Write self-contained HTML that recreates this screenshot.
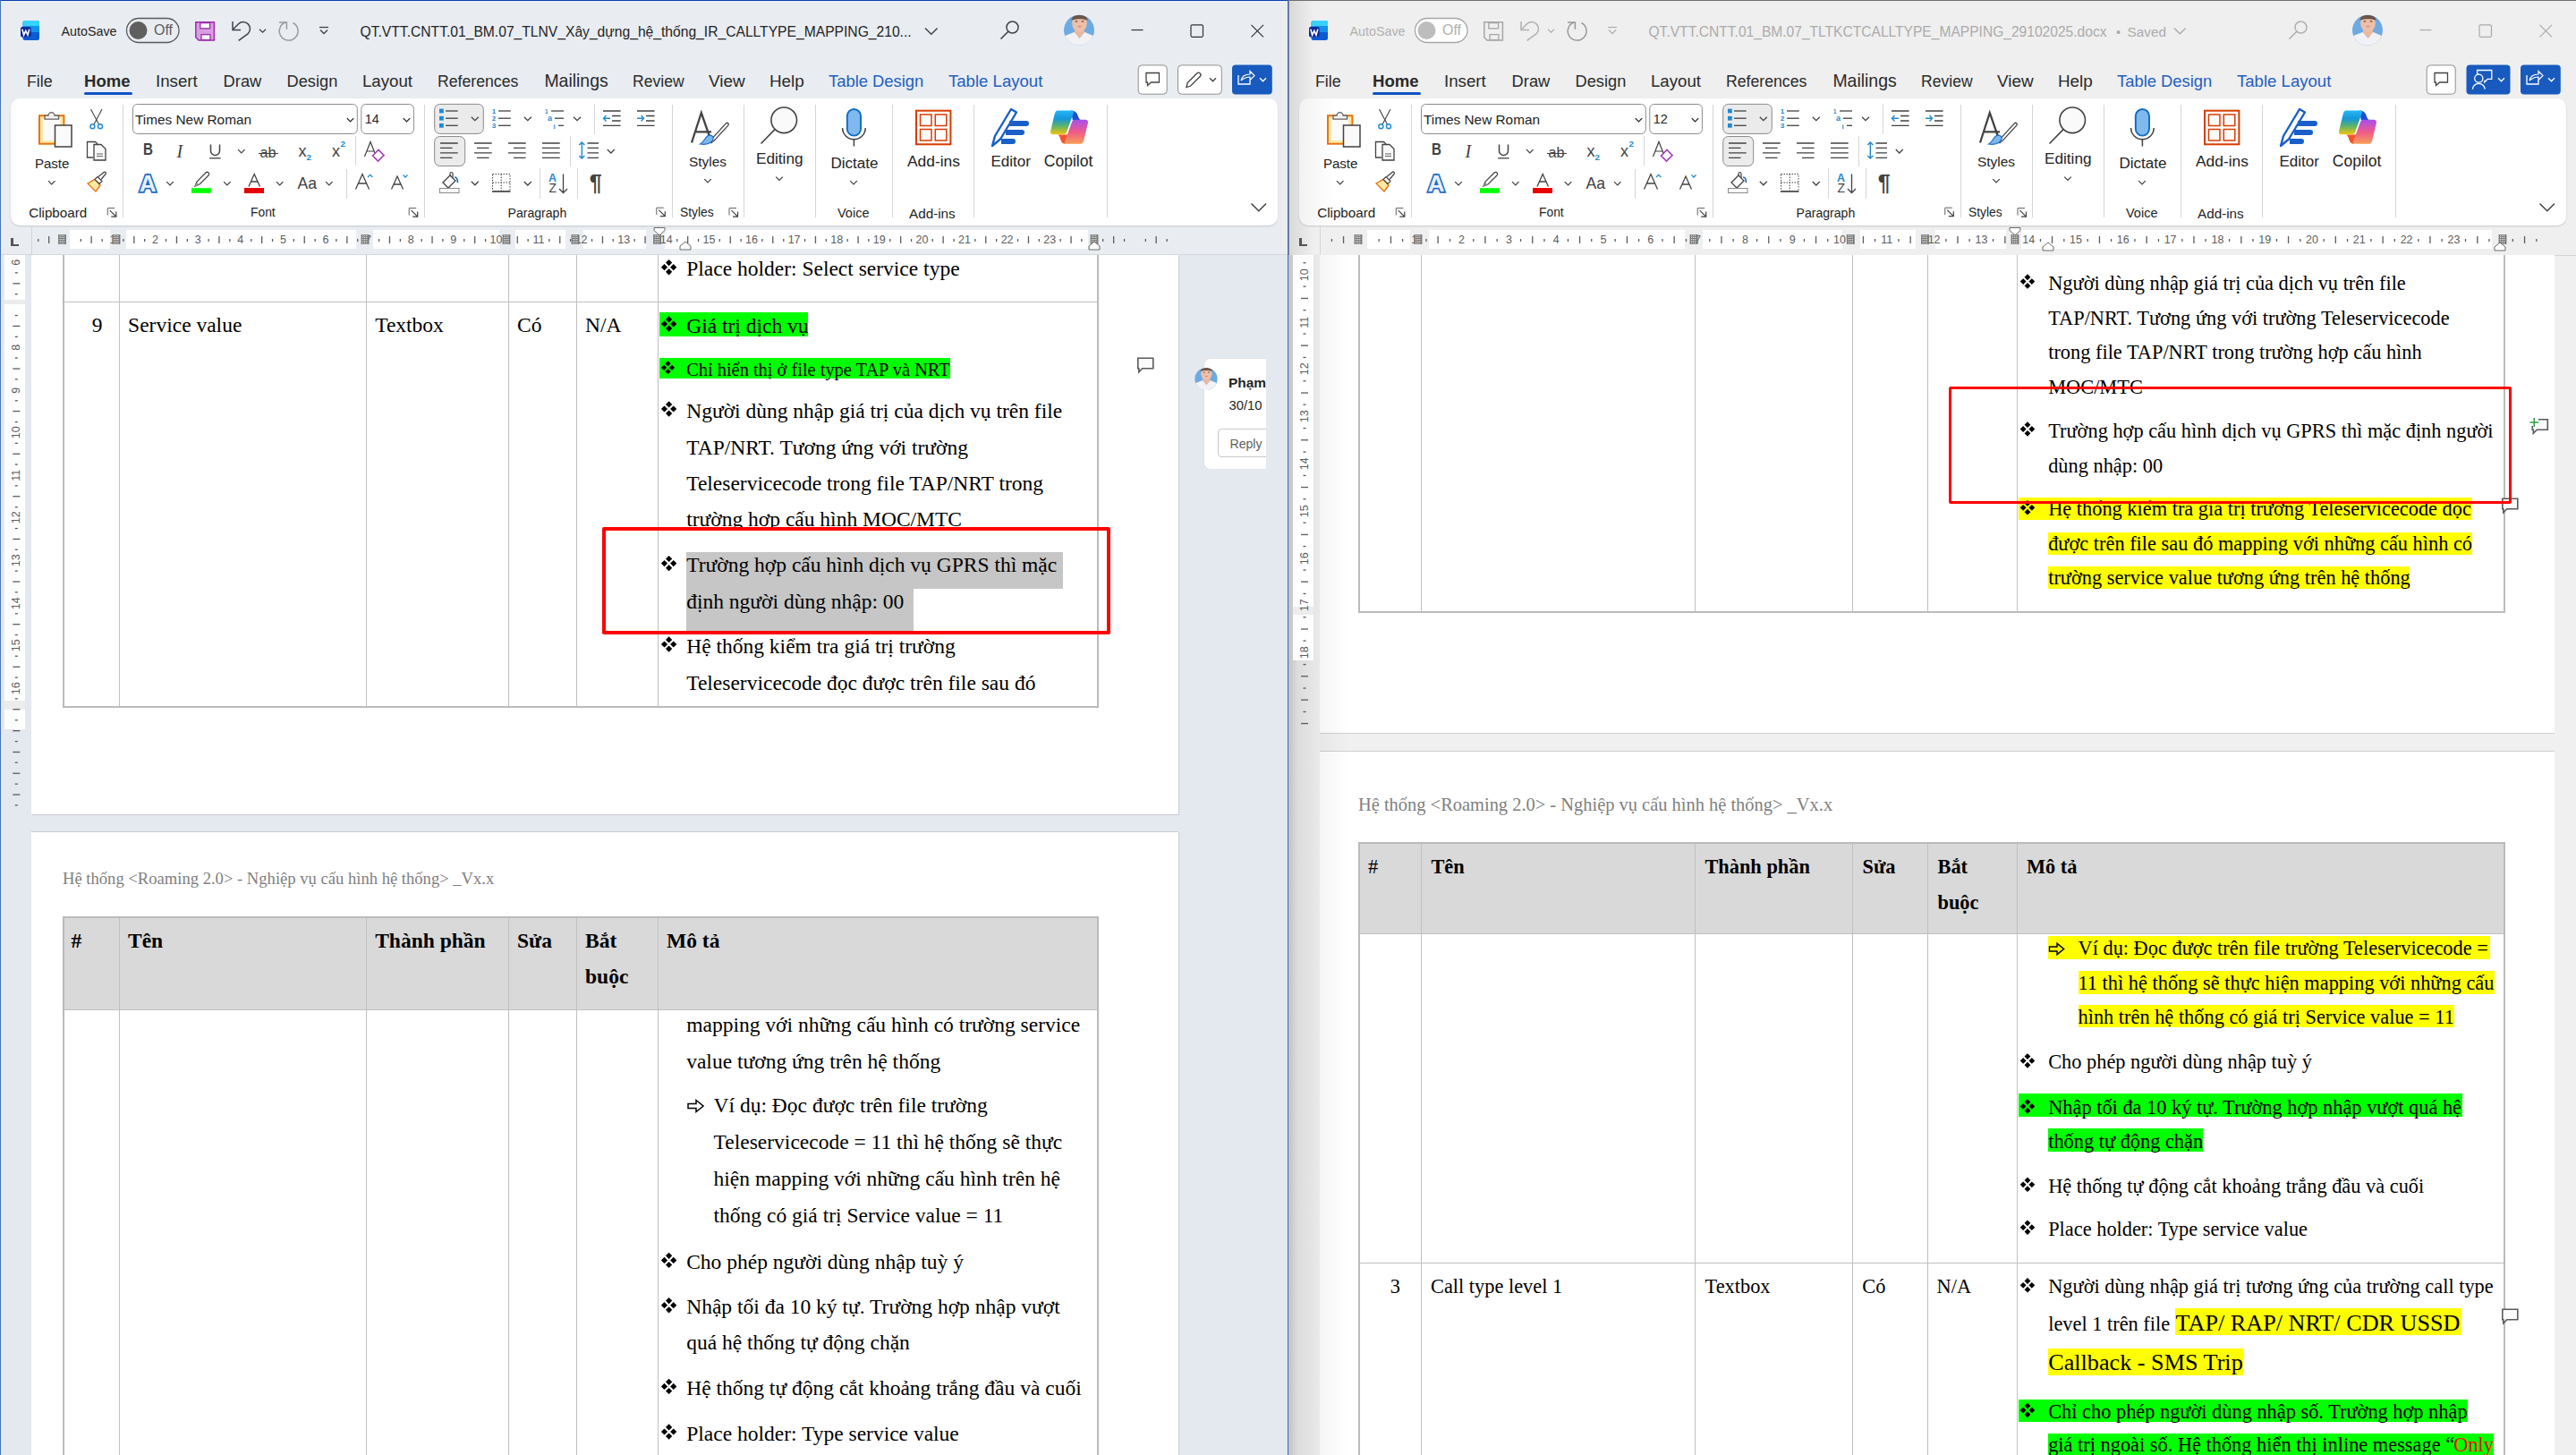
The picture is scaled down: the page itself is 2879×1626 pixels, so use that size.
<!DOCTYPE html><html><head><meta charset="utf-8"><style>html,body{margin:0;padding:0;}body{width:2879px;height:1626px;overflow:hidden;position:relative;background:#e9edf2;font-family:"Liberation Sans",sans-serif;}</style></head><body>
<div style="position:absolute;left:0.0px;top:0.0px;width:1440.0px;height:1626.0px;background:#e9edf2;"></div>
<div style="position:absolute;left:1440.0px;top:0.0px;width:1439.0px;height:1626.0px;background:#efefef;"></div>
<div style="position:absolute;left:1440.0px;top:0.0px;width:28.0px;height:1626.0px;background:linear-gradient(90deg,#d8d8d8,rgba(239,239,239,0));"></div>
<div style="position:absolute;left:1440.0px;top:0.0px;width:1.2px;height:1626.0px;background:#8a8a8a;"></div>
<div style="position:absolute;left:0.0px;top:0.0px;width:1440.0px;height:1.0px;background:#0b3fae;"></div>
<div style="position:absolute;left:0.0px;top:0.0px;width:1.0px;height:1626.0px;background:#4776b4;"></div>
<div style="position:absolute;left:1439.0px;top:0.0px;width:1.0px;height:1626.0px;background:#3a6cc0;"></div>
<div style="position:absolute;left:1440.0px;top:0.0px;width:1439.0px;height:1.0px;background:#6f6f6f;"></div>
<div style="position:absolute;left:1.0px;top:285.0px;width:1438.0px;height:1341.0px;background:#e4e8ef;"></div>
<div style="position:absolute;left:1.0px;top:284.0px;width:1438.0px;height:1.0px;background:#d3d8de;"></div>
<div style="position:absolute;left:5.0px;top:285.0px;width:23.0px;height:620.0px;background:#ffffff;"></div>
<div style="position:absolute;left:35.0px;top:285.0px;width:1282.2px;height:625.0px;background:#ffffff;box-shadow:1px 1px 0 #c9ccd0;"></div>
<div style="position:absolute;left:35.0px;top:929.5px;width:1282.2px;height:700.0px;background:#ffffff;box-shadow:0 -1px 0 #c9ccd0,1px 0 0 #c9ccd0;"></div>
<div style="position:absolute;left:34.0px;top:285.0px;width:1.0px;height:1341.0px;background:#d0d4d9;"></div>
<div style="position:absolute;left:1440.0px;top:285.4px;width:1439.0px;height:1341.0px;background:#f0f0f0;"></div>
<div style="position:absolute;left:1440.0px;top:284.8px;width:1439.0px;height:1.0px;background:#d4d4d4;"></div>
<div style="position:absolute;left:1440.0px;top:285.0px;width:34.0px;height:1341.0px;background:linear-gradient(90deg,#c9c9c9 0px,#e6e6e6 6px,#f0f0f0 30px);"></div>
<div style="position:absolute;left:1445.0px;top:285.4px;width:23.0px;height:526.0px;background:#ffffff;"></div>
<div style="position:absolute;left:1474.6px;top:285.4px;width:1380.4px;height:534.0px;background:#ffffff;box-shadow:0 1px 0 #cfcfcf;"></div>
<div style="position:absolute;left:1474.6px;top:840.2px;width:1380.4px;height:800.0px;background:#ffffff;box-shadow:0 -1px 0 #cfcfcf;"></div>
<div style="position:absolute;left:1474.0px;top:285.0px;width:1.0px;height:1341.0px;background:#d6d6d6;"></div>
<div style="position:absolute;left:70.0px;top:285.0px;width:2.0px;height:506.0px;background:#bbbbbb;"></div>
<div style="position:absolute;left:133.0px;top:285.0px;width:1.0px;height:505.0px;background:#c0c0c0;"></div>
<div style="position:absolute;left:409.0px;top:285.0px;width:1.0px;height:505.0px;background:#c0c0c0;"></div>
<div style="position:absolute;left:568.0px;top:285.0px;width:1.0px;height:505.0px;background:#c0c0c0;"></div>
<div style="position:absolute;left:644.0px;top:285.0px;width:1.0px;height:505.0px;background:#c0c0c0;"></div>
<div style="position:absolute;left:735.0px;top:285.0px;width:1.0px;height:505.0px;background:#c0c0c0;"></div>
<div style="position:absolute;left:1225.6px;top:285.0px;width:2.0px;height:506.0px;background:#bbbbbb;"></div>
<div style="position:absolute;left:71.0px;top:337.0px;width:1156.0px;height:1.0px;background:#c0c0c0;"></div>
<div style="position:absolute;left:70.0px;top:788.6px;width:1157.6px;height:2.0px;background:#bbbbbb;"></div>
<div style="position:absolute;left:767.2px;top:289.22px;font-family:'Liberation Serif', serif;font-size:23.50px;line-height:23.50px;font-weight:400;font-style:normal;color:#000;white-space:pre;">Place holder: Select service type</div>
<svg style="position:absolute;left:0;top:0;overflow:visible" width="1" height="1"><path d="M744.00 293.60 L747.60 290.00 L751.20 293.60 L747.60 297.20 Z" fill="#000"/><path d="M738.90 298.70 L742.50 295.10 L746.10 298.70 L742.50 302.30 Z" fill="#000"/><path d="M749.10 298.70 L752.70 295.10 L756.30 298.70 L752.70 302.30 Z" fill="#000"/><path d="M744.00 303.80 L747.60 300.20 L751.20 303.80 L747.60 307.40 Z" fill="#000"/></svg>
<div style="position:absolute;left:114.6px;top:351.52px;font-family:'Liberation Serif', serif;font-size:23.50px;line-height:23.50px;font-weight:400;font-style:normal;color:#000;white-space:pre;transform:translateX(-100%);">9</div>
<div style="position:absolute;left:143.1px;top:351.52px;font-family:'Liberation Serif', serif;font-size:23.50px;line-height:23.50px;font-weight:400;font-style:normal;color:#000;white-space:pre;">Service value</div>
<div style="position:absolute;left:419.2px;top:351.52px;font-family:'Liberation Serif', serif;font-size:23.50px;line-height:23.50px;font-weight:400;font-style:normal;color:#000;white-space:pre;">Textbox</div>
<div style="position:absolute;left:578.0px;top:351.52px;font-family:'Liberation Serif', serif;font-size:23.50px;line-height:23.50px;font-weight:400;font-style:normal;color:#000;white-space:pre;">Có</div>
<div style="position:absolute;left:654.0px;top:351.52px;font-family:'Liberation Serif', serif;font-size:23.50px;line-height:23.50px;font-weight:400;font-style:normal;color:#000;white-space:pre;">N/A</div>
<div style="position:absolute;left:737.0px;top:349.0px;width:166.0px;height:26.6px;background:#00ff00;"></div>
<div style="position:absolute;left:767.2px;top:352.52px;font-family:'Liberation Serif', serif;font-size:23.50px;line-height:23.50px;font-weight:400;font-style:normal;color:#000;white-space:pre;">Giá trị dịch vụ</div>
<svg style="position:absolute;left:0;top:0;overflow:visible" width="1" height="1"><path d="M744.00 356.90 L747.60 353.30 L751.20 356.90 L747.60 360.50 Z" fill="#000"/><path d="M738.90 362.00 L742.50 358.40 L746.10 362.00 L742.50 365.60 Z" fill="#000"/><path d="M749.10 362.00 L752.70 358.40 L756.30 362.00 L752.70 365.60 Z" fill="#000"/><path d="M744.00 367.10 L747.60 363.50 L751.20 367.10 L747.60 370.70 Z" fill="#000"/></svg>
<div style="position:absolute;left:737.0px;top:400.0px;width:325.0px;height:23.0px;background:#00ff00;"></div>
<div style="position:absolute;left:767.2px;top:402.72px;font-family:'Liberation Serif', serif;font-size:20.40px;line-height:20.40px;font-weight:400;font-style:normal;color:#000;white-space:pre;">Chỉ hiển thị ở file type TAP và NRT</div>
<svg style="position:absolute;left:0;top:0;overflow:visible" width="1" height="1"><path d="M743.37 406.36 L746.50 403.23 L749.63 406.36 L746.50 409.50 Z" fill="#000"/><path d="M738.93 410.80 L742.06 407.67 L745.19 410.80 L742.06 413.93 Z" fill="#000"/><path d="M747.81 410.80 L750.94 407.67 L754.07 410.80 L750.94 413.93 Z" fill="#000"/><path d="M743.37 415.24 L746.50 412.11 L749.63 415.24 L746.50 418.37 Z" fill="#000"/></svg>
<div style="position:absolute;left:767.2px;top:447.52px;font-family:'Liberation Serif', serif;font-size:23.50px;line-height:23.50px;font-weight:400;font-style:normal;color:#000;white-space:pre;">Người dùng nhập giá trị của dịch vụ trên file</div>
<svg style="position:absolute;left:0;top:0;overflow:visible" width="1" height="1"><path d="M744.00 451.90 L747.60 448.30 L751.20 451.90 L747.60 455.50 Z" fill="#000"/><path d="M738.90 457.00 L742.50 453.40 L746.10 457.00 L742.50 460.60 Z" fill="#000"/><path d="M749.10 457.00 L752.70 453.40 L756.30 457.00 L752.70 460.60 Z" fill="#000"/><path d="M744.00 462.10 L747.60 458.50 L751.20 462.10 L747.60 465.70 Z" fill="#000"/></svg>
<div style="position:absolute;left:767.2px;top:488.52px;font-family:'Liberation Serif', serif;font-size:23.50px;line-height:23.50px;font-weight:400;font-style:normal;color:#000;white-space:pre;">TAP/NRT. Tương ứng với trường</div>
<div style="position:absolute;left:767.2px;top:528.52px;font-family:'Liberation Serif', serif;font-size:23.50px;line-height:23.50px;font-weight:400;font-style:normal;color:#000;white-space:pre;">Teleservicecode trong file TAP/NRT trong</div>
<div style="position:absolute;left:767.2px;top:569.02px;font-family:'Liberation Serif', serif;font-size:23.50px;line-height:23.50px;font-weight:400;font-style:normal;color:#000;white-space:pre;">trường hợp cấu hình MOC/MTC</div>
<div style="position:absolute;left:767.2px;top:617.0px;width:420.6px;height:41.0px;background:#c6c6c6;"></div>
<div style="position:absolute;left:767.2px;top:658.0px;width:253.5px;height:46.6px;background:#c6c6c6;"></div>
<div style="position:absolute;left:767.2px;top:620.12px;font-family:'Liberation Serif', serif;font-size:23.50px;line-height:23.50px;font-weight:400;font-style:normal;color:#000;white-space:pre;">Trường hợp cấu hình dịch vụ GPRS thì mặc</div>
<svg style="position:absolute;left:0;top:0;overflow:visible" width="1" height="1"><path d="M744.00 624.50 L747.60 620.90 L751.20 624.50 L747.60 628.10 Z" fill="#000"/><path d="M738.90 629.60 L742.50 626.00 L746.10 629.60 L742.50 633.20 Z" fill="#000"/><path d="M749.10 629.60 L752.70 626.00 L756.30 629.60 L752.70 633.20 Z" fill="#000"/><path d="M744.00 634.70 L747.60 631.10 L751.20 634.70 L747.60 638.30 Z" fill="#000"/></svg>
<div style="position:absolute;left:767.2px;top:661.32px;font-family:'Liberation Serif', serif;font-size:23.50px;line-height:23.50px;font-weight:400;font-style:normal;color:#000;white-space:pre;">định người dùng nhập: 00</div>
<div style="position:absolute;left:767.2px;top:710.52px;font-family:'Liberation Serif', serif;font-size:23.50px;line-height:23.50px;font-weight:400;font-style:normal;color:#000;white-space:pre;">Hệ thống kiểm tra giá trị trường</div>
<svg style="position:absolute;left:0;top:0;overflow:visible" width="1" height="1"><path d="M744.00 714.90 L747.60 711.30 L751.20 714.90 L747.60 718.50 Z" fill="#000"/><path d="M738.90 720.00 L742.50 716.40 L746.10 720.00 L742.50 723.60 Z" fill="#000"/><path d="M749.10 720.00 L752.70 716.40 L756.30 720.00 L752.70 723.60 Z" fill="#000"/><path d="M744.00 725.10 L747.60 721.50 L751.20 725.10 L747.60 728.70 Z" fill="#000"/></svg>
<div style="position:absolute;left:767.2px;top:751.52px;font-family:'Liberation Serif', serif;font-size:23.50px;line-height:23.50px;font-weight:400;font-style:normal;color:#000;white-space:pre;">Teleservicecode đọc được trên file sau đó</div>
<div style="position:absolute;left:70.0px;top:972.82px;font-family:'Liberation Serif', serif;font-size:18.60px;line-height:18.60px;font-weight:400;font-style:normal;color:#808080;white-space:pre;">Hệ thống &lt;Roaming 2.0&gt; - Nghiệp vụ cấu hình hệ thống&gt; _Vx.x</div>
<div style="position:absolute;left:71.0px;top:1025.0px;width:1156.0px;height:103.0px;background:#d9d9d9;"></div>
<div style="position:absolute;left:70.0px;top:1024.0px;width:2.0px;height:602.0px;background:#bbbbbb;"></div>
<div style="position:absolute;left:133.0px;top:1025.0px;width:1.0px;height:601.0px;background:#c0c0c0;"></div>
<div style="position:absolute;left:409.0px;top:1025.0px;width:1.0px;height:601.0px;background:#c0c0c0;"></div>
<div style="position:absolute;left:568.0px;top:1025.0px;width:1.0px;height:601.0px;background:#c0c0c0;"></div>
<div style="position:absolute;left:644.0px;top:1025.0px;width:1.0px;height:601.0px;background:#c0c0c0;"></div>
<div style="position:absolute;left:735.0px;top:1025.0px;width:1.0px;height:601.0px;background:#c0c0c0;"></div>
<div style="position:absolute;left:1225.6px;top:1024.0px;width:2.0px;height:602.0px;background:#bbbbbb;"></div>
<div style="position:absolute;left:70.0px;top:1024.0px;width:1157.6px;height:2.0px;background:#bbbbbb;"></div>
<div style="position:absolute;left:71.0px;top:1128.0px;width:1156.0px;height:1.0px;background:#c0c0c0;"></div>
<div style="position:absolute;left:79.6px;top:1039.52px;font-family:'Liberation Serif', serif;font-size:23.50px;line-height:23.50px;font-weight:700;font-style:normal;color:#000;white-space:pre;">#</div>
<div style="position:absolute;left:143.0px;top:1039.52px;font-family:'Liberation Serif', serif;font-size:23.50px;line-height:23.50px;font-weight:700;font-style:normal;color:#000;white-space:pre;">Tên</div>
<div style="position:absolute;left:419.2px;top:1039.52px;font-family:'Liberation Serif', serif;font-size:23.50px;line-height:23.50px;font-weight:700;font-style:normal;color:#000;white-space:pre;">Thành phần</div>
<div style="position:absolute;left:578.0px;top:1039.52px;font-family:'Liberation Serif', serif;font-size:23.50px;line-height:23.50px;font-weight:700;font-style:normal;color:#000;white-space:pre;">Sửa</div>
<div style="position:absolute;left:654.0px;top:1039.52px;font-family:'Liberation Serif', serif;font-size:23.50px;line-height:23.50px;font-weight:700;font-style:normal;color:#000;white-space:pre;">Bắt</div>
<div style="position:absolute;left:654.0px;top:1079.92px;font-family:'Liberation Serif', serif;font-size:23.50px;line-height:23.50px;font-weight:700;font-style:normal;color:#000;white-space:pre;">buộc</div>
<div style="position:absolute;left:745.0px;top:1039.52px;font-family:'Liberation Serif', serif;font-size:23.50px;line-height:23.50px;font-weight:700;font-style:normal;color:#000;white-space:pre;">Mô tả</div>
<div style="position:absolute;left:767.2px;top:1134.12px;font-family:'Liberation Serif', serif;font-size:23.50px;line-height:23.50px;font-weight:400;font-style:normal;color:#000;white-space:pre;">mapping với những cấu hình có trường service</div>
<div style="position:absolute;left:767.2px;top:1175.02px;font-family:'Liberation Serif', serif;font-size:23.50px;line-height:23.50px;font-weight:400;font-style:normal;color:#000;white-space:pre;">value tương ứng trên hệ thống</div>
<svg style="position:absolute;left:0;top:0;overflow:visible" width="1" height="1"><path d="M769.00 1233.40 L778.00 1233.40 L778.00 1229.50 L786.00 1236.00 L778.00 1242.50 L778.00 1238.60 L769.00 1238.60 Z" fill="none" stroke="#000" stroke-width="1.50" stroke-linejoin="miter"/></svg>
<div style="position:absolute;left:797.6px;top:1224.42px;font-family:'Liberation Serif', serif;font-size:23.50px;line-height:23.50px;font-weight:400;font-style:normal;color:#000;white-space:pre;">Ví dụ: Đọc được trên file trường</div>
<div style="position:absolute;left:797.6px;top:1265.32px;font-family:'Liberation Serif', serif;font-size:23.50px;line-height:23.50px;font-weight:400;font-style:normal;color:#000;white-space:pre;">Teleservicecode = 11 thì hệ thống sẽ thực</div>
<div style="position:absolute;left:797.6px;top:1305.72px;font-family:'Liberation Serif', serif;font-size:23.50px;line-height:23.50px;font-weight:400;font-style:normal;color:#000;white-space:pre;">hiện mapping với những cấu hình trên hệ</div>
<div style="position:absolute;left:797.6px;top:1346.72px;font-family:'Liberation Serif', serif;font-size:23.50px;line-height:23.50px;font-weight:400;font-style:normal;color:#000;white-space:pre;">thống có giá trị Service value = 11</div>
<div style="position:absolute;left:767.2px;top:1398.92px;font-family:'Liberation Serif', serif;font-size:23.50px;line-height:23.50px;font-weight:400;font-style:normal;color:#000;white-space:pre;">Cho phép người dùng nhập tuỳ ý</div>
<svg style="position:absolute;left:0;top:0;overflow:visible" width="1" height="1"><path d="M744.00 1403.30 L747.60 1399.70 L751.20 1403.30 L747.60 1406.90 Z" fill="#000"/><path d="M738.90 1408.40 L742.50 1404.80 L746.10 1408.40 L742.50 1412.00 Z" fill="#000"/><path d="M749.10 1408.40 L752.70 1404.80 L756.30 1408.40 L752.70 1412.00 Z" fill="#000"/><path d="M744.00 1413.50 L747.60 1409.90 L751.20 1413.50 L747.60 1417.10 Z" fill="#000"/></svg>
<div style="position:absolute;left:767.2px;top:1449.22px;font-family:'Liberation Serif', serif;font-size:23.50px;line-height:23.50px;font-weight:400;font-style:normal;color:#000;white-space:pre;">Nhập tối đa 10 ký tự. Trường hợp nhập vượt</div>
<svg style="position:absolute;left:0;top:0;overflow:visible" width="1" height="1"><path d="M744.00 1453.60 L747.60 1450.00 L751.20 1453.60 L747.60 1457.20 Z" fill="#000"/><path d="M738.90 1458.70 L742.50 1455.10 L746.10 1458.70 L742.50 1462.30 Z" fill="#000"/><path d="M749.10 1458.70 L752.70 1455.10 L756.30 1458.70 L752.70 1462.30 Z" fill="#000"/><path d="M744.00 1463.80 L747.60 1460.20 L751.20 1463.80 L747.60 1467.40 Z" fill="#000"/></svg>
<div style="position:absolute;left:767.2px;top:1489.02px;font-family:'Liberation Serif', serif;font-size:23.50px;line-height:23.50px;font-weight:400;font-style:normal;color:#000;white-space:pre;">quá hệ thống tự động chặn</div>
<div style="position:absolute;left:767.2px;top:1539.92px;font-family:'Liberation Serif', serif;font-size:23.50px;line-height:23.50px;font-weight:400;font-style:normal;color:#000;white-space:pre;">Hệ thống tự động cắt khoảng trắng đầu và cuối</div>
<svg style="position:absolute;left:0;top:0;overflow:visible" width="1" height="1"><path d="M744.00 1544.30 L747.60 1540.70 L751.20 1544.30 L747.60 1547.90 Z" fill="#000"/><path d="M738.90 1549.40 L742.50 1545.80 L746.10 1549.40 L742.50 1553.00 Z" fill="#000"/><path d="M749.10 1549.40 L752.70 1545.80 L756.30 1549.40 L752.70 1553.00 Z" fill="#000"/><path d="M744.00 1554.50 L747.60 1550.90 L751.20 1554.50 L747.60 1558.10 Z" fill="#000"/></svg>
<div style="position:absolute;left:767.2px;top:1590.52px;font-family:'Liberation Serif', serif;font-size:23.50px;line-height:23.50px;font-weight:400;font-style:normal;color:#000;white-space:pre;">Place holder: Type service value</div>
<svg style="position:absolute;left:0;top:0;overflow:visible" width="1" height="1"><path d="M744.00 1594.90 L747.60 1591.30 L751.20 1594.90 L747.60 1598.50 Z" fill="#000"/><path d="M738.90 1600.00 L742.50 1596.40 L746.10 1600.00 L742.50 1603.60 Z" fill="#000"/><path d="M749.10 1600.00 L752.70 1596.40 L756.30 1600.00 L752.70 1603.60 Z" fill="#000"/><path d="M744.00 1605.10 L747.60 1601.50 L751.20 1605.10 L747.60 1608.70 Z" fill="#000"/></svg>
<div style="position:absolute;left:1518.0px;top:285.4px;width:2.0px;height:399.4px;background:#bbbbbb;"></div>
<div style="position:absolute;left:1588.0px;top:285.4px;width:1.0px;height:398.6px;background:#c0c0c0;"></div>
<div style="position:absolute;left:1894.0px;top:285.4px;width:1.0px;height:398.6px;background:#c0c0c0;"></div>
<div style="position:absolute;left:2070.0px;top:285.4px;width:1.0px;height:398.6px;background:#c0c0c0;"></div>
<div style="position:absolute;left:2154.0px;top:285.4px;width:1.0px;height:398.6px;background:#c0c0c0;"></div>
<div style="position:absolute;left:2254.0px;top:285.4px;width:1.0px;height:398.6px;background:#c0c0c0;"></div>
<div style="position:absolute;left:2798.0px;top:285.4px;width:2.0px;height:399.4px;background:#bbbbbb;"></div>
<div style="position:absolute;left:1518.0px;top:683.0px;width:1282.0px;height:2.0px;background:#bbbbbb;"></div>
<div style="position:absolute;left:2289.2px;top:305.68px;font-family:'Liberation Serif', serif;font-size:22.36px;line-height:22.36px;font-weight:400;font-style:normal;color:#000;white-space:pre;">Người dùng nhập giá trị của dịch vụ trên file</div>
<svg style="position:absolute;left:0;top:0;overflow:visible" width="1" height="1"><path d="M2262.58 309.75 L2266.00 306.33 L2269.42 309.75 L2266.00 313.17 Z" fill="#000"/><path d="M2257.74 314.60 L2261.16 311.18 L2264.58 314.60 L2261.16 318.02 Z" fill="#000"/><path d="M2267.42 314.60 L2270.84 311.18 L2274.26 314.60 L2270.84 318.02 Z" fill="#000"/><path d="M2262.58 319.44 L2266.00 316.02 L2269.42 319.44 L2266.00 322.87 Z" fill="#000"/></svg>
<div style="position:absolute;left:2289.2px;top:344.68px;font-family:'Liberation Serif', serif;font-size:22.36px;line-height:22.36px;font-weight:400;font-style:normal;color:#000;white-space:pre;">TAP/NRT. Tương ứng với trường Teleservicecode</div>
<div style="position:absolute;left:2289.2px;top:383.08px;font-family:'Liberation Serif', serif;font-size:22.36px;line-height:22.36px;font-weight:400;font-style:normal;color:#000;white-space:pre;">trong file TAP/NRT trong trường hợp cấu hình</div>
<div style="position:absolute;left:2289.2px;top:421.68px;font-family:'Liberation Serif', serif;font-size:22.36px;line-height:22.36px;font-weight:400;font-style:normal;color:#000;white-space:pre;">MOC/MTC</div>
<div style="position:absolute;left:2289.2px;top:470.58px;font-family:'Liberation Serif', serif;font-size:22.36px;line-height:22.36px;font-weight:400;font-style:normal;color:#000;white-space:pre;">Trường hợp cấu hình dịch vụ GPRS thì mặc định người</div>
<svg style="position:absolute;left:0;top:0;overflow:visible" width="1" height="1"><path d="M2262.58 474.65 L2266.00 471.23 L2269.42 474.65 L2266.00 478.07 Z" fill="#000"/><path d="M2257.74 479.50 L2261.16 476.08 L2264.58 479.50 L2261.16 482.92 Z" fill="#000"/><path d="M2267.42 479.50 L2270.84 476.08 L2274.26 479.50 L2270.84 482.92 Z" fill="#000"/><path d="M2262.58 484.35 L2266.00 480.93 L2269.42 484.35 L2266.00 487.77 Z" fill="#000"/></svg>
<div style="position:absolute;left:2289.2px;top:509.58px;font-family:'Liberation Serif', serif;font-size:22.36px;line-height:22.36px;font-weight:400;font-style:normal;color:#000;white-space:pre;">dùng nhập: 00</div>
<div style="position:absolute;left:2256.0px;top:556.0px;width:507.0px;height:25.0px;background:#ffff00;"></div>
<div style="position:absolute;left:2289.0px;top:595.0px;width:474.0px;height:25.0px;background:#ffff00;"></div>
<div style="position:absolute;left:2289.0px;top:633.0px;width:403.6px;height:25.0px;background:#ffff00;"></div>
<div style="position:absolute;left:2289.2px;top:558.38px;font-family:'Liberation Serif', serif;font-size:22.36px;line-height:22.36px;font-weight:400;font-style:normal;color:#000;white-space:pre;">Hệ thống kiểm tra giá trị trường Teleservicecode đọc</div>
<svg style="position:absolute;left:0;top:0;overflow:visible" width="1" height="1"><path d="M2262.58 562.45 L2266.00 559.03 L2269.42 562.45 L2266.00 565.87 Z" fill="#000"/><path d="M2257.74 567.30 L2261.16 563.88 L2264.58 567.30 L2261.16 570.72 Z" fill="#000"/><path d="M2267.42 567.30 L2270.84 563.88 L2274.26 567.30 L2270.84 570.72 Z" fill="#000"/><path d="M2262.58 572.14 L2266.00 568.73 L2269.42 572.14 L2266.00 575.56 Z" fill="#000"/></svg>
<div style="position:absolute;left:2289.2px;top:596.78px;font-family:'Liberation Serif', serif;font-size:22.36px;line-height:22.36px;font-weight:400;font-style:normal;color:#000;white-space:pre;">được trên file sau đó mapping với những cấu hình có</div>
<div style="position:absolute;left:2289.2px;top:635.18px;font-family:'Liberation Serif', serif;font-size:22.36px;line-height:22.36px;font-weight:400;font-style:normal;color:#000;white-space:pre;">trường service value tương ứng trên hệ thống</div>
<div style="position:absolute;left:1518.0px;top:889.08px;font-family:'Liberation Serif', serif;font-size:20.45px;line-height:20.45px;font-weight:400;font-style:normal;color:#808080;white-space:pre;">Hệ thống &lt;Roaming 2.0&gt; - Nghiệp vụ cấu hình hệ thống&gt; _Vx.x</div>
<div style="position:absolute;left:1519.0px;top:942.5px;width:1280.0px;height:101.0px;background:#d9d9d9;"></div>
<div style="position:absolute;left:1518.0px;top:941.5px;width:2.0px;height:684.5px;background:#bbbbbb;"></div>
<div style="position:absolute;left:1588.0px;top:942.0px;width:1.0px;height:684.0px;background:#c0c0c0;"></div>
<div style="position:absolute;left:1894.0px;top:942.0px;width:1.0px;height:684.0px;background:#c0c0c0;"></div>
<div style="position:absolute;left:2070.0px;top:942.0px;width:1.0px;height:684.0px;background:#c0c0c0;"></div>
<div style="position:absolute;left:2154.0px;top:942.0px;width:1.0px;height:684.0px;background:#c0c0c0;"></div>
<div style="position:absolute;left:2254.0px;top:942.0px;width:1.0px;height:684.0px;background:#c0c0c0;"></div>
<div style="position:absolute;left:2798.0px;top:941.5px;width:2.0px;height:684.5px;background:#bbbbbb;"></div>
<div style="position:absolute;left:1518.0px;top:940.8px;width:1282.0px;height:2.0px;background:#bbbbbb;"></div>
<div style="position:absolute;left:1519.0px;top:1043.0px;width:1280.0px;height:1.0px;background:#c0c0c0;"></div>
<div style="position:absolute;left:1519.0px;top:1410.5px;width:1280.0px;height:1.0px;background:#c0c0c0;"></div>
<div style="position:absolute;left:1529.0px;top:958.38px;font-family:'Liberation Serif', serif;font-size:22.36px;line-height:22.36px;font-weight:400;font-style:normal;color:#000;white-space:pre;">#</div>
<div style="position:absolute;left:1599.4px;top:958.38px;font-family:'Liberation Serif', serif;font-size:22.36px;line-height:22.36px;font-weight:700;font-style:normal;color:#000;white-space:pre;">Tên</div>
<div style="position:absolute;left:1905.4px;top:958.38px;font-family:'Liberation Serif', serif;font-size:22.36px;line-height:22.36px;font-weight:700;font-style:normal;color:#000;white-space:pre;">Thành phần</div>
<div style="position:absolute;left:2081.5px;top:958.38px;font-family:'Liberation Serif', serif;font-size:22.36px;line-height:22.36px;font-weight:700;font-style:normal;color:#000;white-space:pre;">Sửa</div>
<div style="position:absolute;left:2165.5px;top:958.38px;font-family:'Liberation Serif', serif;font-size:22.36px;line-height:22.36px;font-weight:700;font-style:normal;color:#000;white-space:pre;">Bắt</div>
<div style="position:absolute;left:2165.5px;top:997.68px;font-family:'Liberation Serif', serif;font-size:22.36px;line-height:22.36px;font-weight:700;font-style:normal;color:#000;white-space:pre;">buộc</div>
<div style="position:absolute;left:2265.0px;top:958.38px;font-family:'Liberation Serif', serif;font-size:22.36px;line-height:22.36px;font-weight:700;font-style:normal;color:#000;white-space:pre;">Mô tả</div>
<div style="position:absolute;left:2289.0px;top:1046.0px;width:494.0px;height:26.0px;background:#ffff00;"></div>
<div style="position:absolute;left:2322.5px;top:1084.6px;width:465.5px;height:26.4px;background:#ffff00;"></div>
<div style="position:absolute;left:2322.5px;top:1123.0px;width:420.5px;height:25.0px;background:#ffff00;"></div>
<svg style="position:absolute;left:0;top:0;overflow:visible" width="1" height="1"><path d="M2290.50 1058.03 L2299.05 1058.03 L2299.05 1054.33 L2306.65 1060.50 L2299.05 1066.67 L2299.05 1062.97 L2290.50 1062.97 Z" fill="none" stroke="#000" stroke-width="1.42" stroke-linejoin="miter"/></svg>
<div style="position:absolute;left:2322.5px;top:1049.18px;font-family:'Liberation Serif', serif;font-size:22.36px;line-height:22.36px;font-weight:400;font-style:normal;color:#000;white-space:pre;">Ví dụ: Đọc được trên file trường Teleservicecode =</div>
<div style="position:absolute;left:2322.5px;top:1087.88px;font-family:'Liberation Serif', serif;font-size:22.36px;line-height:22.36px;font-weight:400;font-style:normal;color:#000;white-space:pre;">11 thì hệ thống sẽ thực hiện mapping với những cấu</div>
<div style="position:absolute;left:2322.5px;top:1126.18px;font-family:'Liberation Serif', serif;font-size:22.36px;line-height:22.36px;font-weight:400;font-style:normal;color:#000;white-space:pre;">hình trên hệ thống có giá trị Service value = 11</div>
<div style="position:absolute;left:2289.2px;top:1176.48px;font-family:'Liberation Serif', serif;font-size:22.36px;line-height:22.36px;font-weight:400;font-style:normal;color:#000;white-space:pre;">Cho phép người dùng nhập tuỳ ý</div>
<svg style="position:absolute;left:0;top:0;overflow:visible" width="1" height="1"><path d="M2262.58 1180.56 L2266.00 1177.13 L2269.42 1180.56 L2266.00 1183.98 Z" fill="#000"/><path d="M2257.74 1185.40 L2261.16 1181.98 L2264.58 1185.40 L2261.16 1188.82 Z" fill="#000"/><path d="M2267.42 1185.40 L2270.84 1181.98 L2274.26 1185.40 L2270.84 1188.82 Z" fill="#000"/><path d="M2262.58 1190.25 L2266.00 1186.83 L2269.42 1190.25 L2266.00 1193.67 Z" fill="#000"/></svg>
<div style="position:absolute;left:2256.0px;top:1222.0px;width:495.5px;height:26.0px;background:#00ff00;"></div>
<div style="position:absolute;left:2289.0px;top:1261.0px;width:172.6px;height:25.6px;background:#00ff00;"></div>
<div style="position:absolute;left:2289.2px;top:1227.48px;font-family:'Liberation Serif', serif;font-size:22.36px;line-height:22.36px;font-weight:400;font-style:normal;color:#000;white-space:pre;">Nhập tối đa 10 ký tự. Trường hợp nhập vượt quá hệ</div>
<svg style="position:absolute;left:0;top:0;overflow:visible" width="1" height="1"><path d="M2262.58 1231.56 L2266.00 1228.13 L2269.42 1231.56 L2266.00 1234.98 Z" fill="#000"/><path d="M2257.74 1236.40 L2261.16 1232.98 L2264.58 1236.40 L2261.16 1239.82 Z" fill="#000"/><path d="M2267.42 1236.40 L2270.84 1232.98 L2274.26 1236.40 L2270.84 1239.82 Z" fill="#000"/><path d="M2262.58 1241.25 L2266.00 1237.83 L2269.42 1241.25 L2266.00 1244.67 Z" fill="#000"/></svg>
<div style="position:absolute;left:2289.2px;top:1264.88px;font-family:'Liberation Serif', serif;font-size:22.36px;line-height:22.36px;font-weight:400;font-style:normal;color:#000;white-space:pre;">thống tự động chặn</div>
<div style="position:absolute;left:2289.2px;top:1314.88px;font-family:'Liberation Serif', serif;font-size:22.36px;line-height:22.36px;font-weight:400;font-style:normal;color:#000;white-space:pre;">Hệ thống tự động cắt khoảng trắng đầu và cuối</div>
<svg style="position:absolute;left:0;top:0;overflow:visible" width="1" height="1"><path d="M2262.58 1318.96 L2266.00 1315.54 L2269.42 1318.96 L2266.00 1322.38 Z" fill="#000"/><path d="M2257.74 1323.80 L2261.16 1320.38 L2264.58 1323.80 L2261.16 1327.22 Z" fill="#000"/><path d="M2267.42 1323.80 L2270.84 1320.38 L2274.26 1323.80 L2270.84 1327.22 Z" fill="#000"/><path d="M2262.58 1328.65 L2266.00 1325.23 L2269.42 1328.65 L2266.00 1332.07 Z" fill="#000"/></svg>
<div style="position:absolute;left:2289.2px;top:1362.78px;font-family:'Liberation Serif', serif;font-size:22.36px;line-height:22.36px;font-weight:400;font-style:normal;color:#000;white-space:pre;">Place holder: Type service value</div>
<svg style="position:absolute;left:0;top:0;overflow:visible" width="1" height="1"><path d="M2262.58 1366.86 L2266.00 1363.43 L2269.42 1366.86 L2266.00 1370.28 Z" fill="#000"/><path d="M2257.74 1371.70 L2261.16 1368.28 L2264.58 1371.70 L2261.16 1375.12 Z" fill="#000"/><path d="M2267.42 1371.70 L2270.84 1368.28 L2274.26 1371.70 L2270.84 1375.12 Z" fill="#000"/><path d="M2262.58 1376.55 L2266.00 1373.12 L2269.42 1376.55 L2266.00 1379.97 Z" fill="#000"/></svg>
<div style="position:absolute;left:1565.0px;top:1426.98px;font-family:'Liberation Serif', serif;font-size:22.36px;line-height:22.36px;font-weight:400;font-style:normal;color:#000;white-space:pre;transform:translateX(-100%);">3</div>
<div style="position:absolute;left:1599.0px;top:1426.98px;font-family:'Liberation Serif', serif;font-size:22.36px;line-height:22.36px;font-weight:400;font-style:normal;color:#000;white-space:pre;">Call type level 1</div>
<div style="position:absolute;left:1905.6px;top:1426.98px;font-family:'Liberation Serif', serif;font-size:22.36px;line-height:22.36px;font-weight:400;font-style:normal;color:#000;white-space:pre;">Textbox</div>
<div style="position:absolute;left:2081.3px;top:1426.98px;font-family:'Liberation Serif', serif;font-size:22.36px;line-height:22.36px;font-weight:400;font-style:normal;color:#000;white-space:pre;">Có</div>
<div style="position:absolute;left:2164.6px;top:1426.98px;font-family:'Liberation Serif', serif;font-size:22.36px;line-height:22.36px;font-weight:400;font-style:normal;color:#000;white-space:pre;">N/A</div>
<div style="position:absolute;left:2289.2px;top:1427.38px;font-family:'Liberation Serif', serif;font-size:22.36px;line-height:22.36px;font-weight:400;font-style:normal;color:#000;white-space:pre;">Người dùng nhập giá trị tương ứng của trường call type</div>
<svg style="position:absolute;left:0;top:0;overflow:visible" width="1" height="1"><path d="M2262.58 1431.46 L2266.00 1428.04 L2269.42 1431.46 L2266.00 1434.88 Z" fill="#000"/><path d="M2257.74 1436.30 L2261.16 1432.88 L2264.58 1436.30 L2261.16 1439.72 Z" fill="#000"/><path d="M2267.42 1436.30 L2270.84 1432.88 L2274.26 1436.30 L2270.84 1439.72 Z" fill="#000"/><path d="M2262.58 1441.15 L2266.00 1437.73 L2269.42 1441.15 L2266.00 1444.57 Z" fill="#000"/></svg>
<div style="position:absolute;left:2289.2px;top:1469.08px;font-family:'Liberation Serif', serif;font-size:22.36px;line-height:22.36px;font-weight:400;font-style:normal;color:#000;white-space:pre;">level 1 trên file </div>
<div style="position:absolute;left:2430.8px;top:1462.0px;width:320.0px;height:30.0px;background:#ffff00;"></div>
<div style="position:absolute;left:2431.6px;top:1465.86px;font-family:'Liberation Serif', serif;font-size:26.20px;line-height:26.20px;font-weight:400;font-style:normal;color:#000;white-space:pre;">TAP/ RAP/ NRT/ CDR USSD</div>
<div style="position:absolute;left:2289.0px;top:1507.0px;width:217.6px;height:29.6px;background:#ffff00;"></div>
<div style="position:absolute;left:2289.2px;top:1509.56px;font-family:'Liberation Serif', serif;font-size:26.20px;line-height:26.20px;font-weight:400;font-style:normal;color:#000;white-space:pre;">Callback - SMS Trip</div>
<div style="position:absolute;left:2256.0px;top:1563.6px;width:501.8px;height:25.0px;background:#00ff00;"></div>
<div style="position:absolute;left:2289.0px;top:1602.0px;width:498.0px;height:24.0px;background:#00ff00;"></div>
<div style="position:absolute;left:2289.2px;top:1566.98px;font-family:'Liberation Serif', serif;font-size:22.36px;line-height:22.36px;font-weight:400;font-style:normal;color:#000;white-space:pre;">Chỉ cho phép người dùng nhập số. Trường hợp nhập</div>
<svg style="position:absolute;left:0;top:0;overflow:visible" width="1" height="1"><path d="M2262.58 1571.06 L2266.00 1567.63 L2269.42 1571.06 L2266.00 1574.48 Z" fill="#000"/><path d="M2257.74 1575.90 L2261.16 1572.48 L2264.58 1575.90 L2261.16 1579.32 Z" fill="#000"/><path d="M2267.42 1575.90 L2270.84 1572.48 L2274.26 1575.90 L2270.84 1579.32 Z" fill="#000"/><path d="M2262.58 1580.75 L2266.00 1577.33 L2269.42 1580.75 L2266.00 1584.17 Z" fill="#000"/></svg>
<div style="position:absolute;left:2289.2px;top:1604.48px;font-family:'Liberation Serif', serif;font-size:22.36px;line-height:22.36px;font-weight:400;font-style:normal;color:#000;white-space:pre;">giá trị ngoài số. Hệ thống hiển thị inline message “</div>
<div style="position:absolute;left:2787.0px;top:1604.48px;font-family:'Liberation Serif', serif;font-size:22.36px;line-height:22.36px;font-weight:400;font-style:normal;color:#ff0000;white-space:pre;transform:translateX(-100%);">Only</div>
<svg style="position:absolute;left:0;top:0;overflow:visible" width="1" height="1"><rect x="25.5" y="23" width="18.5" height="22" rx="2.5" fill="#0b5bd3"/><rect x="25.5" y="23" width="18.5" height="8" rx="2.5" fill="#38d3fb"/><rect x="25.5" y="29" width="18.5" height="7" fill="#1591ea"/><rect x="23" y="30" width="11.6" height="11.6" rx="2" fill="#0b2a9c"/><path d="M24.8 32.6 L26.6 39.2 L28.8 34.4 L31 39.2 L32.8 32.6" fill="none" stroke="#fff" stroke-width="1.6"/></svg>
<div style="position:absolute;left:68.5px;top:27.69px;font-family:'Liberation Sans', sans-serif;font-size:14.30px;line-height:14.30px;font-weight:400;font-style:normal;color:#242424;white-space:pre;">AutoSave</div>
<svg style="position:absolute;left:0;top:0;overflow:visible" width="1" height="1"><rect x="141.5" y="20.5" width="58.5" height="27" rx="13.5" fill="none" stroke="#5a5a5a" stroke-width="1.3"/><circle cx="154.5" cy="34" r="10" fill="#5f5f5f"/></svg>
<div style="position:absolute;left:172.0px;top:26.08px;font-family:'Liberation Sans', sans-serif;font-size:15.96px;line-height:15.96px;font-weight:400;font-style:normal;color:#5a5a5a;white-space:pre;">Off</div>
<svg style="position:absolute;left:0;top:0;overflow:visible" width="1" height="1"><path d="M218.8 24.8 h20.6 v20.2 h-17.4 l-3.2 -3.2 z" fill="#d99de2" stroke="#9b2fa9" stroke-width="1.5"/><rect x="223.8" y="25.6" width="10.8" height="6.2" fill="#fafafa" stroke="#9b2fa9" stroke-width="1.3"/><rect x="225" y="38.6" width="10" height="6" fill="#fafafa" stroke="#9b2fa9" stroke-width="1.3"/></svg>
<svg style="position:absolute;left:0;top:0;overflow:visible" width="1" height="1"><path d="M260 24 v9.4 h9" fill="none" stroke="#424242" stroke-width="1.5"/><path d="M260.5 32.8 L266.5 26.8 A7.6 7.6 0 0 1 277.2 37.6 L266.6 45.3" fill="none" stroke="#424242" stroke-width="1.5"/></svg>
<svg style="position:absolute;left:0;top:0;overflow:visible" width="1" height="1"><path d="M290.0 32.8 L293.5 36.2 L297.0 32.8" fill="none" stroke="#424242" stroke-width="1.3"/></svg>
<svg style="position:absolute;left:0;top:0;overflow:visible" width="1" height="1"><path d="M327.5 25.5 A10.4 10.4 0 1 1 319.5 24.8" fill="none" stroke="#9a9a9a" stroke-width="1.5"/><path d="M312 24.9 h8.4 v7.8" fill="none" stroke="#9a9a9a" stroke-width="1.5"/></svg>
<svg style="position:absolute;left:0;top:0;overflow:visible" width="1" height="1"><path d="M357 30.5 h10" stroke="#424242" stroke-width="1.3"/></svg>
<svg style="position:absolute;left:0;top:0;overflow:visible" width="1" height="1"><path d="M358.0 33.5 L362.0 37.5 L366.0 33.5" fill="none" stroke="#424242" stroke-width="1.3"/></svg>
<div style="position:absolute;left:402.5px;top:28.15px;font-family:'Liberation Sans', sans-serif;font-size:15.65px;line-height:15.65px;font-weight:400;font-style:normal;color:#242424;white-space:pre;">QT.VTT.CNTT.01_BM.07_TLNV_Xây_dựng_hệ_thống_IR_CALLTYPE_MAPPING_210...</div>
<svg style="position:absolute;left:0;top:0;overflow:visible" width="1" height="1"><circle cx="1131.5" cy="30.5" r="6.5" fill="none" stroke="#424242" stroke-width="1.5"/><path d="M1126.8 35.2 L1118.5 43.5" stroke="#424242" stroke-width="1.6"/></svg>
<svg style="position:absolute;left:0;top:0;overflow:visible" width="1" height="1"><defs><clipPath id="avc1"><circle cx="1206" cy="33.8" r="17"/></clipPath></defs><g clip-path="url(#avc1)"><rect x="1188.0" y="15.799999999999997" width="36.0" height="36.0" fill="#6eaae2"/><path d="M1188.0 40.8 L1201.0 35.8 L1206.5 42.8 L1212.0 35.8 L1224.0 40.8 L1224.0 51.8 L1188.0 51.8 Z" fill="#f2f2f6"/><path d="M1200.8 30.799999999999997 L1211.8 30.799999999999997 L1212.0 36.3 L1206.5 42.8 L1201.0 36.3 Z" fill="#e9b8a0"/><ellipse cx="1206.5" cy="25.799999999999997" rx="8.4" ry="9.8" fill="#ecc0a9"/><path d="M1197.4 22.799999999999997 C1197.4 14.799999999999997, 1215.6 14.799999999999997, 1215.6 22.799999999999997 C1212.0 20.599999999999998, 1201.0 20.599999999999998, 1197.4 22.799999999999997 Z" fill="#6b554a"/><ellipse cx="1203.0" cy="23.799999999999997" rx="1.5" ry="0.9" fill="#7d5a4e"/><ellipse cx="1210.0" cy="23.799999999999997" rx="1.5" ry="0.9" fill="#7d5a4e"/><ellipse cx="1206.5" cy="29.599999999999998" rx="2.2" ry="0.9" fill="#d98b86"/></g></svg>
<svg style="position:absolute;left:0;top:0;overflow:visible" width="1" height="1"><path d="M1264.5 33.5 h13" stroke="#333" stroke-width="1.2"/><rect x="1331" y="27.8" width="13.5" height="13.5" rx="1.5" fill="none" stroke="#333" stroke-width="1.2"/><path d="M1398.5 27.8 L1412 41.3 M1412 27.8 L1398.5 41.3" stroke="#333" stroke-width="1.2"/></svg>
<div style="position:absolute;left:30.0px;top:82.72px;font-family:'Liberation Sans', sans-serif;font-size:17.81px;line-height:17.81px;font-weight:400;font-style:normal;color:#2a2a2a;white-space:pre;">File</div>
<div style="position:absolute;left:94.0px;top:82.08px;font-family:'Liberation Sans', sans-serif;font-size:18.57px;line-height:18.57px;font-weight:700;font-style:normal;color:#2a2a2a;white-space:pre;">Home</div>
<div style="position:absolute;left:174.0px;top:81.96px;font-family:'Liberation Sans', sans-serif;font-size:18.71px;line-height:18.71px;font-weight:400;font-style:normal;color:#2a2a2a;white-space:pre;">Insert</div>
<div style="position:absolute;left:249.6px;top:82.31px;font-family:'Liberation Sans', sans-serif;font-size:18.30px;line-height:18.30px;font-weight:400;font-style:normal;color:#2a2a2a;white-space:pre;">Draw</div>
<div style="position:absolute;left:320.6px;top:82.38px;font-family:'Liberation Sans', sans-serif;font-size:18.22px;line-height:18.22px;font-weight:400;font-style:normal;color:#2a2a2a;white-space:pre;">Design</div>
<div style="position:absolute;left:405.0px;top:82.01px;font-family:'Liberation Sans', sans-serif;font-size:18.65px;line-height:18.65px;font-weight:400;font-style:normal;color:#2a2a2a;white-space:pre;">Layout</div>
<div style="position:absolute;left:489.0px;top:82.83px;font-family:'Liberation Sans', sans-serif;font-size:17.68px;line-height:17.68px;font-weight:400;font-style:normal;color:#2a2a2a;white-space:pre;">References</div>
<div style="position:absolute;left:608.4px;top:81.34px;font-family:'Liberation Sans', sans-serif;font-size:19.44px;line-height:19.44px;font-weight:400;font-style:normal;color:#2a2a2a;white-space:pre;">Mailings</div>
<div style="position:absolute;left:707.0px;top:82.93px;font-family:'Liberation Sans', sans-serif;font-size:17.57px;line-height:17.57px;font-weight:400;font-style:normal;color:#2a2a2a;white-space:pre;">Review</div>
<div style="position:absolute;left:792.0px;top:81.77px;font-family:'Liberation Sans', sans-serif;font-size:18.93px;line-height:18.93px;font-weight:400;font-style:normal;color:#2a2a2a;white-space:pre;">View</div>
<div style="position:absolute;left:860.0px;top:81.83px;font-family:'Liberation Sans', sans-serif;font-size:18.87px;line-height:18.87px;font-weight:400;font-style:normal;color:#2a2a2a;white-space:pre;">Help</div>
<div style="position:absolute;left:926.0px;top:82.22px;font-family:'Liberation Sans', sans-serif;font-size:18.40px;line-height:18.40px;font-weight:400;font-style:normal;color:#1f5fbf;white-space:pre;">Table Design</div>
<div style="position:absolute;left:1060.0px;top:82.06px;font-family:'Liberation Sans', sans-serif;font-size:18.59px;line-height:18.59px;font-weight:400;font-style:normal;color:#1f5fbf;white-space:pre;">Table Layout</div>
<div style="position:absolute;left:94.0px;top:103.0px;width:53.6px;height:2.8px;background:#0f54c4;border-radius:1.5px;"></div>
<svg style="position:absolute;left:0;top:0;overflow:visible" width="1" height="1"><rect x="1272.2" y="72.9" width="32" height="32.3" rx="4" fill="#fff" stroke="#8f8f8f" stroke-width="1"/><path d="M1281 81.5 h14.5 v10.5 h-9 l-4 3.5 v-3.5 h-1.5 z" fill="none" stroke="#424242" stroke-width="1.3"/></svg>
<svg style="position:absolute;left:0;top:0;overflow:visible" width="1" height="1"><rect x="1316.5" y="72.9" width="48.8" height="32.3" rx="4" fill="#fff" stroke="#8f8f8f" stroke-width="1"/><path d="M1326 97.5 l1.2 -5 l10.5 -10.5 a2.3 2.3 0 0 1 3.5 3.5 l-10.5 10.5 z" fill="none" stroke="#424242" stroke-width="1.3"/></svg>
<svg style="position:absolute;left:0;top:0;overflow:visible" width="1" height="1"><path d="M1352.0 87.2 L1355.5 90.8 L1359.0 87.2" fill="none" stroke="#424242" stroke-width="1.3"/></svg>
<svg style="position:absolute;left:0;top:0;overflow:visible" width="1" height="1"><rect x="1377" y="72.5" width="44.8" height="33" rx="4" fill="#185abd"/><path d="M1384 84 v10 h13 v-4" fill="none" stroke="#fff" stroke-width="1.3"/><path d="M1387 90 c1 -5 5 -7 10 -7 v-3.5 l5 5 l-5 5 v-3.5 c-4 0 -7 1.5 -10 4" fill="none" stroke="#fff" stroke-width="1.2"/></svg>
<svg style="position:absolute;left:0;top:0;overflow:visible" width="1" height="1"><path d="M1408.0 87.2 L1411.5 90.8 L1415.0 87.2" fill="none" stroke="#fff" stroke-width="1.3"/></svg>
<div style="position:absolute;left:11.5px;top:109.8px;width:1416.7px;height:142.2px;background:#ffffff;border-radius:10px;box-shadow:0 1px 2px rgba(0,0,0,0.16);"></div>
<div style="position:absolute;left:136.6px;top:117.4px;width:1.0px;height:125.2px;background:#d6d6d6;"></div>
<div style="position:absolute;left:473.5px;top:117.4px;width:1.0px;height:125.2px;background:#d6d6d6;"></div>
<div style="position:absolute;left:750.6px;top:117.4px;width:1.0px;height:125.2px;background:#d6d6d6;"></div>
<div style="position:absolute;left:831.3px;top:117.4px;width:1.0px;height:125.2px;background:#d6d6d6;"></div>
<div style="position:absolute;left:911.0px;top:117.4px;width:1.0px;height:125.2px;background:#d6d6d6;"></div>
<div style="position:absolute;left:997.3px;top:117.4px;width:1.0px;height:125.2px;background:#d6d6d6;"></div>
<div style="position:absolute;left:1088.4px;top:117.4px;width:1.0px;height:125.2px;background:#d6d6d6;"></div>
<div style="position:absolute;left:1237.2px;top:117.4px;width:1.0px;height:125.2px;background:#d6d6d6;"></div>
<div style="position:absolute;left:32.2px;top:230.34px;font-family:'Liberation Sans', sans-serif;font-size:15.19px;line-height:15.19px;font-weight:400;font-style:normal;color:#242424;white-space:pre;">Clipboard</div>
<div style="position:absolute;left:280.0px;top:231.48px;font-family:'Liberation Sans', sans-serif;font-size:13.84px;line-height:13.84px;font-weight:400;font-style:normal;color:#242424;white-space:pre;">Font</div>
<div style="position:absolute;left:567.5px;top:231.27px;font-family:'Liberation Sans', sans-serif;font-size:14.09px;line-height:14.09px;font-weight:400;font-style:normal;color:#242424;white-space:pre;">Paragraph</div>
<div style="position:absolute;left:760.0px;top:231.48px;font-family:'Liberation Sans', sans-serif;font-size:13.84px;line-height:13.84px;font-weight:400;font-style:normal;color:#242424;white-space:pre;">Styles</div>
<div style="position:absolute;left:936.0px;top:231.31px;font-family:'Liberation Sans', sans-serif;font-size:14.51px;line-height:14.51px;font-weight:400;font-style:normal;color:#242424;white-space:pre;">Voice</div>
<div style="position:absolute;left:1016.0px;top:230.69px;font-family:'Liberation Sans', sans-serif;font-size:15.25px;line-height:15.25px;font-weight:400;font-style:normal;color:#242424;white-space:pre;">Add-ins</div>
<svg style="position:absolute;left:0;top:0;overflow:visible" width="1" height="1"><path d="M120.3 240.6 v-8 h8" fill="none" stroke="#616161" stroke-width="1"/><path d="M122.8 235.1 L129.8 242.1 M124.3 242.1 h5.5 v-5.5" fill="none" stroke="#424242" stroke-width="1.2"/></svg>
<svg style="position:absolute;left:0;top:0;overflow:visible" width="1" height="1"><path d="M457.2 240.6 v-8 h8" fill="none" stroke="#616161" stroke-width="1"/><path d="M459.7 235.1 L466.7 242.1 M461.2 242.1 h5.5 v-5.5" fill="none" stroke="#424242" stroke-width="1.2"/></svg>
<svg style="position:absolute;left:0;top:0;overflow:visible" width="1" height="1"><path d="M733.8 240.2 v-8 h8" fill="none" stroke="#616161" stroke-width="1"/><path d="M736.3 234.7 L743.3 241.7 M737.8 241.7 h5.5 v-5.5" fill="none" stroke="#424242" stroke-width="1.2"/></svg>
<svg style="position:absolute;left:0;top:0;overflow:visible" width="1" height="1"><path d="M815 240.6 v-8 h8" fill="none" stroke="#616161" stroke-width="1"/><path d="M817.5 235.1 L824.5 242.1 M819 242.1 h5.5 v-5.5" fill="none" stroke="#424242" stroke-width="1.2"/></svg>
<svg style="position:absolute;left:0;top:0;overflow:visible" width="1" height="1"><path d="M1398.5 227.5 L1406.8 235.8 L1415 227.5" fill="none" stroke="#424242" stroke-width="1.5"/></svg>
<svg style="position:absolute;left:0;top:0;overflow:visible" width="1" height="1"><rect x="44" y="129.2" width="27.4" height="31.5" fill="#fde9a6" stroke="#e8730e" stroke-width="2"/><rect x="48" y="133" width="19" height="24" fill="#fafafa"/><path d="M50 133.2 v-4 h4 a3.5 3.5 0 0 1 7 0 h4.5 v4 z" fill="#f2f2f2" stroke="#616161" stroke-width="1.3"/><rect x="61.5" y="140" width="18.5" height="24" fill="#fafafa" stroke="#424242" stroke-width="1.5"/></svg>
<div style="position:absolute;left:38.9px;top:175.42px;font-family:'Liberation Sans', sans-serif;font-size:15.09px;line-height:15.09px;font-weight:400;font-style:normal;color:#242424;white-space:pre;">Paste</div>
<svg style="position:absolute;left:0;top:0;overflow:visible" width="1" height="1"><path d="M54.0 202.1 L57.7 205.9 L61.5 202.1" fill="none" stroke="#424242" stroke-width="1.3"/></svg>
<svg style="position:absolute;left:0;top:0;overflow:visible" width="1" height="1"><path d="M101.5 122 L111 140 M114 122 L104.5 140" stroke="#424242" stroke-width="1.1"/><circle cx="103.4" cy="141.3" r="2.5" fill="#fff" stroke="#1f8ad2" stroke-width="1.4"/><circle cx="112" cy="141.3" r="2.5" fill="#fff" stroke="#1f8ad2" stroke-width="1.4"/></svg>
<svg style="position:absolute;left:0;top:0;overflow:visible" width="1" height="1"><path d="M104 176 h-6.5 v-17.5 h9 l2.5 2.5" fill="none" stroke="#424242" stroke-width="1.3"/><path d="M105 161.5 h8 l5 5 v12.5 h-13 z" fill="#fafafa" stroke="#424242" stroke-width="1.3"/><path d="M108 172 h7 M108 174.5 h7" stroke="#616161" stroke-width="1"/></svg>
<svg style="position:absolute;left:0;top:0;overflow:visible" width="1" height="1"><path d="M98 205 L106 200.5 L112 207 L107 214 Z" fill="#fde9a6" stroke="#e8730e" stroke-width="1.4"/><path d="M106 200.5 l3 -3 l5 5 l-3 3 z M110 197.5 l6 -5 a1.2 1.2 0 0 1 2 2 l-5 6" fill="#fff" stroke="#424242" stroke-width="1.2"/></svg>
<svg style="position:absolute;left:0;top:0;overflow:visible" width="1" height="1"><rect x="148.5" y="116.5" width="250.8" height="33" rx="5" fill="#fff" stroke="#8c8c8c" stroke-width="1"/><rect x="403.8" y="116.5" width="58.6" height="33" rx="5" fill="#fff" stroke="#8c8c8c" stroke-width="1"/></svg>
<div style="position:absolute;left:151.0px;top:125.60px;font-family:'Liberation Sans', sans-serif;font-size:15.36px;line-height:15.36px;font-weight:400;font-style:normal;color:#242424;white-space:pre;">Times New Roman</div>
<svg style="position:absolute;left:0;top:0;overflow:visible" width="1" height="1"><path d="M387.8 132.1 L391.5 135.9 L395.2 132.1" fill="none" stroke="#242424" stroke-width="1.3"/></svg>
<div style="position:absolute;left:407.7px;top:126.42px;font-family:'Liberation Sans', sans-serif;font-size:14.38px;line-height:14.38px;font-weight:400;font-style:normal;color:#242424;white-space:pre;">14</div>
<svg style="position:absolute;left:0;top:0;overflow:visible" width="1" height="1"><path d="M450.8 132.1 L454.5 135.9 L458.2 132.1" fill="none" stroke="#242424" stroke-width="1.3"/></svg>
<div style="position:absolute;left:159.6px;top:159.10px;font-family:'Liberation Sans', sans-serif;font-size:17.60px;line-height:17.60px;font-weight:700;font-style:normal;color:#424242;white-space:pre;transform:scaleX(0.86);transform-origin:0 0;">B</div>
<div style="position:absolute;left:197.5px;top:159.45px;font-family:'Liberation Serif', serif;font-size:20.00px;line-height:20.00px;font-weight:400;font-style:italic;color:#424242;white-space:pre;">I</div>
<svg style="position:absolute;left:0;top:0;overflow:visible" width="1" height="1"><path d="M235.5 161.5 v7 a5 5 0 0 0 10 0 v-7" fill="none" stroke="#424242" stroke-width="1.5"/><path d="M234.2 176.8 h12.4" stroke="#424242" stroke-width="1.3"/></svg>
<svg style="position:absolute;left:0;top:0;overflow:visible" width="1" height="1"><path d="M266.1 167.1 L269.8 170.9 L273.6 167.1" fill="none" stroke="#424242" stroke-width="1.3"/></svg>
<div style="position:absolute;left:290.5px;top:161.80px;font-family:'Liberation Sans', sans-serif;font-size:16.18px;line-height:16.18px;font-weight:400;font-style:normal;color:#424242;white-space:pre;">ab</div>
<div style="position:absolute;left:289.0px;top:170.5px;width:21.8px;height:1.2px;background:#424242;"></div>
<div style="position:absolute;left:333.5px;top:160.26px;font-family:'Liberation Sans', sans-serif;font-size:18.00px;line-height:18.00px;font-weight:400;font-style:normal;color:#424242;white-space:pre;">x</div>
<div style="position:absolute;left:342.5px;top:171.33px;font-family:'Liberation Sans', sans-serif;font-size:9.89px;line-height:9.89px;font-weight:700;font-style:normal;color:#1f8ad2;white-space:pre;">2</div>
<div style="position:absolute;left:371.0px;top:160.26px;font-family:'Liberation Sans', sans-serif;font-size:18.00px;line-height:18.00px;font-weight:400;font-style:normal;color:#424242;white-space:pre;">x</div>
<div style="position:absolute;left:380.5px;top:155.63px;font-family:'Liberation Sans', sans-serif;font-size:9.89px;line-height:9.89px;font-weight:700;font-style:normal;color:#1f8ad2;white-space:pre;">2</div>
<div style="position:absolute;left:397.4px;top:152.4px;width:1.0px;height:33.0px;background:#d6d6d6;"></div>
<svg style="position:absolute;left:0;top:0;overflow:visible" width="1" height="1"><path d="M407.5 175 L414 158.5 L420.5 175 M410 169 h8" fill="none" stroke="#424242" stroke-width="1.2"/><path d="M416.5 174 L423 167.5 L429 173.5 L422.5 180 Z" fill="#fff" stroke="#a23bbd" stroke-width="1.6"/></svg>
<div style="position:absolute;left:165.2px;top:191.59px;font-family:'Liberation Sans', sans-serif;font-size:26.00px;line-height:26.00px;font-weight:700;font-style:normal;color:#e6f1fc;white-space:pre;transform:translateX(-50%);-webkit-text-stroke:3.4px #1f6cc6;paint-order:stroke fill;">A</div>
<svg style="position:absolute;left:0;top:0;overflow:visible" width="1" height="1"><path d="M186.2 203.1 L190.0 206.9 L193.8 203.1" fill="none" stroke="#424242" stroke-width="1.3"/></svg>
<svg style="position:absolute;left:0;top:0;overflow:visible" width="1" height="1"><rect x="214" y="210.2" width="21.8" height="5.6" fill="#00ff00"/><path d="M218 208 l2 -5 l10 -10 a1.8 1.8 0 0 1 3 3 l-10 10 z" fill="#fff" stroke="#424242" stroke-width="1.2"/><path d="M216.5 209 l3.5 -5 l3 3 z" fill="#8a8a8a"/></svg>
<svg style="position:absolute;left:0;top:0;overflow:visible" width="1" height="1"><path d="M250.1 203.1 L253.8 206.9 L257.6 203.1" fill="none" stroke="#424242" stroke-width="1.3"/></svg>
<div style="position:absolute;left:272.9px;top:210.2px;width:22.1px;height:5.6px;background:#e60000;"></div>
<svg style="position:absolute;left:0;top:0;overflow:visible" width="1" height="1"><path d="M278 208.5 L284.2 194.5 L290.5 208.5 M280.5 203 h7.5" fill="none" stroke="#424242" stroke-width="1.3"/></svg>
<svg style="position:absolute;left:0;top:0;overflow:visible" width="1" height="1"><path d="M308.9 203.1 L312.6 206.9 L316.4 203.1" fill="none" stroke="#424242" stroke-width="1.3"/></svg>
<div style="position:absolute;left:332.5px;top:196.82px;font-family:'Liberation Sans', sans-serif;font-size:17.58px;line-height:17.58px;font-weight:400;font-style:normal;color:#424242;white-space:pre;">Aa</div>
<svg style="position:absolute;left:0;top:0;overflow:visible" width="1" height="1"><path d="M364.1 203.1 L367.8 206.9 L371.6 203.1" fill="none" stroke="#424242" stroke-width="1.3"/></svg>
<div style="position:absolute;left:386.6px;top:188.5px;width:1.0px;height:33.0px;background:#d6d6d6;"></div>
<svg style="position:absolute;left:0;top:0;overflow:visible" width="1" height="1"><path d="M397.5 211.5 L405 194.5 L412.5 211.5 M400.3 205 h9.5" fill="none" stroke="#424242" stroke-width="1.3"/><path d="M411 198 l2.7 -2.7 l2.7 2.7" fill="none" stroke="#1f8ad2" stroke-width="1.3"/></svg>
<svg style="position:absolute;left:0;top:0;overflow:visible" width="1" height="1"><path d="M437.5 211.5 L444 197 L450.5 211.5 M440 206 h8" fill="none" stroke="#424242" stroke-width="1.3"/><path d="M450.5 195.5 l2.5 2.5 l2.5 -2.5" fill="none" stroke="#1f8ad2" stroke-width="1.3"/></svg>
<svg style="position:absolute;left:0;top:0;overflow:visible" width="1" height="1"><rect x="485.7" y="116.4" width="54.6" height="33" rx="6" fill="#ebebeb" stroke="#8a8a8a" stroke-width="1"/><rect x="485.7" y="152.5" width="34" height="33" rx="6" fill="#ebebeb" stroke="#8a8a8a" stroke-width="1"/></svg>
<svg style="position:absolute;left:0;top:0;overflow:visible" width="1" height="1"><rect x="491" y="121.6" width="4.8" height="4.8" fill="#1f8ad2"/><path d="M498 124 h13.7" stroke="#424242" stroke-width="1.3"/></svg>
<svg style="position:absolute;left:0;top:0;overflow:visible" width="1" height="1"><rect x="491" y="129.79999999999998" width="4.8" height="4.8" fill="#1f8ad2"/><path d="M498 132.2 h13.7" stroke="#424242" stroke-width="1.3"/></svg>
<svg style="position:absolute;left:0;top:0;overflow:visible" width="1" height="1"><rect x="491" y="137.9" width="4.8" height="4.8" fill="#1f8ad2"/><path d="M498 140.3 h13.7" stroke="#424242" stroke-width="1.3"/></svg>
<svg style="position:absolute;left:0;top:0;overflow:visible" width="1" height="1"><path d="M526.8 130.7 L530.8 134.7 L534.8 130.7" fill="none" stroke="#424242" stroke-width="1.3"/></svg>
<div style="position:absolute;left:549.8px;top:120.95px;font-family:'Liberation Sans', sans-serif;font-size:8.09px;line-height:8.09px;font-weight:700;font-style:normal;color:#1f8ad2;white-space:pre;">1</div>
<svg style="position:absolute;left:0;top:0;overflow:visible" width="1" height="1"><path d="M557 124 h13.8" stroke="#424242" stroke-width="1.3"/></svg>
<div style="position:absolute;left:549.8px;top:129.15px;font-family:'Liberation Sans', sans-serif;font-size:8.09px;line-height:8.09px;font-weight:700;font-style:normal;color:#1f8ad2;white-space:pre;">2</div>
<svg style="position:absolute;left:0;top:0;overflow:visible" width="1" height="1"><path d="M557 132.2 h13.8" stroke="#424242" stroke-width="1.3"/></svg>
<div style="position:absolute;left:549.8px;top:137.25px;font-family:'Liberation Sans', sans-serif;font-size:8.09px;line-height:8.09px;font-weight:700;font-style:normal;color:#1f8ad2;white-space:pre;">3</div>
<svg style="position:absolute;left:0;top:0;overflow:visible" width="1" height="1"><path d="M557 140.3 h13.8" stroke="#424242" stroke-width="1.3"/></svg>
<svg style="position:absolute;left:0;top:0;overflow:visible" width="1" height="1"><path d="M585.8 130.7 L589.8 134.7 L593.8 130.7" fill="none" stroke="#424242" stroke-width="1.3"/></svg>
<div style="position:absolute;left:609.0px;top:122.47px;font-family:'Liberation Sans', sans-serif;font-size:6.29px;line-height:6.29px;font-weight:700;font-style:normal;color:#1f8ad2;white-space:pre;">1</div>
<svg style="position:absolute;left:0;top:0;overflow:visible" width="1" height="1"><path d="M616 124 h14" stroke="#424242" stroke-width="1.3"/></svg>
<div style="position:absolute;left:612.0px;top:128.39px;font-family:'Liberation Sans', sans-serif;font-size:8.99px;line-height:8.99px;font-weight:700;font-style:normal;color:#1f8ad2;white-space:pre;">a</div>
<svg style="position:absolute;left:0;top:0;overflow:visible" width="1" height="1"><path d="M620 132.2 h10" stroke="#424242" stroke-width="1.3"/></svg>
<div style="position:absolute;left:618.5px;top:137.50px;font-family:'Liberation Sans', sans-serif;font-size:7.91px;line-height:7.91px;font-weight:700;font-style:normal;color:#1f8ad2;white-space:pre;">i</div>
<svg style="position:absolute;left:0;top:0;overflow:visible" width="1" height="1"><path d="M624 140.3 h6" stroke="#424242" stroke-width="1.3"/></svg>
<svg style="position:absolute;left:0;top:0;overflow:visible" width="1" height="1"><path d="M641.0 130.7 L645.0 134.7 L649.0 130.7" fill="none" stroke="#424242" stroke-width="1.3"/></svg>
<div style="position:absolute;left:663.5px;top:116.0px;width:1.0px;height:33.6px;background:#d6d6d6;"></div>
<svg style="position:absolute;left:0;top:0;overflow:visible" width="1" height="1"><path d="M674 124 h19.6 M684 129.5 h9.6 M684 135 h9.6 M674 140.3 h19.6" stroke="#424242" stroke-width="1.3"/><path d="M682 132.2 h-7.5 M677.5 129 l-3 3.2 l3 3.2" fill="none" stroke="#1f8ad2" stroke-width="1.4"/></svg>
<svg style="position:absolute;left:0;top:0;overflow:visible" width="1" height="1"><path d="M712 124 h19.6 M722 129.5 h9.6 M722 135 h9.6 M712 140.3 h19.6" stroke="#424242" stroke-width="1.3"/><path d="M712 132.2 h7.5 M716.5 129 l3 3.2 l-3 3.2" fill="none" stroke="#1f8ad2" stroke-width="1.4"/></svg>
<svg style="position:absolute;left:0;top:0;overflow:visible" width="1" height="1"><path d="M492 160 h19.7 M492 165.4 h13.5 M492 170.8 h19.7 M492 176.4 h13.5" stroke="#424242" stroke-width="1.3"/></svg>
<svg style="position:absolute;left:0;top:0;overflow:visible" width="1" height="1"><path d="M530 160 h19.7 M533 165.4 h13.5 M530 170.8 h19.7 M533 176.4 h13.5" stroke="#424242" stroke-width="1.3"/></svg>
<svg style="position:absolute;left:0;top:0;overflow:visible" width="1" height="1"><path d="M568 160 h19.7 M574 165.4 h13.5 M568 170.8 h19.7 M574 176.4 h13.5" stroke="#424242" stroke-width="1.3"/></svg>
<svg style="position:absolute;left:0;top:0;overflow:visible" width="1" height="1"><path d="M606 160 h19.7 M606 165.4 h19.7 M606 170.8 h19.7 M606 176.4 h19.7" stroke="#424242" stroke-width="1.3"/></svg>
<div style="position:absolute;left:637.4px;top:152.3px;width:1.0px;height:33.4px;background:#d6d6d6;"></div>
<svg style="position:absolute;left:0;top:0;overflow:visible" width="1" height="1"><path d="M656.5 160 h12.5 M656.5 165.4 h12.5 M656.5 170.8 h12.5 M656.5 176.4 h12.5" stroke="#424242" stroke-width="1.3"/><path d="M650.3 159 v18 M647.3 162 l3 -3 l3 3 M647.3 174 l3 3 l3 -3" fill="none" stroke="#1f8ad2" stroke-width="1.4"/></svg>
<svg style="position:absolute;left:0;top:0;overflow:visible" width="1" height="1"><path d="M678.8 167.0 L682.8 171.0 L686.8 167.0" fill="none" stroke="#424242" stroke-width="1.3"/></svg>
<svg style="position:absolute;left:0;top:0;overflow:visible" width="1" height="1"><path d="M495 204 l8 -8 l6 6 l-8 8 z" fill="none" stroke="#424242" stroke-width="1.3"/><path d="M503 196 v-2 a1.5 1.5 0 0 1 3 0 v5" fill="none" stroke="#424242" stroke-width="1.2"/><path d="M508 198 c3 0 3.5 3 3.5 6" fill="none" stroke="#1565c0" stroke-width="1.6"/><rect x="491.5" y="210.5" width="21.5" height="5" fill="#fff" stroke="#8a8a8a" stroke-width="1"/></svg>
<svg style="position:absolute;left:0;top:0;overflow:visible" width="1" height="1"><path d="M526.8 202.8 L530.8 206.8 L534.8 202.8" fill="none" stroke="#424242" stroke-width="1.3"/></svg>
<svg style="position:absolute;left:0;top:0;overflow:visible" width="1" height="1"><rect x="550.5" y="194.5" width="19.5" height="19" fill="none" stroke="#424242" stroke-width="1" stroke-dasharray="1.5 1.5"/><path d="M560.2 194.5 v19 M550.5 204 h19.5" stroke="#424242" stroke-width="1" stroke-dasharray="1.5 1.5"/><path d="M550 214 h20.5" stroke="#424242" stroke-width="1.6"/></svg>
<svg style="position:absolute;left:0;top:0;overflow:visible" width="1" height="1"><path d="M585.8 203.0 L589.8 207.0 L593.8 203.0" fill="none" stroke="#424242" stroke-width="1.3"/></svg>
<div style="position:absolute;left:603.4px;top:188.0px;width:1.0px;height:33.8px;background:#d6d6d6;"></div>
<div style="position:absolute;left:613.0px;top:193.05px;font-family:'Liberation Sans', sans-serif;font-size:12.46px;line-height:12.46px;font-weight:700;font-style:normal;color:#1f8ad2;white-space:pre;">A</div>
<div style="position:absolute;left:613.5px;top:203.72px;font-family:'Liberation Sans', sans-serif;font-size:13.91px;line-height:13.91px;font-weight:400;font-style:normal;color:#424242;white-space:pre;">Z</div>
<svg style="position:absolute;left:0;top:0;overflow:visible" width="1" height="1"><path d="M629.5 194.5 v21 M625 211 l4.5 4.5 l4.5 -4.5" fill="none" stroke="#424242" stroke-width="1.3"/></svg>
<div style="position:absolute;left:645.4px;top:188.0px;width:1.0px;height:33.8px;background:#d6d6d6;"></div>
<div style="position:absolute;left:658.8px;top:191.89px;font-family:'Liberation Sans', sans-serif;font-size:25.17px;line-height:25.17px;font-weight:700;font-style:normal;color:#424242;white-space:pre;">¶</div>
<svg style="position:absolute;left:0;top:0;overflow:visible" width="1" height="1"><path d="M773 159.5 L783.8 126 L795.6 160 M778 147.4 h17" fill="none" stroke="#424242" stroke-width="2.3"/><path d="M797 156 L812.6 139" stroke="#424242" stroke-width="4.6" stroke-linecap="round"/><path d="M797 156 L812.6 139" stroke="#fafafa" stroke-width="2" stroke-linecap="round"/><path d="M782.5 161 c3 0.5 8 1 12 -2 c3 -2.5 3.5 -5.5 1.5 -7 c-2 -1.5 -5 -0.8 -7 1.6 c-2 2.4 -3 5.8 -6.5 7.4 z" fill="#7cb7ec" stroke="#1f6cc6" stroke-width="1.2"/></svg>
<div style="position:absolute;left:770.0px;top:173.34px;font-family:'Liberation Sans', sans-serif;font-size:15.42px;line-height:15.42px;font-weight:400;font-style:normal;color:#242424;white-space:pre;">Styles</div>
<svg style="position:absolute;left:0;top:0;overflow:visible" width="1" height="1"><path d="M787.2 200.1 L791.0 203.9 L794.8 200.1" fill="none" stroke="#424242" stroke-width="1.3"/></svg>
<svg style="position:absolute;left:0;top:0;overflow:visible" width="1" height="1"><circle cx="876.2" cy="134.3" r="14.3" fill="#fafafa" stroke="#424242" stroke-width="1.6"/><path d="M866 144.6 L850.5 160.5" stroke="#424242" stroke-width="1.6"/></svg>
<div style="position:absolute;left:845.0px;top:168.93px;font-family:'Liberation Sans', sans-serif;font-size:17.20px;line-height:17.20px;font-weight:400;font-style:normal;color:#242424;white-space:pre;">Editing</div>
<svg style="position:absolute;left:0;top:0;overflow:visible" width="1" height="1"><path d="M867.2 197.6 L871.0 201.4 L874.8 197.6" fill="none" stroke="#424242" stroke-width="1.3"/></svg>
<svg style="position:absolute;left:0;top:0;overflow:visible" width="1" height="1"><rect x="946.8" y="122" width="15.2" height="29.6" rx="7.6" fill="#80b9ee" stroke="#0f6cbd" stroke-width="1.9"/><path d="M941.6 143 a12.8 12.8 0 0 0 25.6 0 M954.4 155.8 v7.8" fill="none" stroke="#424242" stroke-width="1.5"/></svg>
<div style="position:absolute;left:928.4px;top:173.95px;font-family:'Liberation Sans', sans-serif;font-size:17.06px;line-height:17.06px;font-weight:400;font-style:normal;color:#242424;white-space:pre;">Dictate</div>
<svg style="position:absolute;left:0;top:0;overflow:visible" width="1" height="1"><path d="M950.2 202.1 L954.0 205.9 L957.8 202.1" fill="none" stroke="#424242" stroke-width="1.3"/></svg>
<svg style="position:absolute;left:0;top:0;overflow:visible" width="1" height="1"><rect x="1024" y="123.7" width="38.4" height="37.6" fill="none" stroke="#d83b01" stroke-width="2"/><rect x="1028.5" y="128" width="12.5" height="12.5" fill="none" stroke="#d83b01" stroke-width="1.5"/><rect x="1045.3" y="128" width="12.5" height="12.5" fill="none" stroke="#d83b01" stroke-width="1.5"/><rect x="1028.5" y="144.5" width="12.5" height="12.5" fill="none" stroke="#d83b01" stroke-width="1.5"/><rect x="1045.3" y="144.5" width="12.5" height="12.5" fill="none" stroke="#d83b01" stroke-width="1.5"/></svg>
<div style="position:absolute;left:1014.0px;top:171.67px;font-family:'Liberation Sans', sans-serif;font-size:17.40px;line-height:17.40px;font-weight:400;font-style:normal;color:#242424;white-space:pre;">Add-ins</div>
<svg style="position:absolute;left:0;top:0;overflow:visible" width="1" height="1"><path d="M1109 163 l3 -11 l18 -30 l6 3.5 l-18 30 z" fill="#fff" stroke="#1a5fc8" stroke-width="2.4" stroke-linejoin="round"/><path d="M1128 135 h19 a3 3 0 0 1 0 6 h-19 z M1124 145 h18 a3 3 0 0 1 0 6 h-18 z M1119 155 h13 a3 3 0 0 1 0 6 h-13 z" fill="#1a5fc8"/></svg>
<div style="position:absolute;left:1107.4px;top:171.94px;font-family:'Liberation Sans', sans-serif;font-size:17.07px;line-height:17.07px;font-weight:400;font-style:normal;color:#242424;white-space:pre;">Editor</div>
<svg style="position:absolute;left:0;top:0;overflow:visible" width="1" height="1"><defs><linearGradient id="cpa0" x1="0" y1="0" x2="0" y2="1"><stop offset="0" stop-color="#22b8f8"/><stop offset="0.35" stop-color="#1696d8"/><stop offset="0.65" stop-color="#5cb46a"/><stop offset="1" stop-color="#f2c60a"/></linearGradient><linearGradient id="cpb0" x1="0" y1="0" x2="0" y2="1"><stop offset="0" stop-color="#a650ec"/><stop offset="0.5" stop-color="#ee5a8c"/><stop offset="1" stop-color="#f99c55"/></linearGradient></defs><path d="M1197 123.4 c3.2 0 5.6 1 7 4.2 c1.1 2.6 1.6 5.3 3.8 6.6 h-9 z" fill="#1c4fd6"/><path d="M1194 150.4 h-11.8 c2 1 2.4 3.4 3.2 5.8 c1 3 2.6 4.6 5.6 4.6 z" fill="#f1552c"/><path d="M1182 123.4 h16 c1.6 0 2.3 1.2 1.9 2.7 l-7.8 21.6 c-0.7 1.9 -1.9 2.6 -3.6 2.6 h-11.5 c-2.4 0 -3.4 -1.7 -2.9 -3.9 l4.4 -18.2 c0.7 -3 1.8 -4.8 3.5 -4.8 z" fill="url(#cpa0)"/><path d="M1203.2 133.8 h9.8 c2.4 0 3.4 1.7 2.9 3.9 l-4.4 18.2 c-0.7 3 -1.8 4.8 -3.5 4.8 h-16 c-1.6 0 -2.3 -1.2 -1.9 -2.7 l7.8 -21.6 c0.7 -1.9 1.9 -2.6 3.6 -2.6 z" fill="url(#cpb0)"/></svg>
<div style="position:absolute;left:1166.8px;top:171.55px;font-family:'Liberation Sans', sans-serif;font-size:17.54px;line-height:17.54px;font-weight:400;font-style:normal;color:#242424;white-space:pre;">Copilot</div>
<svg style="position:absolute;left:0;top:0;overflow:visible" width="1" height="1"><path d="M1034 31.5 L1040.8 38.3 L1047.6 31.5" fill="none" stroke="#424242" stroke-width="1.5"/></svg>
<svg style="position:absolute;left:0;top:0;overflow:visible" width="1" height="1"><rect x="1465.5" y="23" width="18.5" height="22" rx="2.5" fill="#0b5bd3"/><rect x="1465.5" y="23" width="18.5" height="8" rx="2.5" fill="#38d3fb"/><rect x="1465.5" y="29" width="18.5" height="7" fill="#1591ea"/><rect x="1463" y="30" width="11.6" height="11.6" rx="2" fill="#0b2a9c"/><path d="M1464.8 32.6 L1466.6 39.2 L1468.8 34.4 L1471 39.2 L1472.8 32.6" fill="none" stroke="#fff" stroke-width="1.6"/></svg>
<div style="position:absolute;left:1508.5px;top:27.69px;font-family:'Liberation Sans', sans-serif;font-size:14.30px;line-height:14.30px;font-weight:400;font-style:normal;color:#b0b0b0;white-space:pre;">AutoSave</div>
<svg style="position:absolute;left:0;top:0;overflow:visible" width="1" height="1"><rect x="1581.5" y="20.5" width="58.5" height="27" rx="13.5" fill="#ffffff" stroke="#a6a6a6" stroke-width="1.3"/><circle cx="1594.5" cy="34" r="10" fill="#bdbdbd"/></svg>
<div style="position:absolute;left:1612.0px;top:26.08px;font-family:'Liberation Sans', sans-serif;font-size:15.96px;line-height:15.96px;font-weight:400;font-style:normal;color:#b0b0b0;white-space:pre;">Off</div>
<svg style="position:absolute;left:0;top:0;overflow:visible" width="1" height="1"><path d="M1658.8 24.8 h20.6 v20.2 h-17.4 l-3.2 -3.2 z" fill="none" stroke="#a6a6a6" stroke-width="1.5"/><rect x="1663.8" y="25.6" width="10.8" height="6.2" fill="none" stroke="#a6a6a6" stroke-width="1.3"/><rect x="1665" y="38.6" width="10" height="6" fill="none" stroke="#a6a6a6" stroke-width="1.3"/></svg>
<svg style="position:absolute;left:0;top:0;overflow:visible" width="1" height="1"><path d="M1700 24 v9.4 h9" fill="none" stroke="#b0b0b0" stroke-width="1.5"/><path d="M1700.5 32.8 L1706.5 26.8 A7.6 7.6 0 0 1 1717.2 37.6 L1706.6 45.3" fill="none" stroke="#b0b0b0" stroke-width="1.5"/></svg>
<svg style="position:absolute;left:0;top:0;overflow:visible" width="1" height="1"><path d="M1730.0 32.8 L1733.5 36.2 L1737.0 32.8" fill="none" stroke="#b0b0b0" stroke-width="1.3"/></svg>
<svg style="position:absolute;left:0;top:0;overflow:visible" width="1" height="1"><path d="M1767.5 25.5 A10.4 10.4 0 1 1 1759.5 24.8" fill="none" stroke="#9a9a9a" stroke-width="1.5"/><path d="M1752 24.9 h8.4 v7.8" fill="none" stroke="#9a9a9a" stroke-width="1.5"/></svg>
<svg style="position:absolute;left:0;top:0;overflow:visible" width="1" height="1"><path d="M1797 30.5 h10" stroke="#b0b0b0" stroke-width="1.3"/></svg>
<svg style="position:absolute;left:0;top:0;overflow:visible" width="1" height="1"><path d="M1798.0 33.5 L1802.0 37.5 L1806.0 33.5" fill="none" stroke="#b0b0b0" stroke-width="1.3"/></svg>
<div style="position:absolute;left:1842.5px;top:28.21px;font-family:'Liberation Sans', sans-serif;font-size:15.58px;line-height:15.58px;font-weight:400;font-style:normal;color:#ababab;white-space:pre;">QT.VTT.CNTT.01_BM.07_TLTKCTCALLTYPE_MAPPING_29102025.docx</div>
<div style="position:absolute;left:2365.0px;top:29.31px;font-family:'Liberation Sans', sans-serif;font-size:14.28px;line-height:14.28px;font-weight:400;font-style:normal;color:#ababab;white-space:pre;">•</div>
<div style="position:absolute;left:2377.5px;top:28.41px;font-family:'Liberation Sans', sans-serif;font-size:15.34px;line-height:15.34px;font-weight:400;font-style:normal;color:#ababab;white-space:pre;">Saved</div>
<svg style="position:absolute;left:0;top:0;overflow:visible" width="1" height="1"><circle cx="2571.5" cy="30.5" r="6.5" fill="none" stroke="#b0b0b0" stroke-width="1.5"/><path d="M2566.8 35.2 L2558.5 43.5" stroke="#b0b0b0" stroke-width="1.6"/></svg>
<svg style="position:absolute;left:0;top:0;overflow:visible" width="1" height="1"><defs><clipPath id="avc2"><circle cx="2646" cy="33.8" r="17"/></clipPath></defs><g clip-path="url(#avc2)"><rect x="2628.0" y="15.799999999999997" width="36.0" height="36.0" fill="#6eaae2"/><path d="M2628.0 40.8 L2641.0 35.8 L2646.5 42.8 L2652.0 35.8 L2664.0 40.8 L2664.0 51.8 L2628.0 51.8 Z" fill="#f2f2f6"/><path d="M2640.8 30.799999999999997 L2651.8 30.799999999999997 L2652.0 36.3 L2646.5 42.8 L2641.0 36.3 Z" fill="#e9b8a0"/><ellipse cx="2646.5" cy="25.799999999999997" rx="8.4" ry="9.8" fill="#ecc0a9"/><path d="M2637.4 22.799999999999997 C2637.4 14.799999999999997, 2655.6 14.799999999999997, 2655.6 22.799999999999997 C2652.0 20.599999999999998, 2641.0 20.599999999999998, 2637.4 22.799999999999997 Z" fill="#6b554a"/><ellipse cx="2643.0" cy="23.799999999999997" rx="1.5" ry="0.9" fill="#7d5a4e"/><ellipse cx="2650.0" cy="23.799999999999997" rx="1.5" ry="0.9" fill="#7d5a4e"/><ellipse cx="2646.5" cy="29.599999999999998" rx="2.2" ry="0.9" fill="#d98b86"/></g></svg>
<svg style="position:absolute;left:0;top:0;overflow:visible" width="1" height="1"><path d="M2704.5 33.5 h13" stroke="#aaa" stroke-width="1.2"/><rect x="2771" y="27.8" width="13.5" height="13.5" rx="1.5" fill="none" stroke="#aaa" stroke-width="1.2"/><path d="M2838.5 27.8 L2852 41.3 M2852 27.8 L2838.5 41.3" stroke="#aaa" stroke-width="1.2"/></svg>
<div style="position:absolute;left:1470.0px;top:82.72px;font-family:'Liberation Sans', sans-serif;font-size:17.81px;line-height:17.81px;font-weight:400;font-style:normal;color:#2a2a2a;white-space:pre;">File</div>
<div style="position:absolute;left:1534.0px;top:82.08px;font-family:'Liberation Sans', sans-serif;font-size:18.57px;line-height:18.57px;font-weight:700;font-style:normal;color:#2a2a2a;white-space:pre;">Home</div>
<div style="position:absolute;left:1614.0px;top:81.96px;font-family:'Liberation Sans', sans-serif;font-size:18.71px;line-height:18.71px;font-weight:400;font-style:normal;color:#2a2a2a;white-space:pre;">Insert</div>
<div style="position:absolute;left:1689.6px;top:82.31px;font-family:'Liberation Sans', sans-serif;font-size:18.30px;line-height:18.30px;font-weight:400;font-style:normal;color:#2a2a2a;white-space:pre;">Draw</div>
<div style="position:absolute;left:1760.6px;top:82.38px;font-family:'Liberation Sans', sans-serif;font-size:18.22px;line-height:18.22px;font-weight:400;font-style:normal;color:#2a2a2a;white-space:pre;">Design</div>
<div style="position:absolute;left:1845.0px;top:82.01px;font-family:'Liberation Sans', sans-serif;font-size:18.65px;line-height:18.65px;font-weight:400;font-style:normal;color:#2a2a2a;white-space:pre;">Layout</div>
<div style="position:absolute;left:1929.0px;top:82.83px;font-family:'Liberation Sans', sans-serif;font-size:17.68px;line-height:17.68px;font-weight:400;font-style:normal;color:#2a2a2a;white-space:pre;">References</div>
<div style="position:absolute;left:2048.4px;top:81.34px;font-family:'Liberation Sans', sans-serif;font-size:19.44px;line-height:19.44px;font-weight:400;font-style:normal;color:#2a2a2a;white-space:pre;">Mailings</div>
<div style="position:absolute;left:2147.0px;top:82.93px;font-family:'Liberation Sans', sans-serif;font-size:17.57px;line-height:17.57px;font-weight:400;font-style:normal;color:#2a2a2a;white-space:pre;">Review</div>
<div style="position:absolute;left:2232.0px;top:81.77px;font-family:'Liberation Sans', sans-serif;font-size:18.93px;line-height:18.93px;font-weight:400;font-style:normal;color:#2a2a2a;white-space:pre;">View</div>
<div style="position:absolute;left:2300.0px;top:81.83px;font-family:'Liberation Sans', sans-serif;font-size:18.87px;line-height:18.87px;font-weight:400;font-style:normal;color:#2a2a2a;white-space:pre;">Help</div>
<div style="position:absolute;left:2366.0px;top:82.22px;font-family:'Liberation Sans', sans-serif;font-size:18.40px;line-height:18.40px;font-weight:400;font-style:normal;color:#1f5fbf;white-space:pre;">Table Design</div>
<div style="position:absolute;left:2500.0px;top:82.06px;font-family:'Liberation Sans', sans-serif;font-size:18.59px;line-height:18.59px;font-weight:400;font-style:normal;color:#1f5fbf;white-space:pre;">Table Layout</div>
<div style="position:absolute;left:1534.0px;top:103.0px;width:53.6px;height:2.8px;background:#0f54c4;border-radius:1.5px;"></div>
<svg style="position:absolute;left:0;top:0;overflow:visible" width="1" height="1"><rect x="2712.2" y="72.9" width="32" height="32.3" rx="4" fill="#fff" stroke="#8f8f8f" stroke-width="1"/><path d="M2721 81.5 h14.5 v10.5 h-9 l-4 3.5 v-3.5 h-1.5 z" fill="none" stroke="#424242" stroke-width="1.3"/></svg>
<svg style="position:absolute;left:0;top:0;overflow:visible" width="1" height="1"><rect x="2756.5" y="72.5" width="49" height="33" rx="4" fill="#185abd"/><circle cx="2770.3" cy="87.6" r="4.6" fill="none" stroke="#fff" stroke-width="1.3"/><path d="M2763.4 99.8 a6.9 6.5 0 0 1 13.8 0" fill="none" stroke="#fff" stroke-width="1.3"/><path d="M2768.6 83.5 v-5 h16.2 v9.8 h-4.6 l-3.4 3.6 v-2.2" fill="none" stroke="#fff" stroke-width="1.3"/></svg>
<svg style="position:absolute;left:0;top:0;overflow:visible" width="1" height="1"><path d="M2792.0 87.2 L2795.5 90.8 L2799.0 87.2" fill="none" stroke="#fff" stroke-width="1.3"/></svg>
<svg style="position:absolute;left:0;top:0;overflow:visible" width="1" height="1"><rect x="2817" y="72.5" width="44.8" height="33" rx="4" fill="#185abd"/><path d="M2824 84 v10 h13 v-4" fill="none" stroke="#fff" stroke-width="1.3"/><path d="M2827 90 c1 -5 5 -7 10 -7 v-3.5 l5 5 l-5 5 v-3.5 c-4 0 -7 1.5 -10 4" fill="none" stroke="#fff" stroke-width="1.2"/></svg>
<svg style="position:absolute;left:0;top:0;overflow:visible" width="1" height="1"><path d="M2848.0 87.2 L2851.5 90.8 L2855.0 87.2" fill="none" stroke="#fff" stroke-width="1.3"/></svg>
<div style="position:absolute;left:1451.5px;top:109.8px;width:1416.7px;height:142.2px;background:#ffffff;border-radius:10px;box-shadow:0 1px 2px rgba(0,0,0,0.16);"></div>
<div style="position:absolute;left:1451.5px;top:109.8px;width:40.0px;height:142.2px;background:linear-gradient(90deg,rgba(0,0,0,0.05),rgba(0,0,0,0));border-radius:10px 0 0 10px;"></div>
<div style="position:absolute;left:1576.6px;top:117.4px;width:1.0px;height:125.2px;background:#d6d6d6;"></div>
<div style="position:absolute;left:1913.5px;top:117.4px;width:1.0px;height:125.2px;background:#d6d6d6;"></div>
<div style="position:absolute;left:2190.6px;top:117.4px;width:1.0px;height:125.2px;background:#d6d6d6;"></div>
<div style="position:absolute;left:2271.3px;top:117.4px;width:1.0px;height:125.2px;background:#d6d6d6;"></div>
<div style="position:absolute;left:2351.0px;top:117.4px;width:1.0px;height:125.2px;background:#d6d6d6;"></div>
<div style="position:absolute;left:2437.3px;top:117.4px;width:1.0px;height:125.2px;background:#d6d6d6;"></div>
<div style="position:absolute;left:2528.4px;top:117.4px;width:1.0px;height:125.2px;background:#d6d6d6;"></div>
<div style="position:absolute;left:2677.2px;top:117.4px;width:1.0px;height:125.2px;background:#d6d6d6;"></div>
<div style="position:absolute;left:1472.2px;top:230.34px;font-family:'Liberation Sans', sans-serif;font-size:15.19px;line-height:15.19px;font-weight:400;font-style:normal;color:#242424;white-space:pre;">Clipboard</div>
<div style="position:absolute;left:1720.0px;top:231.48px;font-family:'Liberation Sans', sans-serif;font-size:13.84px;line-height:13.84px;font-weight:400;font-style:normal;color:#242424;white-space:pre;">Font</div>
<div style="position:absolute;left:2007.5px;top:231.27px;font-family:'Liberation Sans', sans-serif;font-size:14.09px;line-height:14.09px;font-weight:400;font-style:normal;color:#242424;white-space:pre;">Paragraph</div>
<div style="position:absolute;left:2200.0px;top:231.48px;font-family:'Liberation Sans', sans-serif;font-size:13.84px;line-height:13.84px;font-weight:400;font-style:normal;color:#242424;white-space:pre;">Styles</div>
<div style="position:absolute;left:2376.0px;top:231.31px;font-family:'Liberation Sans', sans-serif;font-size:14.51px;line-height:14.51px;font-weight:400;font-style:normal;color:#242424;white-space:pre;">Voice</div>
<div style="position:absolute;left:2456.0px;top:230.69px;font-family:'Liberation Sans', sans-serif;font-size:15.25px;line-height:15.25px;font-weight:400;font-style:normal;color:#242424;white-space:pre;">Add-ins</div>
<svg style="position:absolute;left:0;top:0;overflow:visible" width="1" height="1"><path d="M1560.3 240.6 v-8 h8" fill="none" stroke="#616161" stroke-width="1"/><path d="M1562.8 235.1 L1569.8 242.1 M1564.3 242.1 h5.5 v-5.5" fill="none" stroke="#424242" stroke-width="1.2"/></svg>
<svg style="position:absolute;left:0;top:0;overflow:visible" width="1" height="1"><path d="M1897.2 240.6 v-8 h8" fill="none" stroke="#616161" stroke-width="1"/><path d="M1899.7 235.1 L1906.7 242.1 M1901.2 242.1 h5.5 v-5.5" fill="none" stroke="#424242" stroke-width="1.2"/></svg>
<svg style="position:absolute;left:0;top:0;overflow:visible" width="1" height="1"><path d="M2173.8 240.2 v-8 h8" fill="none" stroke="#616161" stroke-width="1"/><path d="M2176.3 234.7 L2183.3 241.7 M2177.8 241.7 h5.5 v-5.5" fill="none" stroke="#424242" stroke-width="1.2"/></svg>
<svg style="position:absolute;left:0;top:0;overflow:visible" width="1" height="1"><path d="M2255 240.6 v-8 h8" fill="none" stroke="#616161" stroke-width="1"/><path d="M2257.5 235.1 L2264.5 242.1 M2259 242.1 h5.5 v-5.5" fill="none" stroke="#424242" stroke-width="1.2"/></svg>
<svg style="position:absolute;left:0;top:0;overflow:visible" width="1" height="1"><path d="M2838.5 227.5 L2846.8 235.8 L2855 227.5" fill="none" stroke="#424242" stroke-width="1.5"/></svg>
<svg style="position:absolute;left:0;top:0;overflow:visible" width="1" height="1"><rect x="1484" y="129.2" width="27.4" height="31.5" fill="#fde9a6" stroke="#e8730e" stroke-width="2"/><rect x="1488" y="133" width="19" height="24" fill="#fafafa"/><path d="M1490 133.2 v-4 h4 a3.5 3.5 0 0 1 7 0 h4.5 v4 z" fill="#f2f2f2" stroke="#616161" stroke-width="1.3"/><rect x="1501.5" y="140" width="18.5" height="24" fill="#fafafa" stroke="#424242" stroke-width="1.5"/></svg>
<div style="position:absolute;left:1478.9px;top:175.42px;font-family:'Liberation Sans', sans-serif;font-size:15.09px;line-height:15.09px;font-weight:400;font-style:normal;color:#242424;white-space:pre;">Paste</div>
<svg style="position:absolute;left:0;top:0;overflow:visible" width="1" height="1"><path d="M1494.0 202.1 L1497.7 205.9 L1501.5 202.1" fill="none" stroke="#424242" stroke-width="1.3"/></svg>
<svg style="position:absolute;left:0;top:0;overflow:visible" width="1" height="1"><path d="M1541.5 122 L1551 140 M1554 122 L1544.5 140" stroke="#424242" stroke-width="1.1"/><circle cx="1543.4" cy="141.3" r="2.5" fill="#fff" stroke="#1f8ad2" stroke-width="1.4"/><circle cx="1552" cy="141.3" r="2.5" fill="#fff" stroke="#1f8ad2" stroke-width="1.4"/></svg>
<svg style="position:absolute;left:0;top:0;overflow:visible" width="1" height="1"><path d="M1544 176 h-6.5 v-17.5 h9 l2.5 2.5" fill="none" stroke="#424242" stroke-width="1.3"/><path d="M1545 161.5 h8 l5 5 v12.5 h-13 z" fill="#fafafa" stroke="#424242" stroke-width="1.3"/><path d="M1548 172 h7 M1548 174.5 h7" stroke="#616161" stroke-width="1"/></svg>
<svg style="position:absolute;left:0;top:0;overflow:visible" width="1" height="1"><path d="M1538 205 L1546 200.5 L1552 207 L1547 214 Z" fill="#fde9a6" stroke="#e8730e" stroke-width="1.4"/><path d="M1546 200.5 l3 -3 l5 5 l-3 3 z M1550 197.5 l6 -5 a1.2 1.2 0 0 1 2 2 l-5 6" fill="#fff" stroke="#424242" stroke-width="1.2"/></svg>
<svg style="position:absolute;left:0;top:0;overflow:visible" width="1" height="1"><rect x="1588.5" y="116.5" width="250.8" height="33" rx="5" fill="#fff" stroke="#8c8c8c" stroke-width="1"/><rect x="1843.8" y="116.5" width="58.6" height="33" rx="5" fill="#fff" stroke="#8c8c8c" stroke-width="1"/></svg>
<div style="position:absolute;left:1591.0px;top:125.60px;font-family:'Liberation Sans', sans-serif;font-size:15.36px;line-height:15.36px;font-weight:400;font-style:normal;color:#242424;white-space:pre;">Times New Roman</div>
<svg style="position:absolute;left:0;top:0;overflow:visible" width="1" height="1"><path d="M1827.8 132.1 L1831.5 135.9 L1835.2 132.1" fill="none" stroke="#242424" stroke-width="1.3"/></svg>
<div style="position:absolute;left:1847.7px;top:126.42px;font-family:'Liberation Sans', sans-serif;font-size:14.38px;line-height:14.38px;font-weight:400;font-style:normal;color:#242424;white-space:pre;">12</div>
<svg style="position:absolute;left:0;top:0;overflow:visible" width="1" height="1"><path d="M1890.8 132.1 L1894.5 135.9 L1898.2 132.1" fill="none" stroke="#242424" stroke-width="1.3"/></svg>
<div style="position:absolute;left:1599.6px;top:159.10px;font-family:'Liberation Sans', sans-serif;font-size:17.60px;line-height:17.60px;font-weight:700;font-style:normal;color:#424242;white-space:pre;transform:scaleX(0.86);transform-origin:0 0;">B</div>
<div style="position:absolute;left:1637.5px;top:159.45px;font-family:'Liberation Serif', serif;font-size:20.00px;line-height:20.00px;font-weight:400;font-style:italic;color:#424242;white-space:pre;">I</div>
<svg style="position:absolute;left:0;top:0;overflow:visible" width="1" height="1"><path d="M1675.5 161.5 v7 a5 5 0 0 0 10 0 v-7" fill="none" stroke="#424242" stroke-width="1.5"/><path d="M1674.2 176.8 h12.4" stroke="#424242" stroke-width="1.3"/></svg>
<svg style="position:absolute;left:0;top:0;overflow:visible" width="1" height="1"><path d="M1706.0 167.1 L1709.8 170.9 L1713.5 167.1" fill="none" stroke="#424242" stroke-width="1.3"/></svg>
<div style="position:absolute;left:1730.5px;top:161.80px;font-family:'Liberation Sans', sans-serif;font-size:16.18px;line-height:16.18px;font-weight:400;font-style:normal;color:#424242;white-space:pre;">ab</div>
<div style="position:absolute;left:1729.0px;top:170.5px;width:21.8px;height:1.2px;background:#424242;"></div>
<div style="position:absolute;left:1773.5px;top:160.26px;font-family:'Liberation Sans', sans-serif;font-size:18.00px;line-height:18.00px;font-weight:400;font-style:normal;color:#424242;white-space:pre;">x</div>
<div style="position:absolute;left:1782.5px;top:171.33px;font-family:'Liberation Sans', sans-serif;font-size:9.89px;line-height:9.89px;font-weight:700;font-style:normal;color:#1f8ad2;white-space:pre;">2</div>
<div style="position:absolute;left:1811.0px;top:160.26px;font-family:'Liberation Sans', sans-serif;font-size:18.00px;line-height:18.00px;font-weight:400;font-style:normal;color:#424242;white-space:pre;">x</div>
<div style="position:absolute;left:1820.5px;top:155.63px;font-family:'Liberation Sans', sans-serif;font-size:9.89px;line-height:9.89px;font-weight:700;font-style:normal;color:#1f8ad2;white-space:pre;">2</div>
<div style="position:absolute;left:1837.4px;top:152.4px;width:1.0px;height:33.0px;background:#d6d6d6;"></div>
<svg style="position:absolute;left:0;top:0;overflow:visible" width="1" height="1"><path d="M1847.5 175 L1854 158.5 L1860.5 175 M1850 169 h8" fill="none" stroke="#424242" stroke-width="1.2"/><path d="M1856.5 174 L1863 167.5 L1869 173.5 L1862.5 180 Z" fill="#fff" stroke="#a23bbd" stroke-width="1.6"/></svg>
<div style="position:absolute;left:1605.2px;top:191.59px;font-family:'Liberation Sans', sans-serif;font-size:26.00px;line-height:26.00px;font-weight:700;font-style:normal;color:#e6f1fc;white-space:pre;transform:translateX(-50%);-webkit-text-stroke:3.4px #1f6cc6;paint-order:stroke fill;">A</div>
<svg style="position:absolute;left:0;top:0;overflow:visible" width="1" height="1"><path d="M1626.2 203.1 L1630.0 206.9 L1633.8 203.1" fill="none" stroke="#424242" stroke-width="1.3"/></svg>
<svg style="position:absolute;left:0;top:0;overflow:visible" width="1" height="1"><rect x="1654" y="210.2" width="21.8" height="5.6" fill="#00ff00"/><path d="M1658 208 l2 -5 l10 -10 a1.8 1.8 0 0 1 3 3 l-10 10 z" fill="#fff" stroke="#424242" stroke-width="1.2"/><path d="M1656.5 209 l3.5 -5 l3 3 z" fill="#8a8a8a"/></svg>
<svg style="position:absolute;left:0;top:0;overflow:visible" width="1" height="1"><path d="M1690.0 203.1 L1693.8 206.9 L1697.5 203.1" fill="none" stroke="#424242" stroke-width="1.3"/></svg>
<div style="position:absolute;left:1712.9px;top:210.2px;width:22.1px;height:5.6px;background:#e60000;"></div>
<svg style="position:absolute;left:0;top:0;overflow:visible" width="1" height="1"><path d="M1718 208.5 L1724.2 194.5 L1730.5 208.5 M1720.5 203 h7.5" fill="none" stroke="#424242" stroke-width="1.3"/></svg>
<svg style="position:absolute;left:0;top:0;overflow:visible" width="1" height="1"><path d="M1748.8 203.1 L1752.6 206.9 L1756.3 203.1" fill="none" stroke="#424242" stroke-width="1.3"/></svg>
<div style="position:absolute;left:1772.5px;top:196.82px;font-family:'Liberation Sans', sans-serif;font-size:17.58px;line-height:17.58px;font-weight:400;font-style:normal;color:#424242;white-space:pre;">Aa</div>
<svg style="position:absolute;left:0;top:0;overflow:visible" width="1" height="1"><path d="M1804.0 203.1 L1807.8 206.9 L1811.5 203.1" fill="none" stroke="#424242" stroke-width="1.3"/></svg>
<div style="position:absolute;left:1826.6px;top:188.5px;width:1.0px;height:33.0px;background:#d6d6d6;"></div>
<svg style="position:absolute;left:0;top:0;overflow:visible" width="1" height="1"><path d="M1837.5 211.5 L1845 194.5 L1852.5 211.5 M1840.3 205 h9.5" fill="none" stroke="#424242" stroke-width="1.3"/><path d="M1851 198 l2.7 -2.7 l2.7 2.7" fill="none" stroke="#1f8ad2" stroke-width="1.3"/></svg>
<svg style="position:absolute;left:0;top:0;overflow:visible" width="1" height="1"><path d="M1877.5 211.5 L1884 197 L1890.5 211.5 M1880 206 h8" fill="none" stroke="#424242" stroke-width="1.3"/><path d="M1890.5 195.5 l2.5 2.5 l2.5 -2.5" fill="none" stroke="#1f8ad2" stroke-width="1.3"/></svg>
<svg style="position:absolute;left:0;top:0;overflow:visible" width="1" height="1"><rect x="1925.7" y="116.4" width="54.6" height="33" rx="6" fill="#ebebeb" stroke="#8a8a8a" stroke-width="1"/><rect x="1925.7" y="152.5" width="34" height="33" rx="6" fill="#ebebeb" stroke="#8a8a8a" stroke-width="1"/></svg>
<svg style="position:absolute;left:0;top:0;overflow:visible" width="1" height="1"><rect x="1931" y="121.6" width="4.8" height="4.8" fill="#1f8ad2"/><path d="M1938 124 h13.7" stroke="#424242" stroke-width="1.3"/></svg>
<svg style="position:absolute;left:0;top:0;overflow:visible" width="1" height="1"><rect x="1931" y="129.79999999999998" width="4.8" height="4.8" fill="#1f8ad2"/><path d="M1938 132.2 h13.7" stroke="#424242" stroke-width="1.3"/></svg>
<svg style="position:absolute;left:0;top:0;overflow:visible" width="1" height="1"><rect x="1931" y="137.9" width="4.8" height="4.8" fill="#1f8ad2"/><path d="M1938 140.3 h13.7" stroke="#424242" stroke-width="1.3"/></svg>
<svg style="position:absolute;left:0;top:0;overflow:visible" width="1" height="1"><path d="M1966.8 130.7 L1970.8 134.7 L1974.8 130.7" fill="none" stroke="#424242" stroke-width="1.3"/></svg>
<div style="position:absolute;left:1989.8px;top:120.95px;font-family:'Liberation Sans', sans-serif;font-size:8.09px;line-height:8.09px;font-weight:700;font-style:normal;color:#1f8ad2;white-space:pre;">1</div>
<svg style="position:absolute;left:0;top:0;overflow:visible" width="1" height="1"><path d="M1997 124 h13.8" stroke="#424242" stroke-width="1.3"/></svg>
<div style="position:absolute;left:1989.8px;top:129.15px;font-family:'Liberation Sans', sans-serif;font-size:8.09px;line-height:8.09px;font-weight:700;font-style:normal;color:#1f8ad2;white-space:pre;">2</div>
<svg style="position:absolute;left:0;top:0;overflow:visible" width="1" height="1"><path d="M1997 132.2 h13.8" stroke="#424242" stroke-width="1.3"/></svg>
<div style="position:absolute;left:1989.8px;top:137.25px;font-family:'Liberation Sans', sans-serif;font-size:8.09px;line-height:8.09px;font-weight:700;font-style:normal;color:#1f8ad2;white-space:pre;">3</div>
<svg style="position:absolute;left:0;top:0;overflow:visible" width="1" height="1"><path d="M1997 140.3 h13.8" stroke="#424242" stroke-width="1.3"/></svg>
<svg style="position:absolute;left:0;top:0;overflow:visible" width="1" height="1"><path d="M2025.8 130.7 L2029.8 134.7 L2033.8 130.7" fill="none" stroke="#424242" stroke-width="1.3"/></svg>
<div style="position:absolute;left:2049.0px;top:122.47px;font-family:'Liberation Sans', sans-serif;font-size:6.29px;line-height:6.29px;font-weight:700;font-style:normal;color:#1f8ad2;white-space:pre;">1</div>
<svg style="position:absolute;left:0;top:0;overflow:visible" width="1" height="1"><path d="M2056 124 h14" stroke="#424242" stroke-width="1.3"/></svg>
<div style="position:absolute;left:2052.0px;top:128.39px;font-family:'Liberation Sans', sans-serif;font-size:8.99px;line-height:8.99px;font-weight:700;font-style:normal;color:#1f8ad2;white-space:pre;">a</div>
<svg style="position:absolute;left:0;top:0;overflow:visible" width="1" height="1"><path d="M2060 132.2 h10" stroke="#424242" stroke-width="1.3"/></svg>
<div style="position:absolute;left:2058.5px;top:137.50px;font-family:'Liberation Sans', sans-serif;font-size:7.91px;line-height:7.91px;font-weight:700;font-style:normal;color:#1f8ad2;white-space:pre;">i</div>
<svg style="position:absolute;left:0;top:0;overflow:visible" width="1" height="1"><path d="M2064 140.3 h6" stroke="#424242" stroke-width="1.3"/></svg>
<svg style="position:absolute;left:0;top:0;overflow:visible" width="1" height="1"><path d="M2081.0 130.7 L2085.0 134.7 L2089.0 130.7" fill="none" stroke="#424242" stroke-width="1.3"/></svg>
<div style="position:absolute;left:2103.5px;top:116.0px;width:1.0px;height:33.6px;background:#d6d6d6;"></div>
<svg style="position:absolute;left:0;top:0;overflow:visible" width="1" height="1"><path d="M2114 124 h19.6 M2124 129.5 h9.6 M2124 135 h9.6 M2114 140.3 h19.6" stroke="#424242" stroke-width="1.3"/><path d="M2122 132.2 h-7.5 M2117.5 129 l-3 3.2 l3 3.2" fill="none" stroke="#1f8ad2" stroke-width="1.4"/></svg>
<svg style="position:absolute;left:0;top:0;overflow:visible" width="1" height="1"><path d="M2152 124 h19.6 M2162 129.5 h9.6 M2162 135 h9.6 M2152 140.3 h19.6" stroke="#424242" stroke-width="1.3"/><path d="M2152 132.2 h7.5 M2156.5 129 l3 3.2 l-3 3.2" fill="none" stroke="#1f8ad2" stroke-width="1.4"/></svg>
<svg style="position:absolute;left:0;top:0;overflow:visible" width="1" height="1"><path d="M1932 160 h19.7 M1932 165.4 h13.5 M1932 170.8 h19.7 M1932 176.4 h13.5" stroke="#424242" stroke-width="1.3"/></svg>
<svg style="position:absolute;left:0;top:0;overflow:visible" width="1" height="1"><path d="M1970 160 h19.7 M1973 165.4 h13.5 M1970 170.8 h19.7 M1973 176.4 h13.5" stroke="#424242" stroke-width="1.3"/></svg>
<svg style="position:absolute;left:0;top:0;overflow:visible" width="1" height="1"><path d="M2008 160 h19.7 M2014 165.4 h13.5 M2008 170.8 h19.7 M2014 176.4 h13.5" stroke="#424242" stroke-width="1.3"/></svg>
<svg style="position:absolute;left:0;top:0;overflow:visible" width="1" height="1"><path d="M2046 160 h19.7 M2046 165.4 h19.7 M2046 170.8 h19.7 M2046 176.4 h19.7" stroke="#424242" stroke-width="1.3"/></svg>
<div style="position:absolute;left:2077.4px;top:152.3px;width:1.0px;height:33.4px;background:#d6d6d6;"></div>
<svg style="position:absolute;left:0;top:0;overflow:visible" width="1" height="1"><path d="M2096.5 160 h12.5 M2096.5 165.4 h12.5 M2096.5 170.8 h12.5 M2096.5 176.4 h12.5" stroke="#424242" stroke-width="1.3"/><path d="M2090.3 159 v18 M2087.3 162 l3 -3 l3 3 M2087.3 174 l3 3 l3 -3" fill="none" stroke="#1f8ad2" stroke-width="1.4"/></svg>
<svg style="position:absolute;left:0;top:0;overflow:visible" width="1" height="1"><path d="M2118.8 167.0 L2122.8 171.0 L2126.8 167.0" fill="none" stroke="#424242" stroke-width="1.3"/></svg>
<svg style="position:absolute;left:0;top:0;overflow:visible" width="1" height="1"><path d="M1935 204 l8 -8 l6 6 l-8 8 z" fill="none" stroke="#424242" stroke-width="1.3"/><path d="M1943 196 v-2 a1.5 1.5 0 0 1 3 0 v5" fill="none" stroke="#424242" stroke-width="1.2"/><path d="M1948 198 c3 0 3.5 3 3.5 6" fill="none" stroke="#1565c0" stroke-width="1.6"/><rect x="1931.5" y="210.5" width="21.5" height="5" fill="#fff" stroke="#8a8a8a" stroke-width="1"/></svg>
<svg style="position:absolute;left:0;top:0;overflow:visible" width="1" height="1"><path d="M1966.8 202.8 L1970.8 206.8 L1974.8 202.8" fill="none" stroke="#424242" stroke-width="1.3"/></svg>
<svg style="position:absolute;left:0;top:0;overflow:visible" width="1" height="1"><rect x="1990.5" y="194.5" width="19.5" height="19" fill="none" stroke="#424242" stroke-width="1" stroke-dasharray="1.5 1.5"/><path d="M2000.2 194.5 v19 M1990.5 204 h19.5" stroke="#424242" stroke-width="1" stroke-dasharray="1.5 1.5"/><path d="M1990 214 h20.5" stroke="#424242" stroke-width="1.6"/></svg>
<svg style="position:absolute;left:0;top:0;overflow:visible" width="1" height="1"><path d="M2025.8 203.0 L2029.8 207.0 L2033.8 203.0" fill="none" stroke="#424242" stroke-width="1.3"/></svg>
<div style="position:absolute;left:2043.4px;top:188.0px;width:1.0px;height:33.8px;background:#d6d6d6;"></div>
<div style="position:absolute;left:2053.0px;top:193.05px;font-family:'Liberation Sans', sans-serif;font-size:12.46px;line-height:12.46px;font-weight:700;font-style:normal;color:#1f8ad2;white-space:pre;">A</div>
<div style="position:absolute;left:2053.5px;top:203.72px;font-family:'Liberation Sans', sans-serif;font-size:13.91px;line-height:13.91px;font-weight:400;font-style:normal;color:#424242;white-space:pre;">Z</div>
<svg style="position:absolute;left:0;top:0;overflow:visible" width="1" height="1"><path d="M2069.5 194.5 v21 M2065 211 l4.5 4.5 l4.5 -4.5" fill="none" stroke="#424242" stroke-width="1.3"/></svg>
<div style="position:absolute;left:2085.4px;top:188.0px;width:1.0px;height:33.8px;background:#d6d6d6;"></div>
<div style="position:absolute;left:2098.8px;top:191.89px;font-family:'Liberation Sans', sans-serif;font-size:25.17px;line-height:25.17px;font-weight:700;font-style:normal;color:#424242;white-space:pre;">¶</div>
<svg style="position:absolute;left:0;top:0;overflow:visible" width="1" height="1"><path d="M2213 159.5 L2223.8 126 L2235.6 160 M2218 147.4 h17" fill="none" stroke="#424242" stroke-width="2.3"/><path d="M2237 156 L2252.6 139" stroke="#424242" stroke-width="4.6" stroke-linecap="round"/><path d="M2237 156 L2252.6 139" stroke="#fafafa" stroke-width="2" stroke-linecap="round"/><path d="M2222.5 161 c3 0.5 8 1 12 -2 c3 -2.5 3.5 -5.5 1.5 -7 c-2 -1.5 -5 -0.8 -7 1.6 c-2 2.4 -3 5.8 -6.5 7.4 z" fill="#7cb7ec" stroke="#1f6cc6" stroke-width="1.2"/></svg>
<div style="position:absolute;left:2210.0px;top:173.34px;font-family:'Liberation Sans', sans-serif;font-size:15.42px;line-height:15.42px;font-weight:400;font-style:normal;color:#242424;white-space:pre;">Styles</div>
<svg style="position:absolute;left:0;top:0;overflow:visible" width="1" height="1"><path d="M2227.2 200.1 L2231.0 203.9 L2234.8 200.1" fill="none" stroke="#424242" stroke-width="1.3"/></svg>
<svg style="position:absolute;left:0;top:0;overflow:visible" width="1" height="1"><circle cx="2316.2" cy="134.3" r="14.3" fill="#fafafa" stroke="#424242" stroke-width="1.6"/><path d="M2306 144.6 L2290.5 160.5" stroke="#424242" stroke-width="1.6"/></svg>
<div style="position:absolute;left:2285.0px;top:168.93px;font-family:'Liberation Sans', sans-serif;font-size:17.20px;line-height:17.20px;font-weight:400;font-style:normal;color:#242424;white-space:pre;">Editing</div>
<svg style="position:absolute;left:0;top:0;overflow:visible" width="1" height="1"><path d="M2307.2 197.6 L2311.0 201.4 L2314.8 197.6" fill="none" stroke="#424242" stroke-width="1.3"/></svg>
<svg style="position:absolute;left:0;top:0;overflow:visible" width="1" height="1"><rect x="2386.8" y="122" width="15.2" height="29.6" rx="7.6" fill="#80b9ee" stroke="#0f6cbd" stroke-width="1.9"/><path d="M2381.6 143 a12.8 12.8 0 0 0 25.6 0 M2394.4 155.8 v7.8" fill="none" stroke="#424242" stroke-width="1.5"/></svg>
<div style="position:absolute;left:2368.4px;top:173.95px;font-family:'Liberation Sans', sans-serif;font-size:17.06px;line-height:17.06px;font-weight:400;font-style:normal;color:#242424;white-space:pre;">Dictate</div>
<svg style="position:absolute;left:0;top:0;overflow:visible" width="1" height="1"><path d="M2390.2 202.1 L2394.0 205.9 L2397.8 202.1" fill="none" stroke="#424242" stroke-width="1.3"/></svg>
<svg style="position:absolute;left:0;top:0;overflow:visible" width="1" height="1"><rect x="2464" y="123.7" width="38.4" height="37.6" fill="none" stroke="#d83b01" stroke-width="2"/><rect x="2468.5" y="128" width="12.5" height="12.5" fill="none" stroke="#d83b01" stroke-width="1.5"/><rect x="2485.3" y="128" width="12.5" height="12.5" fill="none" stroke="#d83b01" stroke-width="1.5"/><rect x="2468.5" y="144.5" width="12.5" height="12.5" fill="none" stroke="#d83b01" stroke-width="1.5"/><rect x="2485.3" y="144.5" width="12.5" height="12.5" fill="none" stroke="#d83b01" stroke-width="1.5"/></svg>
<div style="position:absolute;left:2454.0px;top:171.67px;font-family:'Liberation Sans', sans-serif;font-size:17.40px;line-height:17.40px;font-weight:400;font-style:normal;color:#242424;white-space:pre;">Add-ins</div>
<svg style="position:absolute;left:0;top:0;overflow:visible" width="1" height="1"><path d="M2549 163 l3 -11 l18 -30 l6 3.5 l-18 30 z" fill="#fff" stroke="#1a5fc8" stroke-width="2.4" stroke-linejoin="round"/><path d="M2568 135 h19 a3 3 0 0 1 0 6 h-19 z M2564 145 h18 a3 3 0 0 1 0 6 h-18 z M2559 155 h13 a3 3 0 0 1 0 6 h-13 z" fill="#1a5fc8"/></svg>
<div style="position:absolute;left:2547.4px;top:171.94px;font-family:'Liberation Sans', sans-serif;font-size:17.07px;line-height:17.07px;font-weight:400;font-style:normal;color:#242424;white-space:pre;">Editor</div>
<svg style="position:absolute;left:0;top:0;overflow:visible" width="1" height="1"><defs><linearGradient id="cpa1440" x1="0" y1="0" x2="0" y2="1"><stop offset="0" stop-color="#22b8f8"/><stop offset="0.35" stop-color="#1696d8"/><stop offset="0.65" stop-color="#5cb46a"/><stop offset="1" stop-color="#f2c60a"/></linearGradient><linearGradient id="cpb1440" x1="0" y1="0" x2="0" y2="1"><stop offset="0" stop-color="#a650ec"/><stop offset="0.5" stop-color="#ee5a8c"/><stop offset="1" stop-color="#f99c55"/></linearGradient></defs><path d="M2637 123.4 c3.2 0 5.6 1 7 4.2 c1.1 2.6 1.6 5.3 3.8 6.6 h-9 z" fill="#1c4fd6"/><path d="M2634 150.4 h-11.8 c2 1 2.4 3.4 3.2 5.8 c1 3 2.6 4.6 5.6 4.6 z" fill="#f1552c"/><path d="M2622 123.4 h16 c1.6 0 2.3 1.2 1.9 2.7 l-7.8 21.6 c-0.7 1.9 -1.9 2.6 -3.6 2.6 h-11.5 c-2.4 0 -3.4 -1.7 -2.9 -3.9 l4.4 -18.2 c0.7 -3 1.8 -4.8 3.5 -4.8 z" fill="url(#cpa1440)"/><path d="M2643.2 133.8 h9.8 c2.4 0 3.4 1.7 2.9 3.9 l-4.4 18.2 c-0.7 3 -1.8 4.8 -3.5 4.8 h-16 c-1.6 0 -2.3 -1.2 -1.9 -2.7 l7.8 -21.6 c0.7 -1.9 1.9 -2.6 3.6 -2.6 z" fill="url(#cpb1440)"/></svg>
<div style="position:absolute;left:2606.8px;top:171.55px;font-family:'Liberation Sans', sans-serif;font-size:17.54px;line-height:17.54px;font-weight:400;font-style:normal;color:#242424;white-space:pre;">Copilot</div>
<svg style="position:absolute;left:0;top:0;overflow:visible" width="1" height="1"><path d="M2430 31.5 L2436.3 37.8 L2442.6 31.5" fill="none" stroke="#ababab" stroke-width="1.5"/></svg>
<div style="position:absolute;left:12.0px;top:266.0px;width:3.0px;height:9.0px;background:#555555;"></div>
<div style="position:absolute;left:12.0px;top:272.5px;width:9.0px;height:2.5px;background:#555555;"></div>
<div style="position:absolute;left:35.0px;top:253.0px;width:1.0px;height:32.0px;background:#d0d4d9;"></div>
<div style="position:absolute;left:77.7px;top:257.0px;width:45.3px;height:21.0px;background:#ffffff;"></div>
<div style="position:absolute;left:141.0px;top:257.0px;width:256.7px;height:21.0px;background:#ffffff;"></div>
<div style="position:absolute;left:417.0px;top:257.0px;width:140.6px;height:21.0px;background:#ffffff;"></div>
<div style="position:absolute;left:575.7px;top:257.0px;width:56.8px;height:21.0px;background:#ffffff;"></div>
<div style="position:absolute;left:652.0px;top:257.0px;width:70.4px;height:21.0px;background:#ffffff;"></div>
<div style="position:absolute;left:743.0px;top:257.0px;width:472.7px;height:21.0px;background:#ffffff;"></div>
<div style="position:absolute;left:126.0px;top:262.42px;font-family:'Liberation Sans', sans-serif;font-size:12.50px;line-height:12.50px;font-weight:400;font-style:normal;color:#5c5c5c;white-space:pre;transform:translateX(-50%);">1</div>
<div style="position:absolute;left:173.6px;top:262.42px;font-family:'Liberation Sans', sans-serif;font-size:12.50px;line-height:12.50px;font-weight:400;font-style:normal;color:#5c5c5c;white-space:pre;transform:translateX(-50%);">2</div>
<div style="position:absolute;left:221.2px;top:262.42px;font-family:'Liberation Sans', sans-serif;font-size:12.50px;line-height:12.50px;font-weight:400;font-style:normal;color:#5c5c5c;white-space:pre;transform:translateX(-50%);">3</div>
<div style="position:absolute;left:268.8px;top:262.42px;font-family:'Liberation Sans', sans-serif;font-size:12.50px;line-height:12.50px;font-weight:400;font-style:normal;color:#5c5c5c;white-space:pre;transform:translateX(-50%);">4</div>
<div style="position:absolute;left:316.4px;top:262.42px;font-family:'Liberation Sans', sans-serif;font-size:12.50px;line-height:12.50px;font-weight:400;font-style:normal;color:#5c5c5c;white-space:pre;transform:translateX(-50%);">5</div>
<div style="position:absolute;left:364.0px;top:262.42px;font-family:'Liberation Sans', sans-serif;font-size:12.50px;line-height:12.50px;font-weight:400;font-style:normal;color:#5c5c5c;white-space:pre;transform:translateX(-50%);">6</div>
<div style="position:absolute;left:411.6px;top:262.42px;font-family:'Liberation Sans', sans-serif;font-size:12.50px;line-height:12.50px;font-weight:400;font-style:normal;color:#5c5c5c;white-space:pre;transform:translateX(-50%);">7</div>
<div style="position:absolute;left:459.2px;top:262.42px;font-family:'Liberation Sans', sans-serif;font-size:12.50px;line-height:12.50px;font-weight:400;font-style:normal;color:#5c5c5c;white-space:pre;transform:translateX(-50%);">8</div>
<div style="position:absolute;left:506.8px;top:262.42px;font-family:'Liberation Sans', sans-serif;font-size:12.50px;line-height:12.50px;font-weight:400;font-style:normal;color:#5c5c5c;white-space:pre;transform:translateX(-50%);">9</div>
<div style="position:absolute;left:554.4px;top:262.42px;font-family:'Liberation Sans', sans-serif;font-size:12.50px;line-height:12.50px;font-weight:400;font-style:normal;color:#5c5c5c;white-space:pre;transform:translateX(-50%);">10</div>
<div style="position:absolute;left:602.0px;top:262.42px;font-family:'Liberation Sans', sans-serif;font-size:12.50px;line-height:12.50px;font-weight:400;font-style:normal;color:#5c5c5c;white-space:pre;transform:translateX(-50%);">11</div>
<div style="position:absolute;left:649.6px;top:262.42px;font-family:'Liberation Sans', sans-serif;font-size:12.50px;line-height:12.50px;font-weight:400;font-style:normal;color:#5c5c5c;white-space:pre;transform:translateX(-50%);">12</div>
<div style="position:absolute;left:697.2px;top:262.42px;font-family:'Liberation Sans', sans-serif;font-size:12.50px;line-height:12.50px;font-weight:400;font-style:normal;color:#5c5c5c;white-space:pre;transform:translateX(-50%);">13</div>
<div style="position:absolute;left:744.8px;top:262.42px;font-family:'Liberation Sans', sans-serif;font-size:12.50px;line-height:12.50px;font-weight:400;font-style:normal;color:#5c5c5c;white-space:pre;transform:translateX(-50%);">14</div>
<div style="position:absolute;left:792.4px;top:262.42px;font-family:'Liberation Sans', sans-serif;font-size:12.50px;line-height:12.50px;font-weight:400;font-style:normal;color:#5c5c5c;white-space:pre;transform:translateX(-50%);">15</div>
<div style="position:absolute;left:840.0px;top:262.42px;font-family:'Liberation Sans', sans-serif;font-size:12.50px;line-height:12.50px;font-weight:400;font-style:normal;color:#5c5c5c;white-space:pre;transform:translateX(-50%);">16</div>
<div style="position:absolute;left:887.6px;top:262.42px;font-family:'Liberation Sans', sans-serif;font-size:12.50px;line-height:12.50px;font-weight:400;font-style:normal;color:#5c5c5c;white-space:pre;transform:translateX(-50%);">17</div>
<div style="position:absolute;left:935.2px;top:262.42px;font-family:'Liberation Sans', sans-serif;font-size:12.50px;line-height:12.50px;font-weight:400;font-style:normal;color:#5c5c5c;white-space:pre;transform:translateX(-50%);">18</div>
<div style="position:absolute;left:982.8px;top:262.42px;font-family:'Liberation Sans', sans-serif;font-size:12.50px;line-height:12.50px;font-weight:400;font-style:normal;color:#5c5c5c;white-space:pre;transform:translateX(-50%);">19</div>
<div style="position:absolute;left:1030.4px;top:262.42px;font-family:'Liberation Sans', sans-serif;font-size:12.50px;line-height:12.50px;font-weight:400;font-style:normal;color:#5c5c5c;white-space:pre;transform:translateX(-50%);">20</div>
<div style="position:absolute;left:1078.0px;top:262.42px;font-family:'Liberation Sans', sans-serif;font-size:12.50px;line-height:12.50px;font-weight:400;font-style:normal;color:#5c5c5c;white-space:pre;transform:translateX(-50%);">21</div>
<div style="position:absolute;left:1125.6px;top:262.42px;font-family:'Liberation Sans', sans-serif;font-size:12.50px;line-height:12.50px;font-weight:400;font-style:normal;color:#5c5c5c;white-space:pre;transform:translateX(-50%);">22</div>
<div style="position:absolute;left:1173.2px;top:262.42px;font-family:'Liberation Sans', sans-serif;font-size:12.50px;line-height:12.50px;font-weight:400;font-style:normal;color:#5c5c5c;white-space:pre;transform:translateX(-50%);">23</div>
<svg style="position:absolute;left:0;top:0;overflow:visible" width="1" height="1"><rect x="42.1" y="267" width="1.3" height="3" fill="#5c5c5c"/><rect x="54.0" y="264" width="1.3" height="8" fill="#5c5c5c"/><rect x="65.8" y="267" width="1.3" height="3" fill="#5c5c5c"/><rect x="89.7" y="267" width="1.3" height="3" fill="#5c5c5c"/><rect x="101.5" y="264" width="1.3" height="8" fill="#5c5c5c"/><rect x="113.5" y="267" width="1.3" height="3" fill="#5c5c5c"/><rect x="137.2" y="267" width="1.3" height="3" fill="#5c5c5c"/><rect x="149.2" y="264" width="1.3" height="8" fill="#5c5c5c"/><rect x="161.0" y="267" width="1.3" height="3" fill="#5c5c5c"/><rect x="184.8" y="267" width="1.3" height="3" fill="#5c5c5c"/><rect x="196.8" y="264" width="1.3" height="8" fill="#5c5c5c"/><rect x="208.7" y="267" width="1.3" height="3" fill="#5c5c5c"/><rect x="232.5" y="267" width="1.3" height="3" fill="#5c5c5c"/><rect x="244.3" y="264" width="1.3" height="8" fill="#5c5c5c"/><rect x="256.2" y="267" width="1.3" height="3" fill="#5c5c5c"/><rect x="280.1" y="267" width="1.3" height="3" fill="#5c5c5c"/><rect x="292.0" y="264" width="1.3" height="8" fill="#5c5c5c"/><rect x="303.9" y="267" width="1.3" height="3" fill="#5c5c5c"/><rect x="327.7" y="267" width="1.3" height="3" fill="#5c5c5c"/><rect x="339.6" y="264" width="1.3" height="8" fill="#5c5c5c"/><rect x="351.5" y="267" width="1.3" height="3" fill="#5c5c5c"/><rect x="375.2" y="267" width="1.3" height="3" fill="#5c5c5c"/><rect x="387.2" y="264" width="1.3" height="8" fill="#5c5c5c"/><rect x="399.1" y="267" width="1.3" height="3" fill="#5c5c5c"/><rect x="422.9" y="267" width="1.3" height="3" fill="#5c5c5c"/><rect x="434.8" y="264" width="1.3" height="8" fill="#5c5c5c"/><rect x="446.7" y="267" width="1.3" height="3" fill="#5c5c5c"/><rect x="470.5" y="267" width="1.3" height="3" fill="#5c5c5c"/><rect x="482.4" y="264" width="1.3" height="8" fill="#5c5c5c"/><rect x="494.2" y="267" width="1.3" height="3" fill="#5c5c5c"/><rect x="518.1" y="267" width="1.3" height="3" fill="#5c5c5c"/><rect x="530.0" y="264" width="1.3" height="8" fill="#5c5c5c"/><rect x="541.9" y="267" width="1.3" height="3" fill="#5c5c5c"/><rect x="565.7" y="267" width="1.3" height="3" fill="#5c5c5c"/><rect x="577.6" y="264" width="1.3" height="8" fill="#5c5c5c"/><rect x="589.5" y="267" width="1.3" height="3" fill="#5c5c5c"/><rect x="613.2" y="267" width="1.3" height="3" fill="#5c5c5c"/><rect x="625.1" y="264" width="1.3" height="8" fill="#5c5c5c"/><rect x="637.1" y="267" width="1.3" height="3" fill="#5c5c5c"/><rect x="660.9" y="267" width="1.3" height="3" fill="#5c5c5c"/><rect x="672.8" y="264" width="1.3" height="8" fill="#5c5c5c"/><rect x="684.6" y="267" width="1.3" height="3" fill="#5c5c5c"/><rect x="708.5" y="267" width="1.3" height="3" fill="#5c5c5c"/><rect x="720.4" y="264" width="1.3" height="8" fill="#5c5c5c"/><rect x="732.2" y="267" width="1.3" height="3" fill="#5c5c5c"/><rect x="756.1" y="267" width="1.3" height="3" fill="#5c5c5c"/><rect x="768.0" y="264" width="1.3" height="8" fill="#5c5c5c"/><rect x="779.9" y="267" width="1.3" height="3" fill="#5c5c5c"/><rect x="803.6" y="267" width="1.3" height="3" fill="#5c5c5c"/><rect x="815.6" y="264" width="1.3" height="8" fill="#5c5c5c"/><rect x="827.5" y="267" width="1.3" height="3" fill="#5c5c5c"/><rect x="851.2" y="267" width="1.3" height="3" fill="#5c5c5c"/><rect x="863.1" y="264" width="1.3" height="8" fill="#5c5c5c"/><rect x="875.1" y="267" width="1.3" height="3" fill="#5c5c5c"/><rect x="898.9" y="267" width="1.3" height="3" fill="#5c5c5c"/><rect x="910.8" y="264" width="1.3" height="8" fill="#5c5c5c"/><rect x="922.6" y="267" width="1.3" height="3" fill="#5c5c5c"/><rect x="946.5" y="267" width="1.3" height="3" fill="#5c5c5c"/><rect x="958.4" y="264" width="1.3" height="8" fill="#5c5c5c"/><rect x="970.2" y="267" width="1.3" height="3" fill="#5c5c5c"/><rect x="994.1" y="267" width="1.3" height="3" fill="#5c5c5c"/><rect x="1006.0" y="264" width="1.3" height="8" fill="#5c5c5c"/><rect x="1017.9" y="267" width="1.3" height="3" fill="#5c5c5c"/><rect x="1041.6" y="267" width="1.3" height="3" fill="#5c5c5c"/><rect x="1053.5" y="264" width="1.3" height="8" fill="#5c5c5c"/><rect x="1065.5" y="267" width="1.3" height="3" fill="#5c5c5c"/><rect x="1089.2" y="267" width="1.3" height="3" fill="#5c5c5c"/><rect x="1101.1" y="264" width="1.3" height="8" fill="#5c5c5c"/><rect x="1113.0" y="267" width="1.3" height="3" fill="#5c5c5c"/><rect x="1136.9" y="267" width="1.3" height="3" fill="#5c5c5c"/><rect x="1148.8" y="264" width="1.3" height="8" fill="#5c5c5c"/><rect x="1160.7" y="267" width="1.3" height="3" fill="#5c5c5c"/><rect x="1184.5" y="267" width="1.3" height="3" fill="#5c5c5c"/><rect x="1196.4" y="264" width="1.3" height="8" fill="#5c5c5c"/><rect x="1208.2" y="267" width="1.3" height="3" fill="#5c5c5c"/><rect x="1232.0" y="267" width="1.3" height="3" fill="#5c5c5c"/><rect x="1244.0" y="264" width="1.3" height="8" fill="#5c5c5c"/><rect x="1255.9" y="267" width="1.3" height="3" fill="#5c5c5c"/><rect x="1279.7" y="267" width="1.3" height="3" fill="#5c5c5c"/><rect x="1291.5" y="264" width="1.3" height="8" fill="#5c5c5c"/><rect x="1303.5" y="267" width="1.3" height="3" fill="#5c5c5c"/></svg>
<svg style="position:absolute;left:0;top:0;overflow:visible" width="1" height="1"><rect x="65.1" y="262" width="8.8" height="11" fill="#777777"/><rect x="66.6" y="262.7" width="1.1" height="1.1" fill="#ffffff"/><rect x="66.6" y="264.8" width="1.1" height="1.1" fill="#ffffff"/><rect x="66.6" y="267.0" width="1.1" height="1.1" fill="#ffffff"/><rect x="66.6" y="269.1" width="1.1" height="1.1" fill="#ffffff"/><rect x="66.6" y="271.3" width="1.1" height="1.1" fill="#ffffff"/><rect x="68.7" y="262.7" width="1.1" height="1.1" fill="#ffffff"/><rect x="68.7" y="264.8" width="1.1" height="1.1" fill="#ffffff"/><rect x="68.7" y="267.0" width="1.1" height="1.1" fill="#ffffff"/><rect x="68.7" y="269.1" width="1.1" height="1.1" fill="#ffffff"/><rect x="68.7" y="271.3" width="1.1" height="1.1" fill="#ffffff"/><rect x="70.8" y="262.7" width="1.1" height="1.1" fill="#ffffff"/><rect x="70.8" y="264.8" width="1.1" height="1.1" fill="#ffffff"/><rect x="70.8" y="267.0" width="1.1" height="1.1" fill="#ffffff"/><rect x="70.8" y="269.1" width="1.1" height="1.1" fill="#ffffff"/><rect x="70.8" y="271.3" width="1.1" height="1.1" fill="#ffffff"/></svg>
<svg style="position:absolute;left:0;top:0;overflow:visible" width="1" height="1"><rect x="125.6" y="262" width="8.8" height="11" fill="#777777"/><rect x="127.1" y="262.7" width="1.1" height="1.1" fill="#ffffff"/><rect x="127.1" y="264.8" width="1.1" height="1.1" fill="#ffffff"/><rect x="127.1" y="267.0" width="1.1" height="1.1" fill="#ffffff"/><rect x="127.1" y="269.1" width="1.1" height="1.1" fill="#ffffff"/><rect x="127.1" y="271.3" width="1.1" height="1.1" fill="#ffffff"/><rect x="129.2" y="262.7" width="1.1" height="1.1" fill="#ffffff"/><rect x="129.2" y="264.8" width="1.1" height="1.1" fill="#ffffff"/><rect x="129.2" y="267.0" width="1.1" height="1.1" fill="#ffffff"/><rect x="129.2" y="269.1" width="1.1" height="1.1" fill="#ffffff"/><rect x="129.2" y="271.3" width="1.1" height="1.1" fill="#ffffff"/><rect x="131.3" y="262.7" width="1.1" height="1.1" fill="#ffffff"/><rect x="131.3" y="264.8" width="1.1" height="1.1" fill="#ffffff"/><rect x="131.3" y="267.0" width="1.1" height="1.1" fill="#ffffff"/><rect x="131.3" y="269.1" width="1.1" height="1.1" fill="#ffffff"/><rect x="131.3" y="271.3" width="1.1" height="1.1" fill="#ffffff"/></svg>
<svg style="position:absolute;left:0;top:0;overflow:visible" width="1" height="1"><rect x="403.6" y="262" width="8.8" height="11" fill="#777777"/><rect x="405.1" y="262.7" width="1.1" height="1.1" fill="#ffffff"/><rect x="405.1" y="264.8" width="1.1" height="1.1" fill="#ffffff"/><rect x="405.1" y="267.0" width="1.1" height="1.1" fill="#ffffff"/><rect x="405.1" y="269.1" width="1.1" height="1.1" fill="#ffffff"/><rect x="405.1" y="271.3" width="1.1" height="1.1" fill="#ffffff"/><rect x="407.2" y="262.7" width="1.1" height="1.1" fill="#ffffff"/><rect x="407.2" y="264.8" width="1.1" height="1.1" fill="#ffffff"/><rect x="407.2" y="267.0" width="1.1" height="1.1" fill="#ffffff"/><rect x="407.2" y="269.1" width="1.1" height="1.1" fill="#ffffff"/><rect x="407.2" y="271.3" width="1.1" height="1.1" fill="#ffffff"/><rect x="409.3" y="262.7" width="1.1" height="1.1" fill="#ffffff"/><rect x="409.3" y="264.8" width="1.1" height="1.1" fill="#ffffff"/><rect x="409.3" y="267.0" width="1.1" height="1.1" fill="#ffffff"/><rect x="409.3" y="269.1" width="1.1" height="1.1" fill="#ffffff"/><rect x="409.3" y="271.3" width="1.1" height="1.1" fill="#ffffff"/></svg>
<svg style="position:absolute;left:0;top:0;overflow:visible" width="1" height="1"><rect x="561.6" y="262" width="8.8" height="11" fill="#777777"/><rect x="563.1" y="262.7" width="1.1" height="1.1" fill="#ffffff"/><rect x="563.1" y="264.8" width="1.1" height="1.1" fill="#ffffff"/><rect x="563.1" y="267.0" width="1.1" height="1.1" fill="#ffffff"/><rect x="563.1" y="269.1" width="1.1" height="1.1" fill="#ffffff"/><rect x="563.1" y="271.3" width="1.1" height="1.1" fill="#ffffff"/><rect x="565.2" y="262.7" width="1.1" height="1.1" fill="#ffffff"/><rect x="565.2" y="264.8" width="1.1" height="1.1" fill="#ffffff"/><rect x="565.2" y="267.0" width="1.1" height="1.1" fill="#ffffff"/><rect x="565.2" y="269.1" width="1.1" height="1.1" fill="#ffffff"/><rect x="565.2" y="271.3" width="1.1" height="1.1" fill="#ffffff"/><rect x="567.3" y="262.7" width="1.1" height="1.1" fill="#ffffff"/><rect x="567.3" y="264.8" width="1.1" height="1.1" fill="#ffffff"/><rect x="567.3" y="267.0" width="1.1" height="1.1" fill="#ffffff"/><rect x="567.3" y="269.1" width="1.1" height="1.1" fill="#ffffff"/><rect x="567.3" y="271.3" width="1.1" height="1.1" fill="#ffffff"/></svg>
<svg style="position:absolute;left:0;top:0;overflow:visible" width="1" height="1"><rect x="638.6" y="262" width="8.8" height="11" fill="#777777"/><rect x="640.1" y="262.7" width="1.1" height="1.1" fill="#ffffff"/><rect x="640.1" y="264.8" width="1.1" height="1.1" fill="#ffffff"/><rect x="640.1" y="267.0" width="1.1" height="1.1" fill="#ffffff"/><rect x="640.1" y="269.1" width="1.1" height="1.1" fill="#ffffff"/><rect x="640.1" y="271.3" width="1.1" height="1.1" fill="#ffffff"/><rect x="642.2" y="262.7" width="1.1" height="1.1" fill="#ffffff"/><rect x="642.2" y="264.8" width="1.1" height="1.1" fill="#ffffff"/><rect x="642.2" y="267.0" width="1.1" height="1.1" fill="#ffffff"/><rect x="642.2" y="269.1" width="1.1" height="1.1" fill="#ffffff"/><rect x="642.2" y="271.3" width="1.1" height="1.1" fill="#ffffff"/><rect x="644.3" y="262.7" width="1.1" height="1.1" fill="#ffffff"/><rect x="644.3" y="264.8" width="1.1" height="1.1" fill="#ffffff"/><rect x="644.3" y="267.0" width="1.1" height="1.1" fill="#ffffff"/><rect x="644.3" y="269.1" width="1.1" height="1.1" fill="#ffffff"/><rect x="644.3" y="271.3" width="1.1" height="1.1" fill="#ffffff"/></svg>
<svg style="position:absolute;left:0;top:0;overflow:visible" width="1" height="1"><rect x="730.1" y="262" width="8.8" height="11" fill="#777777"/><rect x="731.6" y="262.7" width="1.1" height="1.1" fill="#ffffff"/><rect x="731.6" y="264.8" width="1.1" height="1.1" fill="#ffffff"/><rect x="731.6" y="267.0" width="1.1" height="1.1" fill="#ffffff"/><rect x="731.6" y="269.1" width="1.1" height="1.1" fill="#ffffff"/><rect x="731.6" y="271.3" width="1.1" height="1.1" fill="#ffffff"/><rect x="733.7" y="262.7" width="1.1" height="1.1" fill="#ffffff"/><rect x="733.7" y="264.8" width="1.1" height="1.1" fill="#ffffff"/><rect x="733.7" y="267.0" width="1.1" height="1.1" fill="#ffffff"/><rect x="733.7" y="269.1" width="1.1" height="1.1" fill="#ffffff"/><rect x="733.7" y="271.3" width="1.1" height="1.1" fill="#ffffff"/><rect x="735.8" y="262.7" width="1.1" height="1.1" fill="#ffffff"/><rect x="735.8" y="264.8" width="1.1" height="1.1" fill="#ffffff"/><rect x="735.8" y="267.0" width="1.1" height="1.1" fill="#ffffff"/><rect x="735.8" y="269.1" width="1.1" height="1.1" fill="#ffffff"/><rect x="735.8" y="271.3" width="1.1" height="1.1" fill="#ffffff"/></svg>
<svg style="position:absolute;left:0;top:0;overflow:visible" width="1" height="1"><rect x="1218.6" y="262" width="8.8" height="11" fill="#777777"/><rect x="1220.1" y="262.7" width="1.1" height="1.1" fill="#ffffff"/><rect x="1220.1" y="264.8" width="1.1" height="1.1" fill="#ffffff"/><rect x="1220.1" y="267.0" width="1.1" height="1.1" fill="#ffffff"/><rect x="1220.1" y="269.1" width="1.1" height="1.1" fill="#ffffff"/><rect x="1220.1" y="271.3" width="1.1" height="1.1" fill="#ffffff"/><rect x="1222.2" y="262.7" width="1.1" height="1.1" fill="#ffffff"/><rect x="1222.2" y="264.8" width="1.1" height="1.1" fill="#ffffff"/><rect x="1222.2" y="267.0" width="1.1" height="1.1" fill="#ffffff"/><rect x="1222.2" y="269.1" width="1.1" height="1.1" fill="#ffffff"/><rect x="1222.2" y="271.3" width="1.1" height="1.1" fill="#ffffff"/><rect x="1224.3" y="262.7" width="1.1" height="1.1" fill="#ffffff"/><rect x="1224.3" y="264.8" width="1.1" height="1.1" fill="#ffffff"/><rect x="1224.3" y="267.0" width="1.1" height="1.1" fill="#ffffff"/><rect x="1224.3" y="269.1" width="1.1" height="1.1" fill="#ffffff"/><rect x="1224.3" y="271.3" width="1.1" height="1.1" fill="#ffffff"/></svg>
<svg style="position:absolute;left:0;top:0;overflow:visible" width="1" height="1"><path d="M731 254.5 h12 v3 l-6 5.5 l-6 -5.5 z" fill="#fff" stroke="#6a6a6a" stroke-width="1"/><path d="M760 279 v-4 l6 -5 l6 5 v4 z" fill="#fff" stroke="#6a6a6a" stroke-width="1"/><path d="M1217 279 v-4 l6 -5 l6 5 v4 z" fill="#fff" stroke="#6a6a6a" stroke-width="1"/></svg>
<div style="position:absolute;left:1452.0px;top:266.0px;width:3.0px;height:9.0px;background:#555555;"></div>
<div style="position:absolute;left:1452.0px;top:272.5px;width:9.0px;height:2.5px;background:#555555;"></div>
<div style="position:absolute;left:1475.0px;top:253.0px;width:1.0px;height:32.0px;background:#d6d6d6;"></div>
<div style="position:absolute;left:1528.0px;top:257.0px;width:48.0px;height:21.0px;background:#ffffff;"></div>
<div style="position:absolute;left:1597.4px;top:257.0px;width:285.6px;height:21.0px;background:#ffffff;"></div>
<div style="position:absolute;left:1902.6px;top:257.0px;width:156.4px;height:21.0px;background:#ffffff;"></div>
<div style="position:absolute;left:2078.6px;top:257.0px;width:62.9px;height:21.0px;background:#ffffff;"></div>
<div style="position:absolute;left:2163.0px;top:257.0px;width:78.8px;height:21.0px;background:#ffffff;"></div>
<div style="position:absolute;left:2259.0px;top:257.0px;width:526.4px;height:21.0px;background:#ffffff;"></div>
<div style="position:absolute;left:1580.8px;top:262.42px;font-family:'Liberation Sans', sans-serif;font-size:12.50px;line-height:12.50px;font-weight:400;font-style:normal;color:#5c5c5c;white-space:pre;transform:translateX(-50%);">1</div>
<div style="position:absolute;left:1633.6px;top:262.42px;font-family:'Liberation Sans', sans-serif;font-size:12.50px;line-height:12.50px;font-weight:400;font-style:normal;color:#5c5c5c;white-space:pre;transform:translateX(-50%);">2</div>
<div style="position:absolute;left:1686.4px;top:262.42px;font-family:'Liberation Sans', sans-serif;font-size:12.50px;line-height:12.50px;font-weight:400;font-style:normal;color:#5c5c5c;white-space:pre;transform:translateX(-50%);">3</div>
<div style="position:absolute;left:1739.2px;top:262.42px;font-family:'Liberation Sans', sans-serif;font-size:12.50px;line-height:12.50px;font-weight:400;font-style:normal;color:#5c5c5c;white-space:pre;transform:translateX(-50%);">4</div>
<div style="position:absolute;left:1792.0px;top:262.42px;font-family:'Liberation Sans', sans-serif;font-size:12.50px;line-height:12.50px;font-weight:400;font-style:normal;color:#5c5c5c;white-space:pre;transform:translateX(-50%);">5</div>
<div style="position:absolute;left:1844.8px;top:262.42px;font-family:'Liberation Sans', sans-serif;font-size:12.50px;line-height:12.50px;font-weight:400;font-style:normal;color:#5c5c5c;white-space:pre;transform:translateX(-50%);">6</div>
<div style="position:absolute;left:1897.6px;top:262.42px;font-family:'Liberation Sans', sans-serif;font-size:12.50px;line-height:12.50px;font-weight:400;font-style:normal;color:#5c5c5c;white-space:pre;transform:translateX(-50%);">7</div>
<div style="position:absolute;left:1950.4px;top:262.42px;font-family:'Liberation Sans', sans-serif;font-size:12.50px;line-height:12.50px;font-weight:400;font-style:normal;color:#5c5c5c;white-space:pre;transform:translateX(-50%);">8</div>
<div style="position:absolute;left:2003.2px;top:262.42px;font-family:'Liberation Sans', sans-serif;font-size:12.50px;line-height:12.50px;font-weight:400;font-style:normal;color:#5c5c5c;white-space:pre;transform:translateX(-50%);">9</div>
<div style="position:absolute;left:2056.0px;top:262.42px;font-family:'Liberation Sans', sans-serif;font-size:12.50px;line-height:12.50px;font-weight:400;font-style:normal;color:#5c5c5c;white-space:pre;transform:translateX(-50%);">10</div>
<div style="position:absolute;left:2108.8px;top:262.42px;font-family:'Liberation Sans', sans-serif;font-size:12.50px;line-height:12.50px;font-weight:400;font-style:normal;color:#5c5c5c;white-space:pre;transform:translateX(-50%);">11</div>
<div style="position:absolute;left:2161.6px;top:262.42px;font-family:'Liberation Sans', sans-serif;font-size:12.50px;line-height:12.50px;font-weight:400;font-style:normal;color:#5c5c5c;white-space:pre;transform:translateX(-50%);">12</div>
<div style="position:absolute;left:2214.4px;top:262.42px;font-family:'Liberation Sans', sans-serif;font-size:12.50px;line-height:12.50px;font-weight:400;font-style:normal;color:#5c5c5c;white-space:pre;transform:translateX(-50%);">13</div>
<div style="position:absolute;left:2267.2px;top:262.42px;font-family:'Liberation Sans', sans-serif;font-size:12.50px;line-height:12.50px;font-weight:400;font-style:normal;color:#5c5c5c;white-space:pre;transform:translateX(-50%);">14</div>
<div style="position:absolute;left:2320.0px;top:262.42px;font-family:'Liberation Sans', sans-serif;font-size:12.50px;line-height:12.50px;font-weight:400;font-style:normal;color:#5c5c5c;white-space:pre;transform:translateX(-50%);">15</div>
<div style="position:absolute;left:2372.8px;top:262.42px;font-family:'Liberation Sans', sans-serif;font-size:12.50px;line-height:12.50px;font-weight:400;font-style:normal;color:#5c5c5c;white-space:pre;transform:translateX(-50%);">16</div>
<div style="position:absolute;left:2425.6px;top:262.42px;font-family:'Liberation Sans', sans-serif;font-size:12.50px;line-height:12.50px;font-weight:400;font-style:normal;color:#5c5c5c;white-space:pre;transform:translateX(-50%);">17</div>
<div style="position:absolute;left:2478.4px;top:262.42px;font-family:'Liberation Sans', sans-serif;font-size:12.50px;line-height:12.50px;font-weight:400;font-style:normal;color:#5c5c5c;white-space:pre;transform:translateX(-50%);">18</div>
<div style="position:absolute;left:2531.2px;top:262.42px;font-family:'Liberation Sans', sans-serif;font-size:12.50px;line-height:12.50px;font-weight:400;font-style:normal;color:#5c5c5c;white-space:pre;transform:translateX(-50%);">19</div>
<div style="position:absolute;left:2584.0px;top:262.42px;font-family:'Liberation Sans', sans-serif;font-size:12.50px;line-height:12.50px;font-weight:400;font-style:normal;color:#5c5c5c;white-space:pre;transform:translateX(-50%);">20</div>
<div style="position:absolute;left:2636.8px;top:262.42px;font-family:'Liberation Sans', sans-serif;font-size:12.50px;line-height:12.50px;font-weight:400;font-style:normal;color:#5c5c5c;white-space:pre;transform:translateX(-50%);">21</div>
<div style="position:absolute;left:2689.6px;top:262.42px;font-family:'Liberation Sans', sans-serif;font-size:12.50px;line-height:12.50px;font-weight:400;font-style:normal;color:#5c5c5c;white-space:pre;transform:translateX(-50%);">22</div>
<div style="position:absolute;left:2742.4px;top:262.42px;font-family:'Liberation Sans', sans-serif;font-size:12.50px;line-height:12.50px;font-weight:400;font-style:normal;color:#5c5c5c;white-space:pre;transform:translateX(-50%);">23</div>
<svg style="position:absolute;left:0;top:0;overflow:visible" width="1" height="1"><rect x="1487.8" y="267" width="1.3" height="3" fill="#5c5c5c"/><rect x="1500.9" y="264" width="1.3" height="8" fill="#5c5c5c"/><rect x="1514.1" y="267" width="1.3" height="3" fill="#5c5c5c"/><rect x="1540.5" y="267" width="1.3" height="3" fill="#5c5c5c"/><rect x="1553.8" y="264" width="1.3" height="8" fill="#5c5c5c"/><rect x="1566.9" y="267" width="1.3" height="3" fill="#5c5c5c"/><rect x="1593.3" y="267" width="1.3" height="3" fill="#5c5c5c"/><rect x="1606.5" y="264" width="1.3" height="8" fill="#5c5c5c"/><rect x="1619.8" y="267" width="1.3" height="3" fill="#5c5c5c"/><rect x="1646.1" y="267" width="1.3" height="3" fill="#5c5c5c"/><rect x="1659.3" y="264" width="1.3" height="8" fill="#5c5c5c"/><rect x="1672.5" y="267" width="1.3" height="3" fill="#5c5c5c"/><rect x="1698.9" y="267" width="1.3" height="3" fill="#5c5c5c"/><rect x="1712.1" y="264" width="1.3" height="8" fill="#5c5c5c"/><rect x="1725.3" y="267" width="1.3" height="3" fill="#5c5c5c"/><rect x="1751.8" y="267" width="1.3" height="3" fill="#5c5c5c"/><rect x="1764.9" y="264" width="1.3" height="8" fill="#5c5c5c"/><rect x="1778.1" y="267" width="1.3" height="3" fill="#5c5c5c"/><rect x="1804.5" y="267" width="1.3" height="3" fill="#5c5c5c"/><rect x="1817.8" y="264" width="1.3" height="8" fill="#5c5c5c"/><rect x="1830.9" y="267" width="1.3" height="3" fill="#5c5c5c"/><rect x="1857.3" y="267" width="1.3" height="3" fill="#5c5c5c"/><rect x="1870.5" y="264" width="1.3" height="8" fill="#5c5c5c"/><rect x="1883.8" y="267" width="1.3" height="3" fill="#5c5c5c"/><rect x="1910.1" y="267" width="1.3" height="3" fill="#5c5c5c"/><rect x="1923.3" y="264" width="1.3" height="8" fill="#5c5c5c"/><rect x="1936.5" y="267" width="1.3" height="3" fill="#5c5c5c"/><rect x="1962.9" y="267" width="1.3" height="3" fill="#5c5c5c"/><rect x="1976.1" y="264" width="1.3" height="8" fill="#5c5c5c"/><rect x="1989.3" y="267" width="1.3" height="3" fill="#5c5c5c"/><rect x="2015.8" y="267" width="1.3" height="3" fill="#5c5c5c"/><rect x="2028.9" y="264" width="1.3" height="8" fill="#5c5c5c"/><rect x="2042.1" y="267" width="1.3" height="3" fill="#5c5c5c"/><rect x="2068.5" y="267" width="1.3" height="3" fill="#5c5c5c"/><rect x="2081.8" y="264" width="1.3" height="8" fill="#5c5c5c"/><rect x="2094.9" y="267" width="1.3" height="3" fill="#5c5c5c"/><rect x="2121.3" y="267" width="1.3" height="3" fill="#5c5c5c"/><rect x="2134.5" y="264" width="1.3" height="8" fill="#5c5c5c"/><rect x="2147.8" y="267" width="1.3" height="3" fill="#5c5c5c"/><rect x="2174.2" y="267" width="1.3" height="3" fill="#5c5c5c"/><rect x="2187.3" y="264" width="1.3" height="8" fill="#5c5c5c"/><rect x="2200.5" y="267" width="1.3" height="3" fill="#5c5c5c"/><rect x="2226.9" y="267" width="1.3" height="3" fill="#5c5c5c"/><rect x="2240.2" y="264" width="1.3" height="8" fill="#5c5c5c"/><rect x="2253.3" y="267" width="1.3" height="3" fill="#5c5c5c"/><rect x="2279.8" y="267" width="1.3" height="3" fill="#5c5c5c"/><rect x="2292.9" y="264" width="1.3" height="8" fill="#5c5c5c"/><rect x="2306.2" y="267" width="1.3" height="3" fill="#5c5c5c"/><rect x="2332.5" y="267" width="1.3" height="3" fill="#5c5c5c"/><rect x="2345.8" y="264" width="1.3" height="8" fill="#5c5c5c"/><rect x="2358.9" y="267" width="1.3" height="3" fill="#5c5c5c"/><rect x="2385.3" y="267" width="1.3" height="3" fill="#5c5c5c"/><rect x="2398.5" y="264" width="1.3" height="8" fill="#5c5c5c"/><rect x="2411.8" y="267" width="1.3" height="3" fill="#5c5c5c"/><rect x="2438.2" y="267" width="1.3" height="3" fill="#5c5c5c"/><rect x="2451.3" y="264" width="1.3" height="8" fill="#5c5c5c"/><rect x="2464.5" y="267" width="1.3" height="3" fill="#5c5c5c"/><rect x="2490.9" y="267" width="1.3" height="3" fill="#5c5c5c"/><rect x="2504.2" y="264" width="1.3" height="8" fill="#5c5c5c"/><rect x="2517.3" y="267" width="1.3" height="3" fill="#5c5c5c"/><rect x="2543.8" y="267" width="1.3" height="3" fill="#5c5c5c"/><rect x="2556.9" y="264" width="1.3" height="8" fill="#5c5c5c"/><rect x="2570.2" y="267" width="1.3" height="3" fill="#5c5c5c"/><rect x="2596.5" y="267" width="1.3" height="3" fill="#5c5c5c"/><rect x="2609.7" y="264" width="1.3" height="8" fill="#5c5c5c"/><rect x="2622.9" y="267" width="1.3" height="3" fill="#5c5c5c"/><rect x="2649.3" y="267" width="1.3" height="3" fill="#5c5c5c"/><rect x="2662.5" y="264" width="1.3" height="8" fill="#5c5c5c"/><rect x="2675.7" y="267" width="1.3" height="3" fill="#5c5c5c"/><rect x="2702.2" y="267" width="1.3" height="3" fill="#5c5c5c"/><rect x="2715.3" y="264" width="1.3" height="8" fill="#5c5c5c"/><rect x="2728.5" y="267" width="1.3" height="3" fill="#5c5c5c"/><rect x="2754.9" y="267" width="1.3" height="3" fill="#5c5c5c"/><rect x="2768.2" y="264" width="1.3" height="8" fill="#5c5c5c"/><rect x="2781.3" y="267" width="1.3" height="3" fill="#5c5c5c"/><rect x="2807.7" y="267" width="1.3" height="3" fill="#5c5c5c"/><rect x="2820.9" y="264" width="1.3" height="8" fill="#5c5c5c"/><rect x="2834.2" y="267" width="1.3" height="3" fill="#5c5c5c"/></svg>
<svg style="position:absolute;left:0;top:0;overflow:visible" width="1" height="1"><rect x="1513.6" y="262" width="8.8" height="11" fill="#777777"/><rect x="1515.1" y="262.7" width="1.1" height="1.1" fill="#ffffff"/><rect x="1515.1" y="264.8" width="1.1" height="1.1" fill="#ffffff"/><rect x="1515.1" y="267.0" width="1.1" height="1.1" fill="#ffffff"/><rect x="1515.1" y="269.1" width="1.1" height="1.1" fill="#ffffff"/><rect x="1515.1" y="271.3" width="1.1" height="1.1" fill="#ffffff"/><rect x="1517.2" y="262.7" width="1.1" height="1.1" fill="#ffffff"/><rect x="1517.2" y="264.8" width="1.1" height="1.1" fill="#ffffff"/><rect x="1517.2" y="267.0" width="1.1" height="1.1" fill="#ffffff"/><rect x="1517.2" y="269.1" width="1.1" height="1.1" fill="#ffffff"/><rect x="1517.2" y="271.3" width="1.1" height="1.1" fill="#ffffff"/><rect x="1519.3" y="262.7" width="1.1" height="1.1" fill="#ffffff"/><rect x="1519.3" y="264.8" width="1.1" height="1.1" fill="#ffffff"/><rect x="1519.3" y="267.0" width="1.1" height="1.1" fill="#ffffff"/><rect x="1519.3" y="269.1" width="1.1" height="1.1" fill="#ffffff"/><rect x="1519.3" y="271.3" width="1.1" height="1.1" fill="#ffffff"/></svg>
<svg style="position:absolute;left:0;top:0;overflow:visible" width="1" height="1"><rect x="1580.6" y="262" width="8.8" height="11" fill="#777777"/><rect x="1582.1" y="262.7" width="1.1" height="1.1" fill="#ffffff"/><rect x="1582.1" y="264.8" width="1.1" height="1.1" fill="#ffffff"/><rect x="1582.1" y="267.0" width="1.1" height="1.1" fill="#ffffff"/><rect x="1582.1" y="269.1" width="1.1" height="1.1" fill="#ffffff"/><rect x="1582.1" y="271.3" width="1.1" height="1.1" fill="#ffffff"/><rect x="1584.2" y="262.7" width="1.1" height="1.1" fill="#ffffff"/><rect x="1584.2" y="264.8" width="1.1" height="1.1" fill="#ffffff"/><rect x="1584.2" y="267.0" width="1.1" height="1.1" fill="#ffffff"/><rect x="1584.2" y="269.1" width="1.1" height="1.1" fill="#ffffff"/><rect x="1584.2" y="271.3" width="1.1" height="1.1" fill="#ffffff"/><rect x="1586.3" y="262.7" width="1.1" height="1.1" fill="#ffffff"/><rect x="1586.3" y="264.8" width="1.1" height="1.1" fill="#ffffff"/><rect x="1586.3" y="267.0" width="1.1" height="1.1" fill="#ffffff"/><rect x="1586.3" y="269.1" width="1.1" height="1.1" fill="#ffffff"/><rect x="1586.3" y="271.3" width="1.1" height="1.1" fill="#ffffff"/></svg>
<svg style="position:absolute;left:0;top:0;overflow:visible" width="1" height="1"><rect x="1888.6" y="262" width="8.8" height="11" fill="#777777"/><rect x="1890.1" y="262.7" width="1.1" height="1.1" fill="#ffffff"/><rect x="1890.1" y="264.8" width="1.1" height="1.1" fill="#ffffff"/><rect x="1890.1" y="267.0" width="1.1" height="1.1" fill="#ffffff"/><rect x="1890.1" y="269.1" width="1.1" height="1.1" fill="#ffffff"/><rect x="1890.1" y="271.3" width="1.1" height="1.1" fill="#ffffff"/><rect x="1892.2" y="262.7" width="1.1" height="1.1" fill="#ffffff"/><rect x="1892.2" y="264.8" width="1.1" height="1.1" fill="#ffffff"/><rect x="1892.2" y="267.0" width="1.1" height="1.1" fill="#ffffff"/><rect x="1892.2" y="269.1" width="1.1" height="1.1" fill="#ffffff"/><rect x="1892.2" y="271.3" width="1.1" height="1.1" fill="#ffffff"/><rect x="1894.3" y="262.7" width="1.1" height="1.1" fill="#ffffff"/><rect x="1894.3" y="264.8" width="1.1" height="1.1" fill="#ffffff"/><rect x="1894.3" y="267.0" width="1.1" height="1.1" fill="#ffffff"/><rect x="1894.3" y="269.1" width="1.1" height="1.1" fill="#ffffff"/><rect x="1894.3" y="271.3" width="1.1" height="1.1" fill="#ffffff"/></svg>
<svg style="position:absolute;left:0;top:0;overflow:visible" width="1" height="1"><rect x="2063.9" y="262" width="8.8" height="11" fill="#777777"/><rect x="2065.4" y="262.7" width="1.1" height="1.1" fill="#ffffff"/><rect x="2065.4" y="264.8" width="1.1" height="1.1" fill="#ffffff"/><rect x="2065.4" y="267.0" width="1.1" height="1.1" fill="#ffffff"/><rect x="2065.4" y="269.1" width="1.1" height="1.1" fill="#ffffff"/><rect x="2065.4" y="271.3" width="1.1" height="1.1" fill="#ffffff"/><rect x="2067.5" y="262.7" width="1.1" height="1.1" fill="#ffffff"/><rect x="2067.5" y="264.8" width="1.1" height="1.1" fill="#ffffff"/><rect x="2067.5" y="267.0" width="1.1" height="1.1" fill="#ffffff"/><rect x="2067.5" y="269.1" width="1.1" height="1.1" fill="#ffffff"/><rect x="2067.5" y="271.3" width="1.1" height="1.1" fill="#ffffff"/><rect x="2069.6" y="262.7" width="1.1" height="1.1" fill="#ffffff"/><rect x="2069.6" y="264.8" width="1.1" height="1.1" fill="#ffffff"/><rect x="2069.6" y="267.0" width="1.1" height="1.1" fill="#ffffff"/><rect x="2069.6" y="269.1" width="1.1" height="1.1" fill="#ffffff"/><rect x="2069.6" y="271.3" width="1.1" height="1.1" fill="#ffffff"/></svg>
<svg style="position:absolute;left:0;top:0;overflow:visible" width="1" height="1"><rect x="2147.1" y="262" width="8.8" height="11" fill="#777777"/><rect x="2148.6" y="262.7" width="1.1" height="1.1" fill="#ffffff"/><rect x="2148.6" y="264.8" width="1.1" height="1.1" fill="#ffffff"/><rect x="2148.6" y="267.0" width="1.1" height="1.1" fill="#ffffff"/><rect x="2148.6" y="269.1" width="1.1" height="1.1" fill="#ffffff"/><rect x="2148.6" y="271.3" width="1.1" height="1.1" fill="#ffffff"/><rect x="2150.7" y="262.7" width="1.1" height="1.1" fill="#ffffff"/><rect x="2150.7" y="264.8" width="1.1" height="1.1" fill="#ffffff"/><rect x="2150.7" y="267.0" width="1.1" height="1.1" fill="#ffffff"/><rect x="2150.7" y="269.1" width="1.1" height="1.1" fill="#ffffff"/><rect x="2150.7" y="271.3" width="1.1" height="1.1" fill="#ffffff"/><rect x="2152.8" y="262.7" width="1.1" height="1.1" fill="#ffffff"/><rect x="2152.8" y="264.8" width="1.1" height="1.1" fill="#ffffff"/><rect x="2152.8" y="267.0" width="1.1" height="1.1" fill="#ffffff"/><rect x="2152.8" y="269.1" width="1.1" height="1.1" fill="#ffffff"/><rect x="2152.8" y="271.3" width="1.1" height="1.1" fill="#ffffff"/></svg>
<svg style="position:absolute;left:0;top:0;overflow:visible" width="1" height="1"><rect x="2247.6" y="262" width="8.8" height="11" fill="#777777"/><rect x="2249.1" y="262.7" width="1.1" height="1.1" fill="#ffffff"/><rect x="2249.1" y="264.8" width="1.1" height="1.1" fill="#ffffff"/><rect x="2249.1" y="267.0" width="1.1" height="1.1" fill="#ffffff"/><rect x="2249.1" y="269.1" width="1.1" height="1.1" fill="#ffffff"/><rect x="2249.1" y="271.3" width="1.1" height="1.1" fill="#ffffff"/><rect x="2251.2" y="262.7" width="1.1" height="1.1" fill="#ffffff"/><rect x="2251.2" y="264.8" width="1.1" height="1.1" fill="#ffffff"/><rect x="2251.2" y="267.0" width="1.1" height="1.1" fill="#ffffff"/><rect x="2251.2" y="269.1" width="1.1" height="1.1" fill="#ffffff"/><rect x="2251.2" y="271.3" width="1.1" height="1.1" fill="#ffffff"/><rect x="2253.3" y="262.7" width="1.1" height="1.1" fill="#ffffff"/><rect x="2253.3" y="264.8" width="1.1" height="1.1" fill="#ffffff"/><rect x="2253.3" y="267.0" width="1.1" height="1.1" fill="#ffffff"/><rect x="2253.3" y="269.1" width="1.1" height="1.1" fill="#ffffff"/><rect x="2253.3" y="271.3" width="1.1" height="1.1" fill="#ffffff"/></svg>
<svg style="position:absolute;left:0;top:0;overflow:visible" width="1" height="1"><rect x="2792.6" y="262" width="8.8" height="11" fill="#777777"/><rect x="2794.1" y="262.7" width="1.1" height="1.1" fill="#ffffff"/><rect x="2794.1" y="264.8" width="1.1" height="1.1" fill="#ffffff"/><rect x="2794.1" y="267.0" width="1.1" height="1.1" fill="#ffffff"/><rect x="2794.1" y="269.1" width="1.1" height="1.1" fill="#ffffff"/><rect x="2794.1" y="271.3" width="1.1" height="1.1" fill="#ffffff"/><rect x="2796.2" y="262.7" width="1.1" height="1.1" fill="#ffffff"/><rect x="2796.2" y="264.8" width="1.1" height="1.1" fill="#ffffff"/><rect x="2796.2" y="267.0" width="1.1" height="1.1" fill="#ffffff"/><rect x="2796.2" y="269.1" width="1.1" height="1.1" fill="#ffffff"/><rect x="2796.2" y="271.3" width="1.1" height="1.1" fill="#ffffff"/><rect x="2798.3" y="262.7" width="1.1" height="1.1" fill="#ffffff"/><rect x="2798.3" y="264.8" width="1.1" height="1.1" fill="#ffffff"/><rect x="2798.3" y="267.0" width="1.1" height="1.1" fill="#ffffff"/><rect x="2798.3" y="269.1" width="1.1" height="1.1" fill="#ffffff"/><rect x="2798.3" y="271.3" width="1.1" height="1.1" fill="#ffffff"/></svg>
<svg style="position:absolute;left:0;top:0;overflow:visible" width="1" height="1"><path d="M2246 254.5 h12 v3 l-6 5.5 l-6 -5.5 z" fill="#fff" stroke="#6a6a6a" stroke-width="1"/><path d="M2283 280 v-4 l6 -5 l6 5 v4 z" fill="#fff" stroke="#6a6a6a" stroke-width="1"/><path d="M2788 280 v-4 l6 -5 l6 5 v4 z" fill="#fff" stroke="#6a6a6a" stroke-width="1"/></svg>
<div style="position:absolute;left:1.0px;top:285.5px;width:33.5px;height:1341.0px;background:#e4e8ef;"></div>
<div style="position:absolute;left:5.0px;top:285.5px;width:23.0px;height:49.5px;background:#ffffff;"></div>
<div style="position:absolute;left:5.0px;top:340.4px;width:23.0px;height:442.3px;background:#ffffff;"></div>
<div style="position:absolute;left:5.0px;top:792.6px;width:23.0px;height:22.4px;background:#ffffff;"></div>
<div style="position:absolute;left:5.0px;top:335.0px;width:23.0px;height:5.4px;background:#ececec;"></div>
<div style="position:absolute;left:5.0px;top:782.7px;width:23.0px;height:9.9px;background:#ececec;"></div>
<div style="position:absolute;left:17.5px;top:286.75px;font-family:'Liberation Sans', sans-serif;font-size:12.50px;line-height:12.50px;font-weight:400;font-style:normal;color:#5c5c5c;white-space:pre;transform:translateX(-50%);transform:translateX(-50%) rotate(-90deg);transform-origin:50% 50%;">6</div>
<div style="position:absolute;left:17.5px;top:381.95px;font-family:'Liberation Sans', sans-serif;font-size:12.50px;line-height:12.50px;font-weight:400;font-style:normal;color:#5c5c5c;white-space:pre;transform:translateX(-50%);transform:translateX(-50%) rotate(-90deg);transform-origin:50% 50%;">8</div>
<div style="position:absolute;left:17.5px;top:429.55px;font-family:'Liberation Sans', sans-serif;font-size:12.50px;line-height:12.50px;font-weight:400;font-style:normal;color:#5c5c5c;white-space:pre;transform:translateX(-50%);transform:translateX(-50%) rotate(-90deg);transform-origin:50% 50%;">9</div>
<div style="position:absolute;left:17.5px;top:477.15px;font-family:'Liberation Sans', sans-serif;font-size:12.50px;line-height:12.50px;font-weight:400;font-style:normal;color:#5c5c5c;white-space:pre;transform:translateX(-50%);transform:translateX(-50%) rotate(-90deg);transform-origin:50% 50%;">10</div>
<div style="position:absolute;left:17.5px;top:524.75px;font-family:'Liberation Sans', sans-serif;font-size:12.50px;line-height:12.50px;font-weight:400;font-style:normal;color:#5c5c5c;white-space:pre;transform:translateX(-50%);transform:translateX(-50%) rotate(-90deg);transform-origin:50% 50%;">11</div>
<div style="position:absolute;left:17.5px;top:572.35px;font-family:'Liberation Sans', sans-serif;font-size:12.50px;line-height:12.50px;font-weight:400;font-style:normal;color:#5c5c5c;white-space:pre;transform:translateX(-50%);transform:translateX(-50%) rotate(-90deg);transform-origin:50% 50%;">12</div>
<div style="position:absolute;left:17.5px;top:619.95px;font-family:'Liberation Sans', sans-serif;font-size:12.50px;line-height:12.50px;font-weight:400;font-style:normal;color:#5c5c5c;white-space:pre;transform:translateX(-50%);transform:translateX(-50%) rotate(-90deg);transform-origin:50% 50%;">13</div>
<div style="position:absolute;left:17.5px;top:667.55px;font-family:'Liberation Sans', sans-serif;font-size:12.50px;line-height:12.50px;font-weight:400;font-style:normal;color:#5c5c5c;white-space:pre;transform:translateX(-50%);transform:translateX(-50%) rotate(-90deg);transform-origin:50% 50%;">14</div>
<div style="position:absolute;left:17.5px;top:715.15px;font-family:'Liberation Sans', sans-serif;font-size:12.50px;line-height:12.50px;font-weight:400;font-style:normal;color:#5c5c5c;white-space:pre;transform:translateX(-50%);transform:translateX(-50%) rotate(-90deg);transform-origin:50% 50%;">15</div>
<div style="position:absolute;left:17.5px;top:762.75px;font-family:'Liberation Sans', sans-serif;font-size:12.50px;line-height:12.50px;font-weight:400;font-style:normal;color:#5c5c5c;white-space:pre;transform:translateX(-50%);transform:translateX(-50%) rotate(-90deg);transform-origin:50% 50%;">16</div>
<svg style="position:absolute;left:0;top:0;overflow:visible" width="1" height="1"><rect x="16.8" y="304.2" width="3" height="1.3" fill="#5c5c5c"/><rect x="14.3" y="316.2" width="8" height="1.3" fill="#5c5c5c"/><rect x="16.8" y="328.1" width="3" height="1.3" fill="#5c5c5c"/><rect x="16.8" y="351.9" width="3" height="1.3" fill="#5c5c5c"/><rect x="14.3" y="363.8" width="8" height="1.3" fill="#5c5c5c"/><rect x="16.8" y="375.7" width="3" height="1.3" fill="#5c5c5c"/><rect x="16.8" y="399.4" width="3" height="1.3" fill="#5c5c5c"/><rect x="14.3" y="411.4" width="8" height="1.3" fill="#5c5c5c"/><rect x="16.8" y="423.2" width="3" height="1.3" fill="#5c5c5c"/><rect x="16.8" y="447.1" width="3" height="1.3" fill="#5c5c5c"/><rect x="14.3" y="458.9" width="8" height="1.3" fill="#5c5c5c"/><rect x="16.8" y="470.9" width="3" height="1.3" fill="#5c5c5c"/><rect x="16.8" y="494.7" width="3" height="1.3" fill="#5c5c5c"/><rect x="14.3" y="506.6" width="8" height="1.3" fill="#5c5c5c"/><rect x="16.8" y="518.4" width="3" height="1.3" fill="#5c5c5c"/><rect x="16.8" y="542.2" width="3" height="1.3" fill="#5c5c5c"/><rect x="14.3" y="554.1" width="8" height="1.3" fill="#5c5c5c"/><rect x="16.8" y="566.1" width="3" height="1.3" fill="#5c5c5c"/><rect x="16.8" y="589.9" width="3" height="1.3" fill="#5c5c5c"/><rect x="14.3" y="601.8" width="8" height="1.3" fill="#5c5c5c"/><rect x="16.8" y="613.6" width="3" height="1.3" fill="#5c5c5c"/><rect x="16.8" y="637.5" width="3" height="1.3" fill="#5c5c5c"/><rect x="14.3" y="649.4" width="8" height="1.3" fill="#5c5c5c"/><rect x="16.8" y="661.2" width="3" height="1.3" fill="#5c5c5c"/><rect x="16.8" y="685.1" width="3" height="1.3" fill="#5c5c5c"/><rect x="14.3" y="697.0" width="8" height="1.3" fill="#5c5c5c"/><rect x="16.8" y="708.9" width="3" height="1.3" fill="#5c5c5c"/><rect x="16.8" y="732.6" width="3" height="1.3" fill="#5c5c5c"/><rect x="14.3" y="744.6" width="8" height="1.3" fill="#5c5c5c"/><rect x="16.8" y="756.5" width="3" height="1.3" fill="#5c5c5c"/><rect x="16.8" y="780.2" width="3" height="1.3" fill="#5c5c5c"/><rect x="14.3" y="792.1" width="8" height="1.3" fill="#5c5c5c"/><rect x="16.8" y="804.1" width="3" height="1.3" fill="#5c5c5c"/><rect x="14.3" y="816.0" width="8" height="1.3" fill="#5c5c5c"/><rect x="16.8" y="827.9" width="3" height="1.3" fill="#5c5c5c"/><rect x="14.3" y="839.8" width="8" height="1.3" fill="#5c5c5c"/><rect x="16.8" y="851.6" width="3" height="1.3" fill="#5c5c5c"/><rect x="14.3" y="863.6" width="8" height="1.3" fill="#5c5c5c"/><rect x="16.8" y="875.5" width="3" height="1.3" fill="#5c5c5c"/><rect x="14.3" y="887.4" width="8" height="1.3" fill="#5c5c5c"/><rect x="16.8" y="899.2" width="3" height="1.3" fill="#5c5c5c"/></svg>
<div style="position:absolute;left:1440.0px;top:285.4px;width:34.5px;height:1341.0px;background:linear-gradient(90deg,#c2c2c2 0px,#dcdcdc 10px,#e9e9e9 34px);"></div>
<div style="position:absolute;left:1445.2px;top:285.4px;width:23.0px;height:392.6px;background:#ffffff;"></div>
<div style="position:absolute;left:1445.2px;top:686.8px;width:23.0px;height:50.9px;background:#ffffff;"></div>
<div style="position:absolute;left:1445.2px;top:678.0px;width:23.0px;height:8.8px;background:#ececec;"></div>
<div style="position:absolute;left:1458.0px;top:300.75px;font-family:'Liberation Sans', sans-serif;font-size:12.50px;line-height:12.50px;font-weight:400;font-style:normal;color:#5c5c5c;white-space:pre;transform:translateX(-50%);transform:translateX(-50%) rotate(-90deg);transform-origin:50% 50%;">10</div>
<div style="position:absolute;left:1458.0px;top:353.55px;font-family:'Liberation Sans', sans-serif;font-size:12.50px;line-height:12.50px;font-weight:400;font-style:normal;color:#5c5c5c;white-space:pre;transform:translateX(-50%);transform:translateX(-50%) rotate(-90deg);transform-origin:50% 50%;">11</div>
<div style="position:absolute;left:1458.0px;top:406.35px;font-family:'Liberation Sans', sans-serif;font-size:12.50px;line-height:12.50px;font-weight:400;font-style:normal;color:#5c5c5c;white-space:pre;transform:translateX(-50%);transform:translateX(-50%) rotate(-90deg);transform-origin:50% 50%;">12</div>
<div style="position:absolute;left:1458.0px;top:459.15px;font-family:'Liberation Sans', sans-serif;font-size:12.50px;line-height:12.50px;font-weight:400;font-style:normal;color:#5c5c5c;white-space:pre;transform:translateX(-50%);transform:translateX(-50%) rotate(-90deg);transform-origin:50% 50%;">13</div>
<div style="position:absolute;left:1458.0px;top:511.95px;font-family:'Liberation Sans', sans-serif;font-size:12.50px;line-height:12.50px;font-weight:400;font-style:normal;color:#5c5c5c;white-space:pre;transform:translateX(-50%);transform:translateX(-50%) rotate(-90deg);transform-origin:50% 50%;">14</div>
<div style="position:absolute;left:1458.0px;top:564.75px;font-family:'Liberation Sans', sans-serif;font-size:12.50px;line-height:12.50px;font-weight:400;font-style:normal;color:#5c5c5c;white-space:pre;transform:translateX(-50%);transform:translateX(-50%) rotate(-90deg);transform-origin:50% 50%;">15</div>
<div style="position:absolute;left:1458.0px;top:617.55px;font-family:'Liberation Sans', sans-serif;font-size:12.50px;line-height:12.50px;font-weight:400;font-style:normal;color:#5c5c5c;white-space:pre;transform:translateX(-50%);transform:translateX(-50%) rotate(-90deg);transform-origin:50% 50%;">16</div>
<div style="position:absolute;left:1458.0px;top:670.35px;font-family:'Liberation Sans', sans-serif;font-size:12.50px;line-height:12.50px;font-weight:400;font-style:normal;color:#5c5c5c;white-space:pre;transform:translateX(-50%);transform:translateX(-50%) rotate(-90deg);transform-origin:50% 50%;">17</div>
<div style="position:absolute;left:1458.0px;top:723.15px;font-family:'Liberation Sans', sans-serif;font-size:12.50px;line-height:12.50px;font-weight:400;font-style:normal;color:#5c5c5c;white-space:pre;transform:translateX(-50%);transform:translateX(-50%) rotate(-90deg);transform-origin:50% 50%;">18</div>
<svg style="position:absolute;left:0;top:0;overflow:visible" width="1" height="1"><rect x="1456.5" y="293.1" width="3" height="1.3" fill="#5c5c5c"/><rect x="1456.5" y="319.5" width="3" height="1.3" fill="#5c5c5c"/><rect x="1454.0" y="332.8" width="8" height="1.3" fill="#5c5c5c"/><rect x="1456.5" y="346.0" width="3" height="1.3" fill="#5c5c5c"/><rect x="1456.5" y="372.4" width="3" height="1.3" fill="#5c5c5c"/><rect x="1454.0" y="385.5" width="8" height="1.3" fill="#5c5c5c"/><rect x="1456.5" y="398.8" width="3" height="1.3" fill="#5c5c5c"/><rect x="1456.5" y="425.1" width="3" height="1.3" fill="#5c5c5c"/><rect x="1454.0" y="438.4" width="8" height="1.3" fill="#5c5c5c"/><rect x="1456.5" y="451.5" width="3" height="1.3" fill="#5c5c5c"/><rect x="1456.5" y="477.9" width="3" height="1.3" fill="#5c5c5c"/><rect x="1454.0" y="491.1" width="8" height="1.3" fill="#5c5c5c"/><rect x="1456.5" y="504.4" width="3" height="1.3" fill="#5c5c5c"/><rect x="1456.5" y="530.8" width="3" height="1.3" fill="#5c5c5c"/><rect x="1454.0" y="543.9" width="8" height="1.3" fill="#5c5c5c"/><rect x="1456.5" y="557.1" width="3" height="1.3" fill="#5c5c5c"/><rect x="1456.5" y="583.5" width="3" height="1.3" fill="#5c5c5c"/><rect x="1454.0" y="596.8" width="8" height="1.3" fill="#5c5c5c"/><rect x="1456.5" y="609.9" width="3" height="1.3" fill="#5c5c5c"/><rect x="1456.5" y="636.4" width="3" height="1.3" fill="#5c5c5c"/><rect x="1454.0" y="649.5" width="8" height="1.3" fill="#5c5c5c"/><rect x="1456.5" y="662.8" width="3" height="1.3" fill="#5c5c5c"/><rect x="1456.5" y="689.1" width="3" height="1.3" fill="#5c5c5c"/><rect x="1454.0" y="702.4" width="8" height="1.3" fill="#5c5c5c"/><rect x="1456.5" y="715.5" width="3" height="1.3" fill="#5c5c5c"/><rect x="1456.5" y="741.9" width="3" height="1.3" fill="#5c5c5c"/><rect x="1454.0" y="755.1" width="8" height="1.3" fill="#5c5c5c"/><rect x="1456.5" y="768.4" width="3" height="1.3" fill="#5c5c5c"/><rect x="1454.0" y="781.5" width="8" height="1.3" fill="#5c5c5c"/><rect x="1456.5" y="794.8" width="3" height="1.3" fill="#5c5c5c"/><rect x="1454.0" y="807.9" width="8" height="1.3" fill="#5c5c5c"/></svg>
<svg style="position:absolute;left:0;top:0;overflow:visible" width="1" height="1"><path d="M1271.8 400.3 h17 v11.5 h-12 l-4 4 v-4 h-1 z" fill="#fbfbfb" stroke="#5a5a5a" stroke-width="1.6" stroke-linejoin="miter"/></svg>
<svg style="position:absolute;left:0;top:0;overflow:visible" width="1" height="1"><path d="M2830.3 468.8 h17 v11.5 h-12 l-4 4 v-4 h-1 z" fill="#fbfbfb" stroke="#5a5a5a" stroke-width="1.6" stroke-linejoin="miter"/></svg>
<svg style="position:absolute;left:0;top:0;overflow:visible" width="1" height="1"><rect x="2827.3" y="466.4" width="9.5" height="9.5" fill="#fff"/><path d="M2827.4 472 h9.8 M2832.3 467.1 v9.8" stroke="#2e9e3e" stroke-width="1.6"/></svg>
<svg style="position:absolute;left:0;top:0;overflow:visible" width="1" height="1"><path d="M2796.8 557.3 h17 v11.5 h-12 l-4 4 v-4 h-1 z" fill="#fbfbfb" stroke="#5a5a5a" stroke-width="1.6" stroke-linejoin="miter"/></svg>
<svg style="position:absolute;left:0;top:0;overflow:visible" width="1" height="1"><path d="M2796.8 1463.3 h17 v11.5 h-12 l-4 4 v-4 h-1 z" fill="#fbfbfb" stroke="#5a5a5a" stroke-width="1.6" stroke-linejoin="miter"/></svg>
<div style="position:absolute;left:1345.5px;top:400.6px;width:69.5px;height:123.7px;background:#ffffff;border-radius:7px 0 0 7px;box-shadow:-1px 0 0 #e3e3e3, 0 -1px 0 #e3e3e3;"></div>
<svg style="position:absolute;left:0;top:0;overflow:visible" width="1" height="1"><defs><clipPath id="avc3"><circle cx="1348" cy="423.5" r="12.6"/></clipPath></defs><g clip-path="url(#avc3)"><rect x="1334.6588235294118" y="410.1588235294118" width="26.68235294117647" height="26.68235294117647" fill="#6eaae2"/><path d="M1334.6588235294118 428.68823529411765 L1344.2941176470588 424.9823529411765 L1348.370588235294 430.17058823529413 L1352.4470588235295 424.9823529411765 L1361.3411764705882 428.68823529411765 L1361.3411764705882 436.8411764705882 L1334.6588235294118 436.8411764705882 Z" fill="#f2f2f6"/><path d="M1344.1458823529413 421.27647058823527 L1352.2988235294117 421.27647058823527 L1352.4470588235295 425.3529411764706 L1348.370588235294 430.17058823529413 L1344.2941176470588 425.3529411764706 Z" fill="#e9b8a0"/><ellipse cx="1348.370588235294" cy="417.5705882352941" rx="6.225882352941177" ry="7.263529411764707" fill="#ecc0a9"/><path d="M1341.6258823529413 415.34705882352944 C1341.6258823529413 409.41764705882355, 1355.115294117647 409.41764705882355, 1355.115294117647 415.34705882352944 C1352.4470588235295 413.71647058823527, 1344.2941176470588 413.71647058823527, 1341.6258823529413 415.34705882352944 Z" fill="#6b554a"/><ellipse cx="1345.7764705882353" cy="416.0882352941176" rx="1.111764705882353" ry="0.6670588235294118" fill="#7d5a4e"/><ellipse cx="1350.964705882353" cy="416.0882352941176" rx="1.111764705882353" ry="0.6670588235294118" fill="#7d5a4e"/><ellipse cx="1348.370588235294" cy="420.3870588235294" rx="1.630588235294118" ry="0.6670588235294118" fill="#d98b86"/></g></svg>
<div style="position:absolute;left:1373.0px;top:419.74px;font-family:'Liberation Sans', sans-serif;font-size:15.42px;line-height:15.42px;font-weight:700;font-style:normal;color:#242424;white-space:pre;">Phạm</div>
<div style="position:absolute;left:1373.5px;top:446.28px;font-family:'Liberation Sans', sans-serif;font-size:14.79px;line-height:14.79px;font-weight:400;font-style:normal;color:#242424;white-space:pre;">30/10</div>
<div style="position:absolute;left:1360.5px;top:478.8px;width:60.0px;height:32.6px;background:#ffffff;border:1px solid #c8c8c8;border-radius:4px;box-sizing:border-box;"></div>
<div style="position:absolute;left:1374.5px;top:489.48px;font-family:'Liberation Sans', sans-serif;font-size:14.08px;line-height:14.08px;font-weight:400;font-style:normal;color:#616161;white-space:pre;">Reply</div>
<div style="position:absolute;left:1415.0px;top:390.0px;width:24.0px;height:150.0px;background:#e4e8ef;"></div>
<div style="position:absolute;left:673.0px;top:588.7px;width:567.6px;height:120.1px;background:transparent;border:4.2px solid #ff0000;box-sizing:border-box;border-radius:2px;"></div>
<div style="position:absolute;left:2177.5px;top:432.0px;width:629.0px;height:131.0px;background:transparent;border:3.8px solid #ff0000;box-sizing:border-box;border-radius:2px;"></div>
<div style="position:absolute;left:1474.6px;top:285.4px;width:32.0px;height:1341.0px;background:linear-gradient(90deg,rgba(0,0,0,0.04),rgba(0,0,0,0));"></div>
</body></html>
